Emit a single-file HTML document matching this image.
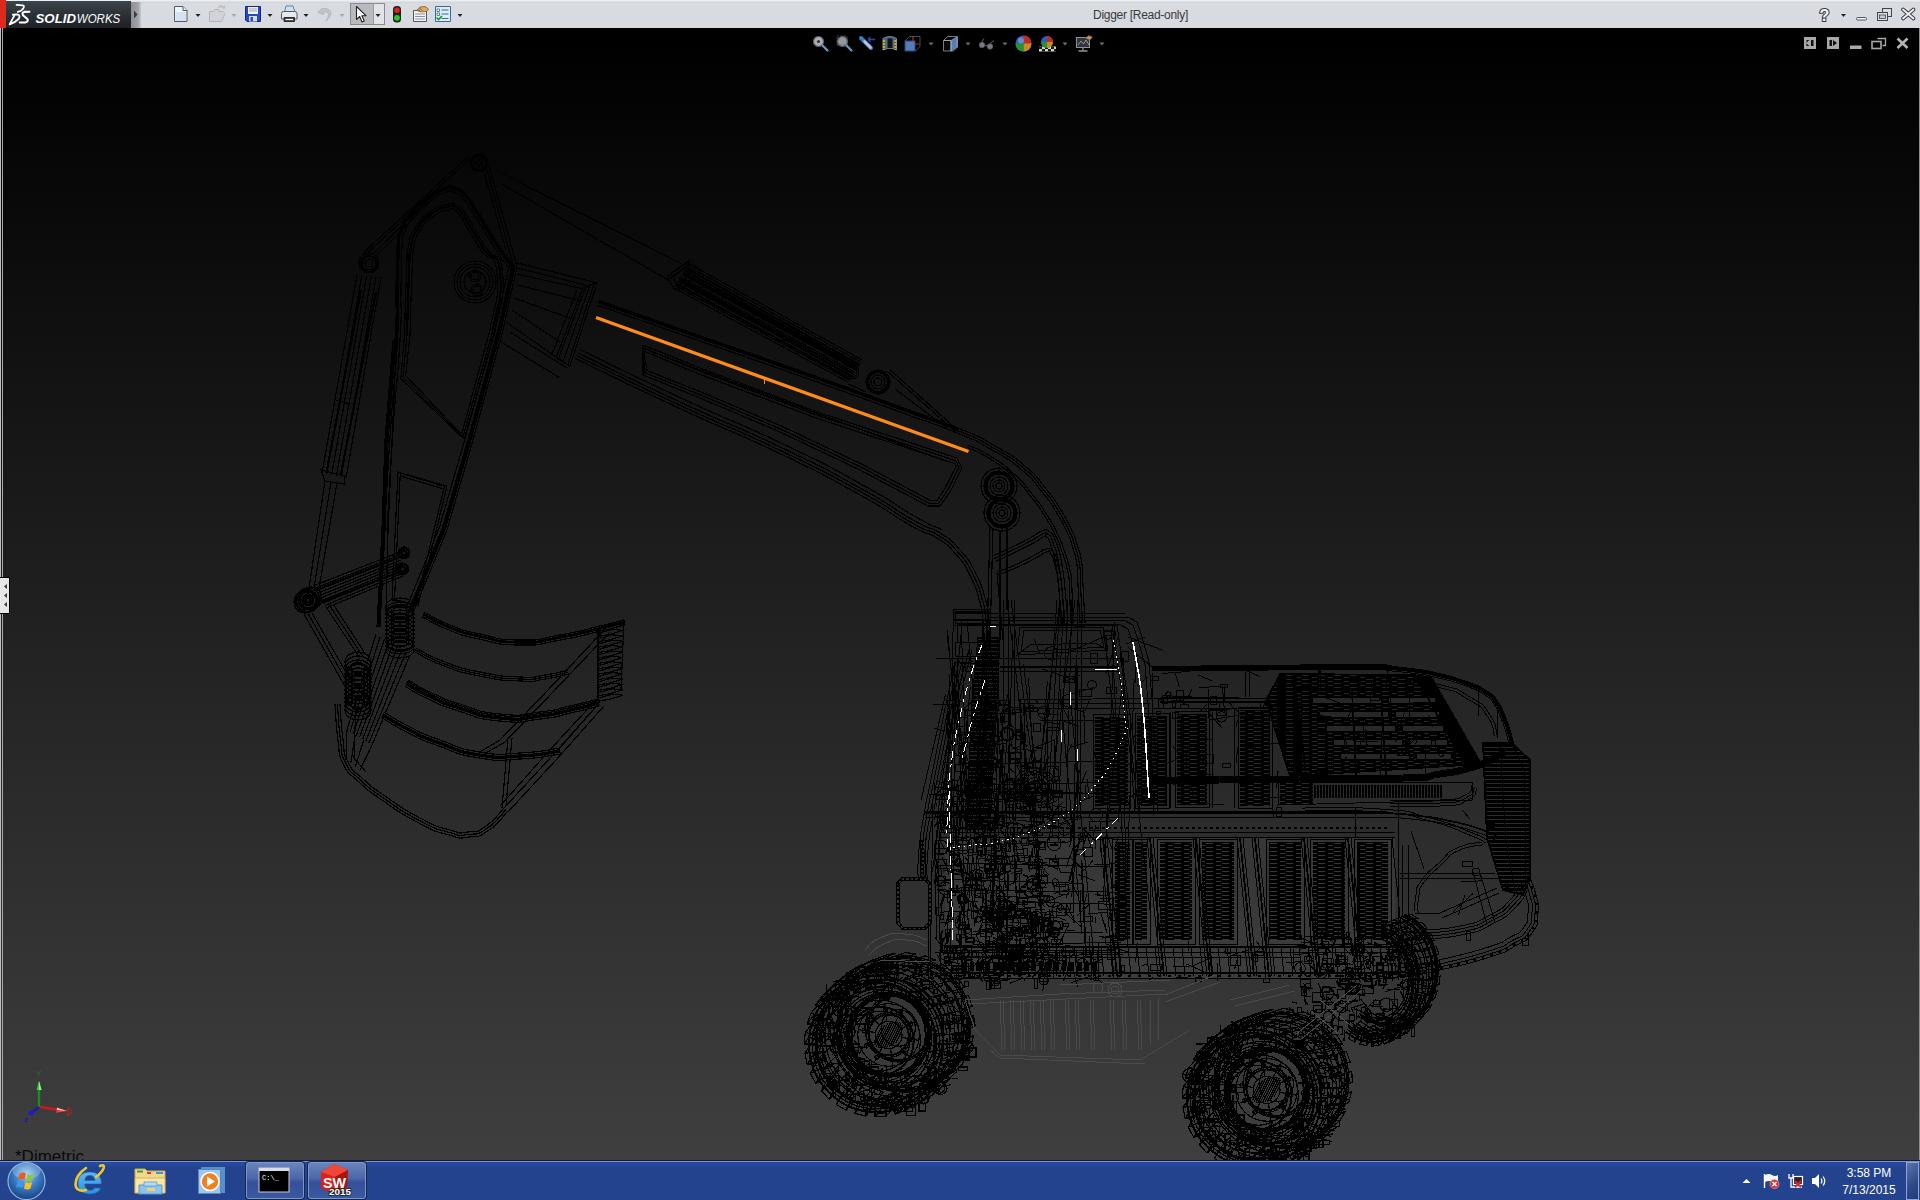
<!DOCTYPE html>
<html lang="en">
<head>
<meta charset="utf-8">
<title>Digger [Read-only] - SOLIDWORKS</title>
<style>
html,body{margin:0;padding:0;width:1920px;height:1200px;overflow:hidden;background:#000;font-family:"Liberation Sans",sans-serif;}
#app{position:absolute;left:0;top:0;width:1920px;height:1200px;overflow:hidden;}
#titlebar{position:absolute;left:0;top:0;width:1920px;height:28px;background:linear-gradient(#eaedf2 0,#eaedf2 1px,#dfe2e7 1px,#dfe2e7 2px,#d3d6db 2px,#d3d6db 3px,#d8dbe0 3px,#d8dbe0 16px,#d6dae4 18px,#d6dae4 21px,#d9dade 23px,#d9dade 26px,#dadadc 26px,#dadadc 28px);}
#redstrip{position:absolute;left:0;top:0;width:6px;height:28px;background:#dc2a1c;}
#logo{position:absolute;left:6px;top:1px;width:125px;height:27px;background:linear-gradient(#3b454b,#2b3137 50%,#1e2126);}
#logoarrow{position:absolute;left:131px;top:2px;width:10px;height:26px;background:linear-gradient(90deg,#8f9096,#a2a3a8 70%,#c8c9ce);}
#title{position:absolute;left:1093px;top:8px;font-size:12px;color:#3a3a3a;white-space:nowrap;letter-spacing:-0.28px;}
#viewport{position:absolute;left:0;top:28px;width:1920px;height:1132px;background:linear-gradient(#000 0,#000 1%,#3f3f3f 100%);}
#lb0{position:absolute;left:0;top:28px;width:1px;height:1132px;background:#bdbdbd;}
#lb1{position:absolute;left:2px;top:28px;width:1px;height:1132px;background:#a8a8a8;}
#rb{position:absolute;left:1919px;top:28px;width:1px;height:1132px;background:#8c8c94;}
#handle{position:absolute;left:0;top:577px;width:10px;height:37px;background:#e6e6e8;border-right:1px solid #000;border-top:1px solid #000;border-bottom:1px solid #000;box-sizing:border-box;}
#taskbar{position:absolute;left:0;top:1160px;width:1920px;height:40px;background:linear-gradient(#0e1c40 0,#0e1c40 1px,#7d95c4 1px,#7d95c4 2px,#25499b 2px,#25499b 5px,#23438f 7px,#23438f 100%);}
.tbtn{position:absolute;top:1162px;height:37px;border:1px solid #7f95c6;border-radius:3px;box-sizing:border-box;background:linear-gradient(#6a84bd,#4a66a6 45%,#34509a 55%,#3a58a0);box-shadow:0 0 0 1px #142652;}
#clock{position:absolute;left:1829px;top:1165px;width:80px;color:#fff;font-size:12px;line-height:17px;text-align:center;white-space:nowrap;}
#dimetric{position:absolute;left:15px;top:1147px;font-size:17px;letter-spacing:0;color:#0a0a0a;white-space:nowrap;}
#showdesk{position:absolute;left:1906px;top:1162px;width:13px;height:38px;box-sizing:border-box;border:1px solid #8ea4d4;background:linear-gradient(135deg,#5c74a8,#2f4a86 60%,#22397a);}
svg{position:absolute;left:0;top:0;overflow:visible;}
</style>
</head>
<body>
<div id="app">
<div id="viewport"></div>
<svg width="1920" height="1200" viewBox="0 0 1920 1200" shape-rendering="crispEdges">
<path d="M470 163a9 9 0 1 0 18 0a9 9 0 1 0 -18 0M472.5 163a6.5 6.5 0 1 0 13 0a6.5 6.5 0 1 0 -13 0M475 163a4 4 0 1 0 8 0a4 4 0 1 0 -8 0M477 163a2 2 0 1 0 4 0a2 2 0 1 0 -4 0M359 263a10 10 0 1 0 20 0a10 10 0 1 0 -20 0M362 263a7 7 0 1 0 14 0a7 7 0 1 0 -14 0M365 263a4 4 0 1 0 8 0a4 4 0 1 0 -8 0M454 282a21 21 0 1 0 42 0a21 21 0 1 0 -42 0M457 282a18 18 0 1 0 36 0a18 18 0 1 0 -36 0M460 282a15 15 0 1 0 30 0a15 15 0 1 0 -30 0M464 282a11 11 0 1 0 22 0a11 11 0 1 0 -22 0M469 276a6 6 0 1 0 12 0a6 6 0 1 0 -12 0M471 276a4 4 0 1 0 8 0a4 4 0 1 0 -8 0M471 290a6 6 0 1 0 12 0a6 6 0 1 0 -12 0M473 290a4 4 0 1 0 8 0a4 4 0 1 0 -8 0M362 254L470 155M364 256L472 157M375 257L442 190M373 254L440 188M488 162L517 267M486 166L514 268M484 172L506 250M382 530C384 496.7 383.7 493.3 388 430C392.3 366.7 392.3 386.7 395 340C397.7 293.3 395.3 321 396 290C396.7 259 395.7 267 397 247C398.3 227 395.7 241.3 400 230C404.3 218.7 402.3 223 410 213C417.7 203 412 208.3 423 200C434 191.7 431.7 192 443 188C454.3 184 449 185.7 457 188C465 190.3 460.3 187.7 467 195C473.7 202.3 466 192.7 477 210C488 227.3 487.3 228 500 247C512.7 266 510 260.3 515 267M384.5 530.1C386.5 496.8 386.2 493.5 390.5 430.2C394.8 366.8 394.8 386.8 397.5 340.1C400.2 293.4 397.8 321 398.5 290.1C399.2 259.1 398.2 266.9 399.5 247.2C400.8 227.4 398.2 241.8 402.3 230.9C406.5 220 404.6 224.2 412 214.5C419.4 204.9 413.9 210 424.5 202C435.1 193.9 433.2 194.2 443.8 190.4C454.4 186.5 449.2 188.3 456.3 190.4C463.4 192.5 459 189.7 465.2 196.7C471.3 203.7 464 194.1 474.9 211.3C485.8 228.6 485.2 229.3 497.9 248.4C510.6 267.4 508 261.8 513 268.5M387 530.3C389 497 388.7 493.7 393 430.3C397.3 367 397.3 387 400 340.3C402.7 293.5 400.3 321.1 401 290.1C401.7 259.1 400.8 266.8 402 247.3C403.2 227.9 400.7 242.2 404.7 231.8C408.7 221.4 406.9 225.3 414 216C421.1 206.8 415.8 211.8 426 204C436.3 196.2 434.8 196.4 444.7 192.7C454.5 189 449.4 190.9 455.6 192.8C461.8 194.7 457.6 191.7 463.3 198.4C469 205 461.9 195.5 472.8 212.7C483.6 229.8 483.1 230.7 495.8 249.8C508.6 268.9 505.9 263.3 511 270M517 267L503 330L473 440L447 530L413 613M515 266.6L501.1 329.5L471.1 439.5L445.1 529.3L411.1 612.2M512.1 265.9L498.2 328.8L468.2 438.7L442.3 528.4L408.4 611.1M509.2 265.3L495.2 328L465.3 437.8L439.4 527.4L405.6 610M393 340L385 440L382 530L377 627M396 340.2L388 440.2L385 530.1L380 627.2M397 330L388 530L386 612M407 335C407.7 314.3 407.7 302.3 409 273C410.3 243.7 408.3 261.3 411 247C413.7 232.7 410.7 240.7 417 230C423.3 219.3 420 222.7 430 215C440 207.3 438 209.3 447 207C456 204.7 451 204.3 457 208C463 211.7 456.3 204.7 465 218C473.7 231.3 471.3 229.7 483 248C494.7 266.3 496.7 245.7 500 273C503.3 300.3 495.3 311 493 330M493 330L463 437L403 377L407 335M410 335.2C410.7 314.5 410.7 302.3 412 273.1C413.3 243.9 411.4 261.4 413.9 247.5C416.5 233.7 413.6 241.6 419.6 231.5C425.5 221.5 422.4 224.6 431.8 217.4C441.2 210.2 439.9 212.2 447.8 209.9C455.6 207.6 450.5 207.3 455.4 210.6C460.3 213.8 454.1 206.6 462.5 219.6C470.8 232.7 469 231.7 480.5 249.6C492 267.5 493.8 246.8 497 273.4C500.2 299.9 492.4 310.7 490.1 329.3M490.1 329.3L461.6 434.3L405.6 375.6L410 335.2M404.5 334.9C405.2 314.2 405.2 302.3 406.5 272.9C407.8 243.4 405.8 261.3 408.5 246.5C411.3 231.8 408.2 239.9 414.9 228.7C421.5 217.5 418 221.1 428.5 213C439 205 436.4 207 446.4 204.6C456.3 202.2 451.4 201.8 458.3 205.9C465.2 209.9 458.2 203 467.1 216.6C476 230.2 473.3 228 485.1 246.7C496.9 265.3 499 244.7 502.5 272.7C505.9 300.7 497.8 311.3 495.4 330.6M495.4 330.6L464.2 439.2L400.8 378.2L404.5 334.9M398 472L447 486L418 606L392 600zM400.3 473.1L444.5 486.4L415.7 604.9L394.5 599.6zM400 476L444 489M357 275L322 473M361.8 275.4L326.8 474M366.6 275.8L331.6 475M371.4 276.2L336.4 476M376.2 276.6L341.2 477M381 277L346 478M321 470L345 476L344 484L325 481zM336 400L350 404M325 481L309 588M337 483L319 588M331 482L314 588M296 600a12 12 0 1 0 24 0a12 12 0 1 0 -24 0M298 600a10 10 0 1 0 20 0a10 10 0 1 0 -20 0M300 600a8 8 0 1 0 16 0a8 8 0 1 0 -16 0M302 600a6 6 0 1 0 12 0a6 6 0 1 0 -12 0M304 600a4 4 0 1 0 8 0a4 4 0 1 0 -8 0M300 598a11 11 0 1 0 22 0a11 11 0 1 0 -22 0M294 602a11 11 0 1 0 22 0a11 11 0 1 0 -22 0M313 586L400 552M314.4 588.4L400.3 554.7M315.9 590.9L400.7 557.3M317.3 593.3L401 560M318.8 595.8L401.3 562.7M320.2 598.2L401.7 565.3M321.7 600.7L402 568M323.1 603.1L402.3 570.7M324.6 605.6L402.7 573.3M326 608L403 576M398 553a6 6 0 1 0 12 0a6 6 0 1 0 -12 0M399.5 553a4.5 4.5 0 1 0 9 0a4.5 4.5 0 1 0 -9 0M401 553a3 3 0 1 0 6 0a3 3 0 1 0 -6 0M396.5 569a6 6 0 1 0 12 0a6 6 0 1 0 -12 0M398 569a4.5 4.5 0 1 0 9 0a4.5 4.5 0 1 0 -9 0M399.5 569a3 3 0 1 0 6 0a3 3 0 1 0 -6 0M304 614L346 688M308 613.5L348.5 684.5M312 613L351 681M326 607L360 658M329.5 605.5L363 656.5M333 604L366 655M386 606a14 8 0 1 0 28 0a14 8 0 1 0 -28 0M386 610a14 8 0 1 0 28 0a14 8 0 1 0 -28 0M386 614a14 8 0 1 0 28 0a14 8 0 1 0 -28 0M386 618a14 8 0 1 0 28 0a14 8 0 1 0 -28 0M386 622a14 8 0 1 0 28 0a14 8 0 1 0 -28 0M386 626a14 8 0 1 0 28 0a14 8 0 1 0 -28 0M386 630a14 8 0 1 0 28 0a14 8 0 1 0 -28 0M386 634a14 8 0 1 0 28 0a14 8 0 1 0 -28 0M386 638a14 8 0 1 0 28 0a14 8 0 1 0 -28 0M386 642a14 8 0 1 0 28 0a14 8 0 1 0 -28 0M386 646a14 8 0 1 0 28 0a14 8 0 1 0 -28 0M386 650a14 8 0 1 0 28 0a14 8 0 1 0 -28 0M391 612a9 5 0 1 0 18 0a9 5 0 1 0 -18 0M391 618a9 5 0 1 0 18 0a9 5 0 1 0 -18 0M391 624a9 5 0 1 0 18 0a9 5 0 1 0 -18 0M391 630a9 5 0 1 0 18 0a9 5 0 1 0 -18 0M391 636a9 5 0 1 0 18 0a9 5 0 1 0 -18 0M391 642a9 5 0 1 0 18 0a9 5 0 1 0 -18 0M345 662a13 10 0 1 0 26 0a13 10 0 1 0 -26 0M345 666a13 10 0 1 0 26 0a13 10 0 1 0 -26 0M345 670a13 10 0 1 0 26 0a13 10 0 1 0 -26 0M345 674a13 10 0 1 0 26 0a13 10 0 1 0 -26 0M345 678a13 10 0 1 0 26 0a13 10 0 1 0 -26 0M345 682a13 10 0 1 0 26 0a13 10 0 1 0 -26 0M345 686a13 10 0 1 0 26 0a13 10 0 1 0 -26 0M345 690a13 10 0 1 0 26 0a13 10 0 1 0 -26 0M345 694a13 10 0 1 0 26 0a13 10 0 1 0 -26 0M345 698a13 10 0 1 0 26 0a13 10 0 1 0 -26 0M345 702a13 10 0 1 0 26 0a13 10 0 1 0 -26 0M345 706a13 10 0 1 0 26 0a13 10 0 1 0 -26 0M345 710a13 10 0 1 0 26 0a13 10 0 1 0 -26 0M351 668a7 6 0 1 0 14 0a7 6 0 1 0 -14 0M351 674a7 6 0 1 0 14 0a7 6 0 1 0 -14 0M351 680a7 6 0 1 0 14 0a7 6 0 1 0 -14 0M351 686a7 6 0 1 0 14 0a7 6 0 1 0 -14 0M351 692a7 6 0 1 0 14 0a7 6 0 1 0 -14 0M351 698a7 6 0 1 0 14 0a7 6 0 1 0 -14 0M351 704a7 6 0 1 0 14 0a7 6 0 1 0 -14 0M376 634L347 730M380.2 636.6L350.1 731.9M384.5 639.2L353.2 733.8M388.8 641.9L356.4 735.6M393 644.5L359.5 737.5M397.2 647.1L362.6 739.4M401.5 649.8L365.8 741.2M405.8 652.4L368.9 743.1M410 655L372 745M347 730L346 760M355.3 735L350.7 763.3M363.7 740L355.3 766.7M372 745L360 770M424 612C432.7 616.3 431.3 617.7 450 625C468.7 632.3 456.7 629 480 634C503.3 639 493.3 639.7 520 640C546.7 640.3 533.3 639.7 560 635C586.7 630.3 578.7 631 600 626C621.3 621 616 622 624 620M423.3 613.3C432 617.7 430.7 619 449.5 626.4C468.2 633.8 456.2 630.4 479.7 635.5C503.2 640.5 493.1 641.2 520 641.5C546.8 641.8 533.5 641.2 560.3 636.5C587 631.8 579 632.5 600.3 627.5C621.7 622.5 616.4 623.5 624.4 621.5M422.7 614.7C431.4 619.1 430 620.4 448.9 627.8C467.8 635.2 455.7 631.9 479.4 636.9C503.1 642 492.9 642.7 520 643C547 643.3 533.6 642.6 560.5 638C587.4 633.3 579.3 633.9 600.7 628.9C622.1 623.9 616.7 624.9 624.7 622.9M421.8 616.5C430.6 620.9 429.1 622.2 448.2 629.7C467.2 637.1 455 633.8 479 638.9C502.9 644 492.6 644.7 519.9 645C547.2 645.3 533.8 644.6 560.9 639.9C587.9 635.2 579.7 635.9 601.1 630.9C622.6 625.8 617.2 626.9 625.2 624.9M416 648C425.7 652.7 423.7 654 445 662C466.3 670 455 667 480 672C505 677 498.3 676 520 677C541.7 678 529 677.3 545 675C561 672.7 560.3 671.7 568 670M415.1 649.8C424.9 654.5 422.8 655.8 444.3 663.9C465.8 671.9 454.4 668.9 479.6 674C504.8 679 498 678 519.9 679C541.8 680 529.1 679.3 545.3 677C561.5 674.6 560.7 673.6 568.4 672M414.3 651.6C424 656.3 421.9 657.6 443.6 665.7C465.2 673.9 453.8 670.8 479.2 675.9C504.6 681 497.7 680 519.8 681C541.9 682 529.2 681.3 545.6 679C561.9 676.6 561.1 675.6 568.8 673.9M408 680C416 684.3 414.7 685 432 693C449.3 701 437.3 697 460 704C482.7 711 473.3 711.3 500 714C526.7 716.7 516.7 714.7 540 712C563.3 709.3 550.7 710.3 570 706C589.3 701.7 588.7 701.3 598 699M407.3 681.3C415.3 685.7 413.9 686.3 431.4 694.4C448.8 702.4 436.7 698.4 459.6 705.4C482.4 712.5 473 712.8 499.9 715.5C526.7 718.2 516.7 716.2 540.2 713.5C563.7 710.8 550.9 711.8 570.3 707.5C589.7 703.1 589 702.8 598.4 700.5M406.6 682.6C414.6 687 413.2 687.6 430.7 695.7C448.3 703.8 436.1 699.8 459.1 706.9C482.1 714 472.6 714.3 499.7 717C526.8 719.7 516.7 717.7 540.3 715C564 712.3 551.2 713.3 570.7 708.9C590.1 704.6 589.4 704.2 598.7 701.9M405.6 684.4C413.7 688.8 412.3 689.4 429.9 697.5C447.5 705.7 435.3 701.6 458.5 708.8C481.7 715.9 472.2 716.2 499.5 719C526.9 721.7 516.7 719.7 540.6 717C564.4 714.3 551.5 715.3 571.1 710.9C590.6 706.5 589.8 706.2 599.2 703.9M404.7 686.2C412.8 690.6 411.3 691.2 429.1 699.4C446.8 707.5 434.5 703.5 457.9 710.7C481.3 717.9 471.7 718.2 499.3 721C526.9 723.7 516.7 721.7 540.8 719C564.9 716.2 551.9 717.2 571.5 712.8C591.2 708.4 590.3 708.1 599.7 705.8M384 712C392.7 717 391.3 717.7 410 727C428.7 736.3 416.7 731.7 440 740C463.3 748.3 453.3 747.7 480 752C506.7 756.3 493.3 754.3 520 753C546.7 751.7 546.7 749.7 560 748M383 713.7C391.7 718.8 390.3 719.4 409.1 728.8C427.9 738.2 415.8 733.5 439.3 741.9C462.9 750.3 452.8 749.6 479.7 754C506.6 758.3 493.2 756.3 520.1 755C547 753.7 546.9 751.7 560.2 750M382 715.5C390.7 720.5 389.3 721.1 408.2 730.6C427.1 740 414.9 735.3 438.7 743.8C462.4 752.2 452.2 751.5 479.4 755.9C506.5 760.4 493.2 758.3 520.2 757C547.2 755.7 547.1 753.6 560.5 752M381 717.2C389.8 722.3 388.3 722.9 407.3 732.4C426.3 741.9 414.1 737.1 438 745.7C461.9 754.2 451.6 753.5 479 757.9C506.5 762.4 493.1 760.3 520.3 759C547.5 757.7 547.3 755.6 560.7 754M624 620L621 690M598 628L598 700M598 628L612 624L623 625L610 629L598 631M598 633.4L612 629.4L623 630.4L610 634.4L598 636.4M598 638.8L612 634.8L623 635.8L610 639.8L598 641.8M598 644.2L612 640.2L623 641.2L610 645.2L598 647.2M598 649.6L612 645.6L623 646.6L610 650.6L598 652.6M598 655L612 651L623 652L610 656L598 658M598 660.4L612 656.4L623 657.4L610 661.4L598 663.4M598 665.8L612 661.8L623 662.8L610 666.8L598 668.8M598 671.2L612 667.2L623 668.2L610 672.2L598 674.2M598 676.6L612 672.6L623 673.6L610 677.6L598 679.6M598 682L612 678L623 679L610 683L598 685M598 687.4L612 683.4L623 684.4L610 688.4L598 690.4M598 692.8L612 688.8L623 689.8L610 693.8L598 695.8M598 698.2L612 694.2L623 695.2L610 699.2L598 701.2M606 628L548 690L500 740L480 752M610 632L553 692L505 742L484 754M600 702L552 756L504 808M604 706L556 760L508 812M596 700L548 752L500 806M340 704C341 716 340.3 720.7 343 740C345.7 759.3 341.7 749.3 348 762C354.3 774.7 349.7 766.7 362 778C374.3 789.3 365.7 782.7 385 796C404.3 809.3 398.3 806.7 420 818C441.7 829.3 434 825.3 450 830C466 834.7 456 833.3 468 832C480 830.7 474 834 486 826C498 818 498 814 504 808M337.5 704.2C338.5 716.3 337.8 720.7 340.5 740.3C343.3 760 339.2 750 345.8 763.1C352.4 776.3 347.7 768.2 360.3 779.8C372.9 791.5 364.1 784.6 383.6 798.1C403.1 811.5 396.9 808.8 418.8 820.2C440.7 831.7 432.8 827.6 449.3 832.4C465.8 837.2 455.6 835.9 468.3 834.5C481 833 474.9 836.3 487.4 828.1C499.9 819.8 499.6 815.9 505.8 809.8M335 704.4C336 716.5 335.2 720.7 338 740.7C340.9 760.6 336.7 750.6 343.5 764.2C350.4 777.9 345.7 769.7 358.6 781.7C371.5 793.6 362.5 786.5 382.2 800.1C401.8 813.7 395.5 810.9 417.7 822.4C439.8 834 431.6 830 448.6 834.8C465.6 839.6 455.2 838.5 468.6 837C481.9 835.4 475.8 838.6 488.8 830.2C501.8 821.7 501.3 817.7 507.5 811.5M356 700L354 758L366 772M508 738L502 808M512 738L506 806M560 748L600 702M517 263L597 283M517 268L590 286M517 274L584 289M517 285L582 301M583 287L597 283L570 366L556 358zM585.2 288.2L594.5 282.6L567.8 364.8L558.5 358.4zM590 285L563 362M577 290L552 354M510 332L567 368M506 322L556 357M512 310L560 342M514 298L575 320M498 340L560 378M597 305C631.3 317 625.7 315 700 341C774.3 367 753.3 359.3 820 383C886.7 406.7 854.3 395.3 900 412C945.7 428.7 926.3 420.3 957 433C987.7 445.7 970.3 437.7 992 450C1013.7 462.3 1005.3 456 1022 470C1038.7 484 1031 478.7 1042 492C1053 505.3 1047 497.3 1055 510C1063 522.7 1060.3 518.3 1066 530C1071.7 541.7 1068.3 533.3 1072 545C1075.7 556.7 1075 551.7 1077 565C1079 578.3 1077 565.7 1078 585C1079 604.3 1079.3 610.3 1080 623M597.8 302.6C632.2 314.6 626.5 312.6 700.8 338.6C775.2 364.6 754.2 357 820.8 380.6C887.5 404.3 855.2 393 900.9 409.7C946.6 426.3 927.2 418 958 430.7C988.7 443.4 971.4 435.4 993.2 447.8C1015.1 460.3 1006.7 453.9 1023.6 468.1C1040.5 482.3 1032.8 476.9 1043.9 490.4C1055.1 503.9 1049 495.8 1057.1 508.7C1065.2 521.5 1062.5 517 1068.2 528.9C1074 540.8 1070.6 532.3 1074.4 544.3C1078.1 556.2 1077.4 551.1 1079.5 564.6C1081.5 578.2 1079.5 565.5 1080.5 584.9C1081.5 604.3 1081.8 610.2 1082.5 622.9M598.6 300.3C633 312.3 627.3 310.3 701.7 336.3C776 362.3 755 354.6 821.7 378.3C888.4 402 856 390.6 901.7 407.3C947.5 424 928 415.6 958.9 428.4C989.8 441.2 972.4 433.1 994.5 445.7C1016.6 458.3 1008.1 451.8 1025.2 466.2C1042.3 480.6 1034.5 475.1 1045.9 488.8C1057.2 502.5 1051 494.3 1059.2 507.3C1067.4 520.3 1064.7 515.8 1070.5 527.8C1076.3 539.9 1073 531.4 1076.8 543.5C1080.6 555.6 1079.9 550.5 1081.9 564.3C1084 578 1082 565.2 1083 584.7C1084 604.2 1084.3 610.1 1085 622.7M968 445C975.3 448.7 975 446.7 990 456C1005 465.3 999 460.3 1013 473C1027 485.7 1020.7 480 1032 494C1043.3 508 1038.3 501.3 1047 515C1055.7 528.7 1052.3 523.3 1058 535C1063.7 546.7 1060 538.3 1064 550C1068 561.7 1067.3 556.7 1070 570C1072.7 583.3 1071 572.3 1072 590C1073 607.7 1072.7 612 1073 623M966.9 447.2C974.1 450.9 973.9 448.9 988.7 458.1C1003.5 467.3 997.5 462.4 1011.3 474.9C1025.1 487.3 1018.9 481.7 1030.1 495.6C1041.2 509.4 1036.3 502.8 1044.9 516.3C1053.5 529.8 1050.2 524.6 1055.8 536.1C1061.3 547.6 1057.7 539.3 1061.6 550.8C1065.6 562.3 1064.9 557.4 1067.5 570.5C1070.2 583.6 1068.5 572.6 1069.5 590.1C1070.5 607.7 1070.2 612.1 1070.5 623.1M578 353C612 369.3 612.7 370.7 680 402C747.3 433.3 720 418.3 780 447C840 475.7 815.7 463.7 860 488C904.3 512.3 886.3 505 913 520C939.7 535 924.3 523 940 533C955.7 543 948.3 537 960 550C971.7 563 966.7 556 975 572C983.3 588 980.3 582 985 598C989.7 614 987.3 606 989 620C990.7 634 989.7 633.3 990 640M576.7 355.7C610.7 372 611.4 373.4 678.7 404.7C746.1 436.1 718.8 421.1 778.7 449.7C838.6 478.3 814.3 466.3 858.6 490.6C902.8 514.9 884.9 507.6 911.5 522.6C938.1 537.6 923 525.7 938.4 535.5C953.8 545.3 946.4 539.4 957.8 552C969.1 564.6 964.2 557.8 972.3 573.4C980.5 589 977.6 583.2 982.1 598.8C986.7 614.5 984.4 606.6 986 620.4C987.6 634.1 986.7 633.6 987 640.1M575.4 358.4C609.4 374.8 610.1 376.1 677.5 407.4C744.8 438.8 717.5 423.8 777.4 452.4C837.3 481 812.9 469 857.1 493.3C901.3 517.5 883.5 510.3 910.1 525.2C936.6 540.2 921.6 528.5 936.8 538.1C951.9 547.7 944.6 541.8 955.5 554C966.5 566.2 961.8 559.5 969.7 574.8C977.6 590 974.8 584.4 979.2 599.7C983.7 615 981.5 607.2 983 620.7C984.6 634.2 983.7 633.8 984 640.3M579.7 349.4C613.7 365.7 614.4 367 681.7 398.4C749 429.7 721.6 414.7 781.7 443.4C841.8 472.1 817.5 460.1 861.9 484.5C906.3 508.9 888.4 501.5 915 516.5C941.6 531.5 932.8 525.1 941.7 529.4M643 345L700 368L820 413L957 458L962 468L950 492L940 506L928 506L860 470L780 432L700 398L643 375L643 345M643.4 348L698.9 370.8L819 415.8L955.9 460.8L959.1 467.4L947.4 490.5L938.4 503.5L929.2 503.3L861.3 467.3L781.2 429.3L701.2 395.2L645 372.8L643.4 348M643.7 351L697.8 373.6L818 418.7L954.8 463.6L956.1 466.8L944.8 489L936.8 500.9L930.5 500.5L862.7 464.6L782.5 426.5L702.3 392.5L647.1 370.6L643.7 351M652 352L948 462M688 263L862 360M686.7 265.3L860.7 362M685.5 267.5L859.5 364M684.2 269.8L858.2 366M682.9 272.1L856.9 368M681.6 274.4L855.6 370M680.4 276.6L854.4 372M679.1 278.9L853.1 374M677.8 281.2L851.8 376M676.5 283.5L850.5 378M675.3 285.7L849.3 380M674 288L848 382M667 277L688 262L696 268L675 290zM671 273L690 260L700 270L680 292zM495 170L682 264M500 183L670 281M866 382a12 12 0 1 0 24 0a12 12 0 1 0 -24 0M868.5 382a9.5 9.5 0 1 0 19 0a9.5 9.5 0 1 0 -19 0M871 382a7 7 0 1 0 14 0a7 7 0 1 0 -14 0M874 382a4 4 0 1 0 8 0a4 4 0 1 0 -8 0M845 372a7 7 0 1 0 14 0a7 7 0 1 0 -14 0M847 372a5 5 0 1 0 10 0a5 5 0 1 0 -10 0M887 371L957 433M889 369L960 432M895 389L947 428M848 384L866 392M981 486a18 18 0 1 0 36 0a18 18 0 1 0 -36 0M984 486a15 15 0 1 0 30 0a15 15 0 1 0 -30 0M987 486a12 12 0 1 0 24 0a12 12 0 1 0 -24 0M990 486a9 9 0 1 0 18 0a9 9 0 1 0 -18 0M993 486a6 6 0 1 0 12 0a6 6 0 1 0 -12 0M996 486a3 3 0 1 0 6 0a3 3 0 1 0 -6 0M984 513a18 18 0 1 0 36 0a18 18 0 1 0 -36 0M987 513a15 15 0 1 0 30 0a15 15 0 1 0 -30 0M990 513a12 12 0 1 0 24 0a12 12 0 1 0 -24 0M993 513a9 9 0 1 0 18 0a9 9 0 1 0 -18 0M996 513a6 6 0 1 0 12 0a6 6 0 1 0 -12 0M999 513a3 3 0 1 0 6 0a3 3 0 1 0 -6 0M990 527L987 640M993 528L990 640M1007 527L1007 610M997 573L1003 640M1000 530L1000 640M993 556C998.7 553.3 997.7 554 1010 548C1022.3 542 1019.3 543.7 1030 538C1040.7 532.3 1035.3 533 1042 531C1048.7 529 1045.3 528.3 1050 532C1054.7 535.7 1052 531 1056 542C1060 553 1058.7 545.7 1062 565C1065.3 584.3 1064 580 1066 600C1068 620 1067.3 616.7 1068 625M994.3 558.7C1000 556 998.9 556.7 1011.3 550.7C1023.7 544.7 1020.9 546.3 1031.4 540.6C1041.9 535 1037.3 536 1042.9 533.9C1048.4 531.8 1044.7 531.3 1048.1 534.4C1051.6 537.4 1049.5 532.6 1053.2 543C1056.8 553.4 1055.8 546.4 1059 565.5C1062.3 584.6 1061 580.4 1063 600.3C1065 620.2 1064.3 616.9 1065 625.2M995.6 561.4C1001.2 558.8 1000.2 559.4 1012.6 553.4C1025 547.4 1022.4 548.8 1032.8 543.3C1043.2 537.7 1039.2 538.9 1043.7 536.7C1048.2 534.6 1044.1 534.3 1046.3 536.7C1048.5 539.2 1047.1 534.3 1050.4 544.1C1053.6 553.8 1052.9 547.2 1056.1 566C1059.3 584.9 1058.1 580.8 1060 600.6C1062 620.4 1061.4 617.2 1062 625.5M997 572C1003 569.7 1002.3 570.7 1015 565C1027.7 559.3 1024.7 560.3 1035 555C1045.3 549.7 1040 550 1046 549C1052 548 1049 546.7 1053 552C1057 557.3 1055 552.3 1058 565C1061 577.7 1060 570 1062 590C1064 610 1063.3 613.3 1064 625M998.1 574.8C1004.1 572.4 1003.5 573.4 1016.2 567.7C1029 562 1026.3 562.9 1036.4 557.7C1046.5 552.4 1041.8 553.2 1046.5 552C1051.2 550.7 1047.7 549.2 1050.6 553.8C1053.5 558.4 1052.3 553.5 1055.1 565.7C1057.9 577.9 1057 570.5 1059 590.3C1061 610.1 1060.3 613.5 1061 625.2" fill="none" stroke="#000" stroke-width="1.2"/>
<path d="M471.5 163a7.5 7.5 0 1 0 15 0a7.5 7.5 0 1 0 -15 0M361 264a8 8 0 1 0 16 0a8 8 0 1 0 -16 0M396.2 340C396.5 323.4 396.5 321 397.2 290C397.9 259 396.9 266.9 398.2 247.1C399.5 227.2 396.9 241.5 401.1 230.4C405.4 219.3 403.4 223.6 411 213.7C418.5 203.9 412.9 209.2 423.7 201C434.5 192.8 432.4 193.1 443.4 189.1C454.4 185.2 449.1 186.9 456.7 189.2C464.2 191.4 459.7 188.6 466.1 195.8C472.6 203 465 193.4 476 210.6C486.9 227.9 486.3 228.6 499 247.7C511.7 266.7 509 261 514 267.7M513.6 266.2L499.6 329.1L469.6 439.1L443.7 528.9L409.8 611.7M394.5 340.1L386.5 440.1L383.5 530.1L378.5 627.1M407 335C407.7 314.3 407.7 302.3 409 273C410.3 243.7 408.3 261.3 411 247C413.7 232.7 410.7 240.7 417 230C423.3 219.3 420 222.7 430 215C440 207.3 438 209.3 447 207C456 204.7 451 204.3 457 208C463 211.7 456.3 204.7 465 218C473.7 231.3 471.3 229.7 483 248C494.7 266.3 496.7 245.7 500 273C503.3 300.3 495.3 311 493 330M361 290L327 470M376 292L341 474M299 600a9 9 0 1 0 18 0a9 9 0 1 0 -18 0M302.5 600a5.5 5.5 0 1 0 11 0a5.5 5.5 0 1 0 -11 0M296 601a11 11 0 1 0 22 0a11 11 0 1 0 -22 0M305.5 600a2.5 2.5 0 1 0 5 0a2.5 2.5 0 1 0 -5 0M316 590L400 557M322 602L402 571M399 553a5 5 0 1 0 10 0a5 5 0 1 0 -10 0M401.5 553a2.5 2.5 0 1 0 5 0a2.5 2.5 0 1 0 -5 0M401 552a4 4 0 1 0 8 0a4 4 0 1 0 -8 0M397.5 569a5 5 0 1 0 10 0a5 5 0 1 0 -10 0M400 569a2.5 2.5 0 1 0 5 0a2.5 2.5 0 1 0 -5 0M399.5 568a4 4 0 1 0 8 0a4 4 0 1 0 -8 0M387 612a13 7 0 1 0 26 0a13 7 0 1 0 -26 0M387 644a13 7 0 1 0 26 0a13 7 0 1 0 -26 0M347 672a11 8 0 1 0 22 0a11 8 0 1 0 -22 0M347 700a11 8 0 1 0 22 0a11 8 0 1 0 -22 0M423.1 613.8C431.8 618.1 430.4 619.5 449.3 626.9C468.1 634.3 456 630.9 479.6 636C503.1 641 493.1 641.7 520 642C546.9 642.3 533.5 641.7 560.3 637C587.2 632.3 579.1 633 600.5 627.9C621.8 622.9 616.5 623.9 624.5 621.9M406.3 683.1C414.4 687.4 413 688.1 430.5 696.2C448.1 704.3 435.9 700.2 459 707.3C482 714.4 472.5 714.8 499.7 717.5C526.8 720.2 516.7 718.2 540.4 715.5C564.1 712.8 551.3 713.8 570.8 709.4C590.2 705.1 589.5 704.7 598.8 702.4M382.5 714.6C391.2 719.6 389.8 720.3 408.7 729.7C427.5 739.1 415.4 734.4 439 742.8C462.6 751.3 452.5 750.6 479.5 755C506.6 759.4 493.2 757.3 520.1 756C547.1 754.7 547 752.6 560.4 751M598.2 301.7C632.5 313.7 626.8 311.7 701.2 337.7C775.5 363.7 754.5 356 821.2 379.7C887.9 403.4 855.5 392 901.2 408.7C946.9 425.4 939.2 422.7 958.2 429.7M686 268L860 365M683 273.3L857 369.7M680 278.7L854 374.3M677 284L851 379M684 270L858 368M679 280L853 377M670 279L690 264M867.5 382a10.5 10.5 0 1 0 21 0a10.5 10.5 0 1 0 -21 0M985.5 486a13.5 13.5 0 1 0 27 0a13.5 13.5 0 1 0 -27 0M988.5 513a13.5 13.5 0 1 0 27 0a13.5 13.5 0 1 0 -27 0" fill="none" stroke="#000" stroke-width="2.2"/>
<path d="M596 317.500L968.500 451.500" stroke="#ff8c1a" stroke-width="3.400" shape-rendering="auto" fill="none"/>
<path d="M764.500 379v5" stroke="#ff8c1a" stroke-width="1" fill="none"/>
<defs>
<pattern id="hh" width="16" height="4" patternUnits="userSpaceOnUse"><path d="M0 0h16v1h-16zM5 1h11v1h-11zM0 2h16v1h-16zM0 3h6v1h-6zM13 3h3v1h-3z" fill="#000"/></pattern>
<pattern id="hh2" width="8" height="4" patternUnits="userSpaceOnUse"><rect width="8" height="3" fill="#000"/></pattern>
<pattern id="hv" width="3" height="8" patternUnits="userSpaceOnUse"><rect width="2" height="8" fill="#000"/></pattern>
<pattern id="xh" width="7" height="4" patternUnits="userSpaceOnUse"><rect width="7" height="4" fill="#000"/><rect x="1" y="1" width="2" height="1" fill="#2b2b2b"/><rect x="4" y="3" width="2" height="1" fill="#2b2b2b"/></pattern>
<pattern id="xh2" width="4" height="4" patternUnits="userSpaceOnUse"><rect width="4" height="4" fill="#000"/><rect x="1" y="1" width="1" height="1" fill="#2d2d2d"/><rect x="3" y="3" width="1" height="1" fill="#2d2d2d"/></pattern>
</defs>
<path d="M945 838H1395V978H945z" fill="#fff" opacity=".045"/>
<path d="M978 637L1000 637L997 700L990 830L966 830L972 700z" fill="url(#hh2)" stroke="none"/>
<path d="M1152 668.5L1392 667M1152 781C1174.7 780.7 1170.7 780.7 1220 780C1269.3 779.3 1239 779.7 1300 779C1361 778.3 1356.3 779.7 1403 778C1449.7 776.3 1417.7 777.3 1440 774C1462.3 770.7 1453.3 772.7 1470 768C1486.7 763.3 1478.3 765.3 1490 760C1501.7 754.7 1500 754.7 1505 752" fill="none" stroke="#000" stroke-width="5"/>
<path d="M1095 717L1128 717L1128 806L1095 806z" fill="url(#hh)" stroke="none"/>
<path d="M1137 716L1167 716L1167 806L1137 806z" fill="url(#hh)" stroke="none"/>
<path d="M1177 714L1207 714L1207 805L1177 805z" fill="url(#hh)" stroke="none"/>
<path d="M1240 710L1270 710L1270 806L1240 806z" fill="url(#hh)" stroke="none"/>
<path d="M1280 674L1415 675L1465 765L1290 776L1266 701z" fill="url(#hh)" stroke="none"/>
<path d="M1415 675L1431 676L1481 763L1465 765z" fill="#000"/>
<path d="M1266 701L1280 674L1296 690L1306 776L1290 776z" fill="url(#hh2)" stroke="none"/>
<rect x="1312" y="697" width="70" height="7" rx="3.500" fill="#272727" stroke="#000" stroke-width="1.500"/>
<rect x="1388" y="697" width="48" height="7" rx="3.500" fill="#272727" stroke="#000" stroke-width="1.500"/>
<rect x="1319" y="711" width="70" height="7" rx="3.500" fill="#272727" stroke="#000" stroke-width="1.500"/>
<rect x="1395" y="711" width="45" height="7" rx="3.500" fill="#272727" stroke="#000" stroke-width="1.500"/>
<rect x="1326" y="725" width="70" height="7" rx="3.500" fill="#272727" stroke="#000" stroke-width="1.500"/>
<rect x="1402" y="725" width="42" height="7" rx="3.500" fill="#272727" stroke="#000" stroke-width="1.500"/>
<rect x="1333" y="739" width="70" height="7" rx="3.500" fill="#272727" stroke="#000" stroke-width="1.500"/>
<rect x="1409" y="739" width="39" height="7" rx="3.500" fill="#272727" stroke="#000" stroke-width="1.500"/>
<rect x="1340" y="753" width="70" height="7" rx="3.500" fill="#272727" stroke="#000" stroke-width="1.500"/>
<rect x="1416" y="753" width="36" height="7" rx="3.500" fill="#272727" stroke="#000" stroke-width="1.500"/>
<path d="M1313 785L1442 785L1442 798L1313 798z" fill="url(#hv)" stroke="none"/>
<path d="M1280 783L1313 783L1313 805L1280 805z" fill="url(#hh)" stroke="none"/>
<path d="M1483 743L1512 743L1530 760L1530 878L1523 895L1503 890L1487 838z" fill="url(#hh2)" stroke="none"/>
<path d="M940 828H1390" stroke="#000" stroke-width="2" stroke-dasharray="2.500 3.500" fill="none"/>
<path d="M1115 842L1130 842L1130 940L1115 940z" fill="url(#hh)" stroke="none"/>
<path d="M1135 842L1147 842L1147 940L1135 940z" fill="url(#hh)" stroke="none"/>
<path d="M1160 842L1192 842L1192 940L1160 940z" fill="url(#hh)" stroke="none"/>
<path d="M1202 842L1234 842L1234 940L1202 940z" fill="url(#hh)" stroke="none"/>
<path d="M1269 842L1301 842L1301 940L1269 940z" fill="url(#hh)" stroke="none"/>
<path d="M1313 842L1345 842L1345 940L1313 940z" fill="url(#hh)" stroke="none"/>
<path d="M1357 842L1388 842L1388 940L1357 940z" fill="url(#hh)" stroke="none"/>
<path d="M948 976H1395" stroke="#000" stroke-width="2.500" stroke-dasharray="3 7" fill="none"/>
<path d="M962 966H1100" stroke="#000" stroke-width="9" stroke-dasharray="5 3 4 2 6 3" fill="none"/>
<path d="M1528.6 878.5C1530.6 884.1 1531.9 883.9 1534.5 895.3C1537.2 906.8 1537.8 900.6 1536.5 912.8C1535.3 925.1 1538.2 921.5 1530.8 932.1C1523.4 942.8 1528 936.9 1514.3 944.7C1500.5 952.5 1514.4 947.6 1489.5 955.6C1464.7 963.5 1469.6 961.6 1439.7 968.5C1409.7 975.5 1413 973.9 1399.7 976.5" stroke="#000" stroke-width="2.500" stroke-dasharray="2.500 6" fill="none"/>
<path d="M897.5 883.9L902.8 878.5L925.2 878.5L929.5 883.9L929.5 923.1L924.2 928.5L902.7 928.5L897.5 922.1z" stroke="#000" stroke-width="2.500" stroke-dasharray="2 2.500" fill="none"/>
<path d="M922 840V878" stroke="#000" stroke-width="3" stroke-dasharray="2 2" fill="none"/>
<path d="M953 609L990 609L990 625L953 625zM955 611L988 611L988 623L955 623zM955 642L985 642L985 656L955 656zM957 625L957 642M983 625L983 642M987 617L1060 617L1128 617L1137 622L1142 637L1149 662L1152 700L1156 760L1158 812M983 620L1056 620L1124 620L1133 625L1138 640L1145 665L1148 703L1152 763L1154 815M978 624L1051 624L1119 624L1128 629L1133 644L1140 669M990 613L1125 613M1020 627L1103 627L1108 650L1017 655zM1024 630L1100 630L1104 647L1021 652zM1017 655L1030 645L1095 643L1108 650M1000 671L1118 671M960 663L1000 663M1020 700L1240 697M1020 708L1150 708M1020 704L1150 703M1020 700L1020 800M1024 704L1024 800M1040 720L1095 720M962 662C959 674.7 958 677.3 953 700C948 722.7 951 710 947 730C943 750 944.7 741.7 941 760C937.3 778.3 939.7 766.7 936 785C932.3 803.3 933.7 793.3 930 815C926.3 836.7 927 828.3 925 850C923 871.7 924.3 870 924 880M959.1 661.3C956.1 674 955.1 676.7 950.1 699.4C945.1 722.1 948.1 709.4 944.1 729.4C940.1 749.4 941.7 741.1 938.1 759.4C934.4 777.7 936.7 766 933.1 784.4C929.4 802.8 930.7 792.7 927 814.5C923.4 836.3 924 827.9 922 849.7C920 871.5 921.3 869.8 921 879.9M956.2 660.6C953.2 673.3 952.2 676 947.1 698.7C942.1 721.4 945.1 708.8 941.1 728.8C937.1 748.9 938.8 740.5 935.1 758.8C931.4 777.2 933.8 765.4 930.1 783.8C926.4 802.2 927.8 792.1 924.1 814C920.4 835.9 921.1 827.5 919 849.4C917 871.4 918.3 869.7 918 879.8M964.9 662.7C961.9 675.3 960.9 678 955.9 700.6C950.9 723.3 953.9 710.6 949.9 730.6C945.9 750.6 947.6 742.3 943.9 760.6C940.3 778.9 942.6 767.3 938.9 785.6C935.3 803.9 936.6 793.9 933 815.5C929.3 837.1 930 828.7 928 850.3C926 871.8 927.3 870.2 927 880.1M972 650C968.7 663.3 968.7 660 962 690C955.3 720 958 706.7 952 740C946 773.3 948 760 944 790C940 820 942 803.3 940 830C938 856.7 938 833.3 938 870C938 906.7 939.3 916.7 940 940M969.1 649.3C965.8 662.6 965.8 659.3 959.1 689.3C952.4 719.4 955.1 706.1 949 739.5C943 772.9 945 759.5 941 789.6C937 819.7 939 803 937 829.8C935 856.6 935 833.2 935 870C935 906.8 936.3 916.7 937 940.1M978 637L972 700L966 830M1000 637L997 700L990 830M989 637L984 720L978 830M1000 600L996 820M1004 600L1002 820M1008 600L1010 820M1014 600L1016 820M1060 600L1047 820M1064 600L1052 820M1068 600L1058 820M1072 600L1066 820M1078 600L1074 820M1082 600L1080 820M1057 600L1040 820M1007 600L1030 790M1011 600L1036 790M1060 600L1036 800M1075 600L1050 800M990 640L1004 800M1047 700L1047 800M1077 667L1077 812M1012.9 635.4L1002.5 928.1M954.8 662.4L953.4 890M957.4 657.6L965.2 933.2M947.4 629.7L974.8 926.4M988.1 630.5L1008.3 837.9M952.4 660.4L969.1 816.9M961.3 632L936.2 880.8M982.2 621.5L994.5 931.1M1028.5 678.2L1042.9 933M953.1 621.7L950.7 920.7M990.7 652.8L967.1 919.8M991.9 694.6L969.2 790.2M1016.7 678.8L1045.1 950.3M990.1 655.1L973.3 912.9M1010.3 695.5L1003.4 786.3M987.1 645.4L959.5 958.1M955 691.9L984.2 903.9M949.8 673.8L948 797.1M970.3 686.7L945.9 944.7M1023.5 663.9L1038.6 791.2M985.9 679.3L1001.6 784.8M945.7 693.6L921 800.4M978.2 690.1L976.7 804.4M967.2 622.3L983.5 809.6M947.1 634.8L974.6 870.3M977.2 675.5L1006.1 888.2M986.6 686.3L972.7 798.6M997.9 638.5L985.6 861.7M961.1 621L966.6 783.4M957 689.7L932.4 871.9M1111.4 629.1L1128.2 951.2M1076.1 656.5L1073.7 905.1M1122.2 685.4L1103.8 857.1M1060.1 689.1L1082 934.4M1068.8 680.9L1093.6 954.6M1120.6 655.6L1150.6 914.9M1123.7 657.9L1125.2 852.1M1134.2 678.5L1126.9 881.1M1114.8 621.7L1103.4 901.5M1047.4 681.4L1039 788.8M973.3 931.5L1102.9 932.9M936.4 658.2L1123.7 658.9M988.5 844.6L1065.2 841.9M938.9 950.1L1097 951M940.6 945.6L1121.3 942.3M975.3 785.2L1140.4 781.6M944.7 879.5L1082.6 883.4M940 912.2L1030.6 908.4M937.5 889.9L1132 892.3M995.9 901.6L1112.3 904.2M978.4 813.7L1039.1 814.1M960.2 956.9L1122.9 954.3M970.2 794.1L1130 792.7M947.3 790L1105.1 793.5M977.9 763.7L1102.4 761.3M948.8 862.8L1109.8 866.8M1117 625L1128 700L1136 760L1140 812M1112 625L1123 700L1131 760L1135 812M1103 627L1112 700L1118 760L1120 812M1013 787a22 18.7 0 1 0 44 0a22 18.7 0 1 0 -44 0M1016 787a19 16.1 0 1 0 38 0a19 16.1 0 1 0 -38 0M1020 787a15 12.8 0 1 0 30 0a15 12.8 0 1 0 -30 0M1024 787a11 9.3 0 1 0 22 0a11 9.3 0 1 0 -22 0M1028 787a7 6 0 1 0 14 0a7 6 0 1 0 -14 0M1000 790a12 12 0 1 0 24 0a12 12 0 1 0 -24 0M1004 790a8 8 0 1 0 16 0a8 8 0 1 0 -16 0M1041 775a9 9 0 1 0 18 0a9 9 0 1 0 -18 0M1387 666C1396.3 667 1398.3 666.7 1415 669C1431.7 671.3 1420.3 669 1437 673C1453.7 677 1448.3 675 1465 681C1481.7 687 1476 684 1487 691C1498 698 1492 693.7 1498 702C1504 710.3 1501 706.7 1505 716C1509 725.3 1507 720.3 1510 730C1513 739.7 1512.7 740 1514 745M1386.8 667.5C1396.2 668.5 1398.2 668.2 1414.8 670.5C1431.4 672.8 1420.1 670.5 1436.6 674.5C1453.2 678.4 1448 676.5 1464.5 682.4C1481 688.3 1475.4 685.4 1486.2 692.3C1497 699.1 1491 694.8 1496.8 702.9C1502.6 711 1499.7 707.4 1503.6 716.6C1507.5 725.8 1505.6 720.8 1508.6 730.4C1511.5 740 1511.2 740.4 1512.6 745.4M1386.7 669C1396 670 1398 669.7 1414.6 672C1431.1 674.3 1419.8 672 1436.3 675.9C1452.8 679.9 1447.6 678 1464 683.8C1480.3 689.7 1474.9 686.9 1485.4 693.5C1495.9 700.2 1489.9 695.9 1495.6 703.8C1501.2 711.6 1498.4 708.1 1502.2 717.2C1506.1 726.2 1504.2 721.4 1507.1 730.9C1510.1 740.4 1509.8 740.8 1511.1 745.8M1386.5 670.5C1395.8 671.5 1397.9 671.2 1414.4 673.5C1430.9 675.8 1419.6 673.4 1435.9 677.4C1452.3 681.3 1447.3 679.4 1463.5 685.2C1479.7 691 1474.3 688.3 1484.6 694.8C1494.9 701.3 1488.9 697 1494.3 704.6C1499.8 712.3 1497.1 708.9 1500.9 717.8C1504.6 726.7 1502.8 721.9 1505.7 731.3C1508.6 740.8 1508.3 741.2 1509.7 746.2M1152 673L1152 700M1245 672L1245 697M1249 672L1249 697M1387 676C1403.7 678.7 1409.3 677 1437 684C1464.7 691 1452.3 686.7 1470 697C1487.7 707.3 1481 702.3 1490 715C1499 727.7 1494.7 728.3 1497 735M1386.5 679C1403.1 681.6 1408.9 680 1436.3 686.9C1463.6 693.8 1451.4 689.6 1468.5 699.6C1485.6 709.5 1479 704.6 1487.6 716.7C1496.1 728.9 1492 729.6 1494.2 736M1478 690L1478 716M1497 706L1497 738M1152 698L1275 698M1152 708L1270 708M1093 714L1130 714L1130 808L1093 808zM1135 713L1169 713L1169 808L1135 808zM1175 711L1209 711L1209 807L1175 807zM1238 707L1272 707L1272 808L1238 808zM1170 712L1170 808M1212 712L1212 808M1234 708L1234 808M1178 776L1240 776M1210 720L1240 715M1431 676L1481 763M1152 784C1174.7 783.7 1170.7 783.7 1220 783C1269.4 782.3 1239 782.7 1300 782C1361.1 781.3 1356.3 782.7 1403.1 781C1449.9 779.3 1417.9 780.3 1440.4 777C1463 773.6 1453.9 775.6 1470.8 770.9C1487.7 766.1 1479.4 768.1 1491.2 762.7C1503.1 757.3 1501.4 757.3 1506.4 754.6M1152 778C1174.6 777.7 1170.6 777.7 1220 777C1269.3 776.3 1239 776.7 1300 776C1360.9 775.3 1356.4 776.7 1402.9 775C1449.4 773.3 1417.5 774.3 1439.6 771C1461.7 767.7 1452.8 769.7 1469.2 765.1C1485.6 760.5 1477.3 762.5 1488.8 757.3C1500.2 752 1498.6 752 1503.6 749.4M1278 782L1472 782L1472 800L1278 805zM1512 743L1524 770L1526 880M1500 743L1506 840L1515 892M925 817L1387 818M1386.6 817C1397.6 818 1398.7 817.3 1419.5 820C1440.3 822.6 1429.4 820.6 1449.2 824.9C1468.9 829.2 1462.3 827.2 1478.7 832.8C1495.1 838.4 1491.8 838.7 1498.4 841.6M940 837L1395 837M940 832L1395 832M1112 839L1133 839L1133 944L1112 944zM1132 839L1150 839L1150 944L1132 944zM1157 839L1195 839L1195 944L1157 944zM1199 839L1237 839L1237 944L1199 944zM1266 839L1304 839L1304 944L1266 944zM1310 839L1348 839L1348 944L1310 944zM1354 839L1391 839L1391 944L1354 944zM1100 838L1114 976M1107 838L1121 976M1147 838L1161 976M1153 838L1167 976M1193 838L1207 976M1199 838L1213 976M1237 838L1251 976M1243 838L1257 976M1252 838L1266 976M1258 838L1272 976M1301 838L1315 976M1307 838L1321 976M1345 838L1359 976M1351 838L1365 976M1392 838L1406 976M1065 946L1068 976M1074 946L1077 976M1083 946L1086 976M1092 946L1095 976M1101 946L1104 976M1110 946L1113 976M1119 946L1122 976M1128 946L1131 976M1137 946L1140 976M1146 946L1149 976M1155 946L1158 976M1164 946L1167 976M1173 946L1176 976M1182 946L1185 976M1191 946L1194 976M1200 946L1203 976M1209 946L1212 976M1218 946L1221 976M1227 946L1230 976M1236 946L1239 976M1245 946L1248 976M1254 946L1257 976M1263 946L1266 976M1272 946L1275 976M1281 946L1284 976M1290 946L1293 976M1299 946L1302 976M1308 946L1311 976M1317 946L1320 976M1326 946L1329 976M1335 946L1338 976M1344 946L1347 976M1353 946L1356 976M1362 946L1365 976M1371 946L1374 976M1380 946L1383 976M1389 946L1392 976M1398 946L1401 976M950 950L952 976M957 950L959 976M964 950L966 976M971 950L973 976M978 950L980 976M985 950L987 976M992 950L994 976M999 950L1001 976M1006 950L1008 976M1013 950L1015 976M1020 950L1022 976M1027 950L1029 976M1034 950L1036 976M1041 950L1043 976M1048 950L1050 976M1055 950L1057 976M1062 950L1064 976M1069 950L1071 976M1076 950L1078 976M1083 950L1085 976M1090 950L1092 976M1097 950L1099 976M945 952L1400 952M945 957L1300 957M945 978L1395 978M1530 878C1532 883.7 1533.3 883.3 1536 895C1538.7 906.7 1539.3 900.3 1538 913C1536.7 925.7 1539.7 922 1532 933C1524.3 944 1529 938 1515 946C1501 954 1515 949 1490 957C1465 965 1470 963 1440 970C1410 977 1413.3 975.3 1400 978M1527.2 879C1529.1 884.6 1530.5 884.4 1533.1 895.7C1535.7 906.9 1536.2 900.8 1535 912.7C1533.8 924.6 1536.7 921 1529.5 931.3C1522.4 941.5 1527 935.8 1513.5 943.4C1500 951 1513.8 946.2 1489.1 954.1C1464.4 962 1469.2 960.1 1439.3 967.1C1409.4 974.1 1412.7 972.4 1399.4 975.1M1524.3 880C1526.3 885.4 1527.6 885.5 1530.2 896.3C1532.7 907.1 1533.1 901.3 1532 912.4C1531 923.4 1533.7 920.1 1527.1 929.6C1520.4 939 1525 933.6 1512 940.8C1499.1 948 1512.6 943.5 1488.2 951.3C1463.7 959.1 1468.4 957.2 1438.6 964.2C1408.9 971.1 1412.1 969.5 1398.8 972.1M1520.6 881.3C1522.5 886.6 1523.8 887 1526.3 897.2C1528.7 907.4 1528.9 901.9 1528.1 912C1527.2 922 1529.8 918.8 1523.8 927.3C1517.8 935.7 1522.3 930.6 1510 937.3C1497.8 944 1511.1 939.8 1487 947.5C1462.8 955.1 1467.4 953.4 1437.7 960.3C1408.1 967.2 1411.3 965.5 1398 968.2M1415 913C1415.3 907 1413.7 906 1416 895C1418.3 884 1414 891 1422 880C1430 869 1428.3 872.7 1440 862C1451.7 851.3 1443 854.7 1457 848C1471 841.3 1473.7 844 1482 842M1418 913.2C1418.3 907.3 1416.8 906.1 1418.9 895.6C1421.1 885.2 1416.7 892.2 1424.4 881.8C1432.1 871.3 1430.7 874.6 1442 864.2C1453.3 853.9 1444.7 857.1 1458.3 850.7C1471.8 844.3 1474.6 846.8 1482.7 844.9M1440 913L1497 888M1442 918L1499 893M1415 913L1440 913M1420 930C1433.3 928.7 1436.7 931 1460 926C1483.3 921 1473.3 923.7 1490 915C1506.7 906.3 1500 910 1510 900C1520 890 1516.7 890 1520 885M1420.3 933C1433.7 931.6 1436.9 934 1460.6 928.9C1484.3 923.8 1474.2 926.6 1491.4 917.7C1508.5 908.7 1501.8 912.5 1512.1 902.1C1522.5 891.8 1519 891.8 1522.5 886.7M1420.6 936C1434.2 934.6 1437.2 937.1 1461.3 931.9C1485.3 926.7 1475.1 929.5 1492.8 920.3C1510.4 911.1 1503.5 914.9 1514.2 904.2C1525 893.6 1521.4 893.6 1525 888.3M1420.9 939C1434.6 937.6 1437.5 940.1 1461.9 934.8C1486.3 929.5 1476 932.5 1494.2 923C1512.3 913.5 1505.3 917.4 1516.4 906.4C1527.5 895.4 1523.8 895.4 1527.5 890M1400 878L1500 878M1400 873L1495 873M1408 845L1408 915M1402 845L1402 915M1473 872L1487 925M1479 870L1495 922M1472 872a4 4 0 1 0 8 0a4 4 0 1 0 -8 0M1355 808L1355 838M1398 800L1398 980M1300 808C1326.7 808.3 1336.7 805.7 1380 809C1423.3 812.3 1400 810.3 1430 818C1460 825.7 1451 824.7 1470 832C1489 839.3 1481.3 837.3 1487 840M1300 811C1326.6 811.3 1336.7 808.7 1379.8 812C1422.9 815.3 1399.5 813.3 1429.3 820.9C1459 828.5 1450.1 827.5 1468.9 834.8C1487.7 842.1 1480.1 840.1 1485.7 842.7M1390 800C1406.7 800 1415 801.7 1440 800C1465 798.3 1454.3 800 1465 795C1475.7 790 1469.7 788.3 1472 785M1390 803C1406.7 803 1414.8 804.8 1440.2 803C1465.6 801.2 1454.9 803.1 1466.3 797.7C1477.7 792.3 1471.7 790.4 1474.5 786.7M1390 806C1406.8 806 1414.6 807.8 1440.4 806C1466.2 804.1 1455.4 806.3 1467.5 800.4C1479.7 794.6 1473.8 792.4 1476.9 788.4M899 884L903 880L925 880L928 884L928 923L924 927L903 927L899 922zM896 883.7L902.5 877L925.5 877L931 883.8L931 923.3L924.5 930L902.4 929.9L896 922.3zM920 838L920 878M925 838L925 878M928 927L928 980M933 800L930 980M940 940L940 982" fill="none" stroke="#000" stroke-width="1"/>
<path d="M953 613L990 613M953 620L990 620M957 625L1117 625M1000 667L1118 667M984 640L976 830M996 833.7L992.2 918.8M978.7 800.1L985.5 855.1M1003.2 745.1L995 832.1M1074.7 805.4L1073.4 866.5M985.9 888.5L985.4 976.2M991.9 734.6L980.1 795.3M1012.9 804.3L1015.7 892.6M1081.5 860.4L1086 956.7M1031.3 794.5L1041.2 897.1M1007.9 873.5L1006.2 966.1M953.6 818.9L964.4 889.6M1080.6 836.1L1069.1 881.5M999.6 894.3L1003.4 976.1M1079 770L1070.5 841.2M1160 702L1265 702M1178 780L1240 780M1280 674L1415 675L1465 765L1290 776L1266 701zM1296 690L1306 776M1296 690L1420 690M1380 676L1386 776M1352 690L1356 776M1483 743L1512 743L1530 760L1530 878L1523 895L1503 890L1487 838zM1387 813C1398 814 1399 813.3 1420 816C1441 818.7 1430 816.7 1450 821C1470 825.3 1463.3 823.3 1480 829C1496.7 834.7 1493.3 835 1500 838M1103 838L1117 976M1150 838L1164 976M1196 838L1210 976M1240 838L1254 976M1255 838L1269 976M1304 838L1318 976M1348 838L1362 976M945 947L1400 947M945 973L1400 973" fill="none" stroke="#000" stroke-width="1.8"/>
<path d="M1152 667.5L1300 666L1387 665M1152 670L1387 668M1386.8 668C1396.1 669 1398.1 668.7 1414.7 671C1431.3 673.3 1420 671 1436.5 674.9C1453.1 678.9 1447.9 677 1464.3 682.9C1480.8 688.8 1475.2 685.9 1485.9 692.7C1496.6 699.4 1490.6 695.1 1496.4 703.2C1502.1 711.2 1499.3 707.6 1503.2 716.8C1507.1 725.9 1505.1 721 1508.1 730.6C1511.1 740.2 1510.7 740.5 1512.1 745.5M1152 781C1174.7 780.7 1170.7 780.7 1220 780C1269.3 779.3 1239 779.7 1300 779C1361 778.3 1356.3 779.7 1403 778C1449.7 776.3 1417.7 777.3 1440 774C1462.3 770.7 1453.3 772.7 1470 768C1486.7 763.3 1478.3 765.3 1490 760C1501.7 754.7 1500 754.7 1505 752M925 813L1240 812L1387 813" fill="none" stroke="#000" stroke-width="3"/>
<path d="M965.8 882.7L964.6 897.1M1015 960.2L1008.8 967M994.7 949L999.1 949L999.1 958.4L994.7 958.4zM984.5 783.1L994.5 783.1L994.5 791.8L984.5 791.8zM961 891.2L977.4 909.1M1036.7 869.8L1041.7 869.8L1041.7 879.6L1036.7 879.6zM990.2 895.4L990.6 917.7M1003.6 852.9L1002 871.8M1039.1 980.2a4.7 4.7 0 1 0 9.4 0a4.7 4.7 0 1 0 -9.4 0M1010.8 790.3L1004.5 811.7M972.5 790.1L969.9 795.5M987.1 810.5L995.6 810.5L995.6 818.8L987.1 818.8zM971.4 893.1L994.6 903.8M1053.9 843.2L1069.7 841.9M1058.2 836.4L1058.5 841.4M966.5 965.7L983.2 981.6M1032.7 917.2L1057.4 917.9M986.2 925.5a3.5 3.5 0 1 0 7 0a3.5 3.5 0 1 0 -7 0M975.7 933.6L980.4 944.9M951.9 898.5L952 917.4M1024.8 929.1L1031.1 929.1L1031.1 936.5L1024.8 936.5zM967.5 901.6L978.4 901.3M1002.3 833.6L1019 847.8M1021.8 806.5L1026.5 806.5L1026.5 812.6L1021.8 812.6zM1023.7 800.6L1033.9 800.6L1033.9 810.3L1023.7 810.3zM945.2 929.9L949.2 929.9L949.2 936.6L945.2 936.6zM957.2 938.3L961.3 947.6M1016.7 936.2L1016.4 949.5M1045.1 867.6L1040.8 880.1M1040.8 811.6L1063.1 811.5M1009.2 888.9L990.4 896.9M1019.3 873.1L1019.1 896.6M1041.5 976L1046.5 976.3M1021.6 965.1L1024.6 968.2M956.8 840.6L968 840.6L968 844.4L956.8 844.4zM940.9 972.8L960.9 979.9M949.4 888.7L970.7 887.3M1029.1 946.4L1045.6 946.3M1028.8 823.9L1033.3 836.4M1033.6 780.4L1041 780.4L1041 783.6L1033.6 783.6zM1029.2 880.1L1021.8 888.1M1016.5 885.6L1017.8 911.3M951.2 780.7L957.6 780.7L957.6 787.9L951.2 787.9zM1027.6 856.6L1041.1 857M998 922L1003 922L1003 926.9L998 926.9zM1009.7 930.6L1010.1 953.9M981.8 951.8L983.3 970.9M1019.3 947.9L1036.5 955.4M1006.6 800.8L1013.1 800.8L1013.1 807.5L1006.6 807.5zM1005 911.7L1008.4 914.6M946.9 950.5a3.5 3.5 0 1 0 7 0a3.5 3.5 0 1 0 -7 0M946.3 981.2L956 981.2L956 990.8L946.3 990.8zM941.6 842.9L943.9 848.1M1023.1 869.9L1011 873.6M985.4 850.8L996.7 850.8L996.7 859.7L985.4 859.7zM1055.1 854.9L1060.6 872.9M989 910.4L1003.9 909.3M1020.7 972a3 3 0 1 0 6 0a3 3 0 1 0 -6 0M1010 835.7L1008.8 851.5M1017.2 952.8a3.1 3.1 0 1 0 6.2 0a3.1 3.1 0 1 0 -6.2 0M937.9 876.9L945.3 876.9L945.3 885.9L937.9 885.9zM994.9 918.6L981.4 923.2M1041.5 890.8L1037.2 894.3M1034.5 958.1L1043.9 958.1L1043.9 965.9L1034.5 965.9zM1056.8 952.5L1065.4 952.5L1065.4 960.2L1056.8 960.2zM934.2 968.2L945.1 969M1027.6 797.4L1034.7 797.4L1034.7 805.5L1027.6 805.5zM977.8 785.9L986 785.9L986 795.6L977.8 795.6zM981.8 889.7L987.5 890.2M989.6 874.2L991.7 898.9M1033.4 923.6L1032.8 942.3M1038.8 801.6L1046.2 801.6L1046.2 807.1L1038.8 807.1zM1023.5 908.4L1028.9 925.8M955.1 851.9L952.9 857.9M1054.9 902.7L1049 917.8M993.1 843.1L1001.1 843.1L1001.1 850.1L993.1 850.1zM984.8 800.2L992.3 800.2L992.3 804.9L984.8 804.9zM1033.3 844.6L1032 858.4M935.3 881.2L952.3 880M1002.6 964.1L1010.7 963.5M1037.3 941.2L1021.5 948.4M1030.5 890a5.9 5.9 0 1 0 11.8 0a5.9 5.9 0 1 0 -11.8 0M934.9 937.4L942.8 947M1004.1 906L1013.9 910M999.5 900.5L993.5 902.5M966.1 811.1L963.3 818.9M934.4 881.1a5.3 5.3 0 1 0 10.6 0a5.3 5.3 0 1 0 -10.6 0M951.8 874.3L956.9 874.4M960.9 795.7a3.7 3.7 0 1 0 7.4 0a3.7 3.7 0 1 0 -7.4 0M1023.1 796.3L1035 796.3L1035 806.2L1023.1 806.2zM960.9 782.5L961.2 803.1M939.1 787.9L958.6 789.3M995.1 793.7L1002.2 793.7L1002.2 801.6L995.1 801.6zM984.6 871.7L996.7 872.3M998.4 900.5a3.8 3.8 0 1 0 7.7 0a3.8 3.8 0 1 0 -7.7 0M1039.8 888.1L1047.5 887.6M956.4 785.6L966.9 785.6L966.9 791.4L956.4 791.4zM981.2 783.9L969.6 789.4M938.4 975L944.4 975L944.4 978.8L938.4 978.8zM1062.7 895.2L1039.1 905M1038.5 970.6L1031.9 977.9M1014.9 849.6L1023.5 849.6L1023.5 853.4L1014.9 853.4zM1019 783.2L1024 784.5M1054.3 815.2L1044.4 825.8M1016.6 851.2L1020.6 863.2M953 861.6L963.8 865.3M1058.9 813.6L1046.9 817M975.7 812.3L985.6 822M970.8 942.5L986.8 949.2M973.9 879.1L994.4 877.7M947.9 915.3L945.5 924.2M1004.7 957.6L1028.4 957.3M966.7 855.4L988 854.1M978 842.9L981.4 842.9L981.4 847L978 847zM1016.9 898.3L1027.5 898.3L1027.5 904.9L1016.9 904.9zM999.1 963.3L1003.7 963.3L1003.7 966.8L999.1 966.8zM1036.7 802.5L1042.9 803M959.1 794.6L975.7 809.4M1024.5 930.6L1008.5 937M949.1 948.7L952.2 948.7L952.2 953.8L949.1 953.8zM1016.6 846.2L1016.6 851.8M1028.4 865.4L1038.9 865.4L1038.9 868.9L1028.4 868.9zM964.8 864.9L965.2 872.5M1038.8 952.8L1015.6 960.6M986.3 964.4L990 978.6M986.7 981.5L990.5 981.5L990.5 989.5L986.7 989.5zM972.4 884.9L979.8 884.9L979.8 888.2L972.4 888.2zM993.9 812.9L995 826.6M998.6 815.1L984.1 828M1060 950.3L1058.8 963.7M990.9 981.7a4.3 4.3 0 1 0 8.6 0a4.3 4.3 0 1 0 -8.6 0M1048.3 930.8L1047 955.3M936.8 907.1L941.6 907.1L941.6 915.5L936.8 915.5zM994.1 977.8L997.3 977.8L997.3 983.8L994.1 983.8zM972.6 790.4a5.4 5.4 0 1 0 10.7 0a5.4 5.4 0 1 0 -10.7 0M997.7 919.3L999 932.7M1019.4 961.1L1022.1 967.5M1035.3 882.8L1038.4 882.8L1038.4 890.3L1035.3 890.3zM1056.2 955.8L1041.6 970.3M1059.1 884.1L1068.3 884.1L1068.3 894L1059.1 894zM1001.1 862.4a3.4 3.4 0 1 0 6.8 0a3.4 3.4 0 1 0 -6.8 0M995.8 896.6L1008.8 896.6M1038 963.1L1042.2 973.2M954.5 803.9L945 806.7M954.2 778.7L935 794.9M947.4 965.6L972.1 966.4M935.8 822.8L946.7 823.8M970.6 794.7L971 818.5M1066.1 925.5L1046.9 932.4M1002.5 944L1027.8 946.4M989.8 978.8L994.9 978.8L994.9 988.5L989.8 988.5zM946.2 962.6L960.5 963.2M936.1 859.1L946.5 859.1L946.5 868.3L936.1 868.3zM931.1 971.1L951.3 977.1M958.1 785.3L964.3 785.3L964.3 794.7L958.1 794.7zM944.8 818.8L951 818.8L951 828.4L944.8 828.4zM996.5 912L996.7 932.2M1037.8 863.8L1049.1 874.9M1003.2 943L1002.6 953.5M1029.9 840.7L1038.4 840.7L1038.4 844.1L1029.9 844.1zM1008 805.5L1018.1 826.3M1056.3 916.6L1065.6 920.4M1007 840.6L1010.6 851.1M982.9 833.8L982 854.7M976.1 919.5a2.6 2.6 0 1 0 5.2 0a2.6 2.6 0 1 0 -5.2 0M998.8 923.2L998.4 932.6M969 794.6L968.8 817.9M999.3 863.2L1004.9 875.1M1013 832.6L1012.1 845M978.5 822.2L984.7 824.5M976.9 893.5L992 892.9M982.3 911.6L988.7 911.6L988.7 919L982.3 919zM952.7 796.5L962.3 796.5L962.3 801.7L952.7 801.7zM1003 850.2L979.9 856.8M1016.9 804.4a4.8 4.8 0 1 0 9.5 0a4.8 4.8 0 1 0 -9.5 0M939.1 815.2L960.7 814.9M1001.5 974.5L993 983.7M991.5 902.1L988.4 911.9M1019.4 957.4L1040 957.2M943.4 781.9L952.3 781.9L952.3 789.4L943.4 789.4zM1047 825.7L1055.7 825.7L1055.7 828.8L1047 828.8zM1052.7 882L1054.9 889.6M1030.2 956.8L1049.1 974.1M1001.8 812.4L1002.4 829.3M982 872.7L980.6 896.6M1017.3 820.6L1040.1 821.7M997.7 952.5L1008.9 952.5L1008.9 958.2L997.7 958.2zM957.2 817.8L966.6 817.5M1021.5 927.3L1026.7 927.3L1026.7 932.1L1021.5 932.1zM1023.2 848.7L1027.7 848.7L1027.7 855.1L1023.2 855.1zM961.6 939.8L961.5 947.7M982.9 884.1L987.2 893.9M938.5 888.3a6.5 6.5 0 1 0 13 0a6.5 6.5 0 1 0 -13 0M1016.9 822.3L1027.3 827.4M996.4 816.1L1002.2 816.1L1002.2 821.5L996.4 821.5zM957.6 829.4L949.6 851M998.4 894.8L996.7 900.6M1008.5 833.9L1001.9 848.4M1041.8 924.5L1040.6 937.7M1032.1 860.7L1032 870.1M1002.7 858L1010.2 857.7M1001 884.4L992.4 894.2M951.4 788.5L945.8 793.7M938.6 890.5L961.6 892.5M982.4 793.3a3.1 3.1 0 1 0 6.1 0a3.1 3.1 0 1 0 -6.1 0M949 855L957.1 855L957.1 861.6L949 861.6zM961 815L959.7 835.1M940.5 922.5L954.5 921.7M969.1 934.7L983.9 933.3M957.5 956.7L946.3 966.8M989.1 937.5L989.5 947.5M951.6 783.2L957.5 789.5M999.1 972.5L1007.1 972.5L1007.1 980.8L999.1 980.8zM1052 820.9L1058.8 820.9L1058.8 826L1052 826zM949.8 848L953.5 848L953.5 855.8L949.8 855.8zM949.6 915.2L944.6 926.8M1061.2 903.5L1070.4 903.5L1070.4 909.4L1061.2 909.4zM935.9 848L946.1 848L946.1 853.7L935.9 853.7zM1040.7 861.7L1033.9 878.1M965 781.2L970.9 781.2L970.9 788.2L965 788.2zM1003.7 894.2L1004.8 907.1M953.4 868.7L973.3 874.8M1010.7 925.3L1027.5 931.8M945.8 868.1L969.3 874.5M1014.2 868.6L1021.9 868.6L1021.9 873.7L1014.2 873.7zM944.3 793.8L947.5 793.8L947.5 801.1L944.3 801.1zM944.3 881L940.5 884.3M968.9 875.5a4.8 4.8 0 1 0 9.6 0a4.8 4.8 0 1 0 -9.6 0M986.5 911.2L996.2 911.2L996.2 918L986.5 918zM1026.4 882.7a6.3 6.3 0 1 0 12.5 0a6.3 6.3 0 1 0 -12.5 0M1000.3 868L999.4 892.4M1021.1 889.2L1029.4 897.3M972.2 877.2a3.8 3.8 0 1 0 7.6 0a3.8 3.8 0 1 0 -7.6 0M1014.6 927.3L1020.6 933.2M939.7 822.6L945.2 834.2M969.2 909.9L981.9 914.4M997.3 856.5L1019.3 855.9M1049.8 859.1L1058.3 859.1L1058.3 866.6L1049.8 866.6zM1023 796.6L1031.8 805.3M990 820.4L993.2 820.4L993.2 827.4L990 827.4zM1018.3 974.1L1025.3 974.8M1044.4 793.5L1054 815.8M941.8 866L960.9 864.6M998.2 906.5L1009.8 906.5L1009.8 911.7L998.2 911.7zM983.7 972.9L984.2 981.4M1042.9 944.3L1044.2 968M973.5 823.6L982.3 823.6L982.3 832.3L973.5 832.3zM962.5 809.4a3 3 0 1 0 6 0a3 3 0 1 0 -6 0M954.7 975.6L961.5 975.6L961.5 979L954.7 979zM1050.4 825.9L1049.4 841.4M949.1 851.5L972.8 849.6M974.8 902.8L982.8 921.6M948 815a2.6 2.6 0 1 0 5.1 0a2.6 2.6 0 1 0 -5.1 0M975.2 889.7L982.2 889.7L982.2 897.7L975.2 897.7zM1057.9 814.3L1065.6 813.7M989.1 855.3L1002.7 859.2M1015.7 925.3L1031.3 930.3M936.3 795L947.1 795L947.1 799.2L936.3 799.2zM1036 832.6L1042 832.6L1042 835.7L1036 835.7zM1002.3 979.6L1022.8 977.9M1038 932.8L1021 948.6M945.2 960L949 960L949 965.3L945.2 965.3zM1041.4 784.1L1031.7 795.9M955.4 922.4a6.8 6.8 0 1 0 13.5 0a6.8 6.8 0 1 0 -13.5 0M1046.1 917.9L1042.3 925.8M955.9 946.5L946.7 955.6M1013.7 964.7L1018.2 964.7L1018.2 974L1013.7 974zM986.9 858.7a3.7 3.7 0 1 0 7.4 0a3.7 3.7 0 1 0 -7.4 0M1029.3 802.5L1031.5 826.8M1010.5 861.7L1016.6 861.7L1016.6 868.9L1010.5 868.9zM984.2 964L978.4 978.6M960 957.1L973.9 962.2M958.5 929.1L960.2 948.2M1034.4 859.9L1042.5 859.9L1042.5 867L1034.4 867zM935.2 811.3L934.9 820.5M950.1 854.3L957 854.3L957 860.7L950.1 860.7zM940.9 935.6L940.4 943.5M1006.7 842.8L1010 842.8L1010 851.9L1006.7 851.9zM944.4 946L955.1 946L955.1 953.1L944.4 953.1zM966 921.6L964.5 925.5M1019.4 840L1023 848.8M1029.6 897.1L1048.3 896.9M984.2 860.5L1003.5 862.3M1058.8 831.8L1058.9 836M1024.7 862.5L1048 862M1022.2 950.7L1033.4 950.7L1033.4 956.1L1022.2 956.1zM987.7 778.2L987.2 790.1M1030.1 944.6L1036.3 944.6L1036.3 952.8L1030.1 952.8zM965.6 803.5L966.6 820M1055.3 952.1L1059.1 965.3M1031.5 851.5L1029.3 872.1M961.9 902.6L960.5 921.1M1041.5 830.5L1029.8 834.3M985.3 909.9a5 5 0 1 0 10 0a5 5 0 1 0 -10 0M1036.8 915.9L1035.8 937.9M958.9 925.5a3.2 3.2 0 1 0 6.5 0a3.2 3.2 0 1 0 -6.5 0M1057.1 800.4L1042 807.3M1007.4 896L1029.5 898.1M1047.5 843a6.7 6.7 0 1 0 13.3 0a6.7 6.7 0 1 0 -13.3 0M1037.2 875.5L1047.9 875.5L1047.9 883.9L1037.2 883.9zM1030.7 788.6L1032.4 805M937.1 865L948 865.3M980.1 961.2L989.3 961.2L989.3 967.3L980.1 967.3zM1019.4 832.9L1036.3 834.2M1027.6 935.3L1035 958.2M941.2 795.2L951.4 795.2L951.4 799.6L941.2 799.6zM956.5 934.7L960.4 934.7L960.4 940L956.5 940zM983.5 962.1L993 962.1L993 969.8L983.5 969.8zM1036.8 817.5L1048.5 816.5M998.1 803.7L998.9 818.3M1020.7 947.5L1020.1 969.6M946.3 808.3L941.2 821.2M956.9 801.3L973.1 802.4M1020.2 888.6L1026.9 896.6M993.5 821.3L1004.1 834.2M1045.1 824.7L1051.6 826.7M1043.2 937.3L1052.8 945.3M1004.1 955.1L1015.8 955.1L1015.8 959.7L1004.1 959.7zM1032.8 945.2a6.2 6.2 0 1 0 12.3 0a6.2 6.2 0 1 0 -12.3 0M948.1 956.4L949.6 960.6M934.4 816.8L944.5 815.8M1057.8 907.5a2.8 2.8 0 1 0 5.6 0a2.8 2.8 0 1 0 -5.6 0M998.7 821.2a5.7 5.7 0 1 0 11.5 0a5.7 5.7 0 1 0 -11.5 0M978.8 858.5L987.5 858.9M1045.2 858.3L1069.9 858.9M1030 907.9L1031.2 927.8M1056.2 908.1L1065.5 908.1L1065.5 915.5L1056.2 915.5zM1047.2 780.5L1061.2 780.5M995.3 940.1L980 945.9M1001.8 928.6L1003.7 950.6M971.7 797.9L978.4 804.9M947.3 826.7L951.3 826.7L951.3 832.3L947.3 832.3zM996.8 912L999.1 935.2M1021.2 838.9L1028.5 838.9L1028.5 845.6L1021.2 845.6zM1012.8 855.8L1024.4 855.8L1024.4 861.7L1012.8 861.7zM948.3 815.9L956.5 815.9L956.5 825.3L948.3 825.3zM1045.4 965.5a5.2 5.2 0 1 0 10.4 0a5.2 5.2 0 1 0 -10.4 0M1018.8 897.1L1016.1 900.1M1025.8 961.6L1031.7 961.6L1031.7 967.9L1025.8 967.9zM992.3 856.4L999.2 864.5M1044 803L1054 812.1M939.4 955a4.2 4.2 0 1 0 8.5 0a4.2 4.2 0 1 0 -8.5 0M997.8 863.7L1012.3 863.2M965.1 802.7L966.8 827.6M1005.8 961.6L1010.8 961.6L1010.8 970.7L1005.8 970.7zM951.6 892L955.2 892L955.2 895.8L951.6 895.8zM944.3 956.3L948.8 956.3L948.8 963.7L944.3 963.7zM1040.6 895.6L1049.3 895.6L1049.3 900.9L1040.6 900.9zM1052.9 827.8L1063 827.8L1063 837.3L1052.9 837.3zM940.9 866.4L941.2 877.1M991 981.6L1000.2 981.6L1000.2 988.7L991 988.7zM996.7 884.8L995.9 904M1028.5 876.2L1047.4 876.2M947.4 847.2a6.5 6.5 0 1 0 13 0a6.5 6.5 0 1 0 -13 0M952.3 869.1L963.2 870.2M1015.7 882.1L1005.5 886.3M941.8 856.6L948.7 871.6M1038.9 884.1a3.4 3.4 0 1 0 6.9 0a3.4 3.4 0 1 0 -6.9 0M1029.7 796.2L1043 795.1M1050.3 925.9a5.1 5.1 0 1 0 10.2 0a5.1 5.1 0 1 0 -10.2 0M1022.8 780.4L1025.1 802.6M970.9 972.2L974.6 972.2L974.6 976.1L970.9 976.1zM957.3 954.2L967.4 962.4M997.5 875.5a3.7 3.7 0 1 0 7.5 0a3.7 3.7 0 1 0 -7.5 0M970.2 826.3L953.8 831.1M1009.7 908.5L1024.6 909.3M954 848.3L958.5 848.1M990.8 855.7L1002.4 855.7L1002.4 859.4L990.8 859.4zM991.5 839.4L998.3 839.4L998.3 848.7L991.5 848.7zM1047.2 911.1L1061.6 912.3M936.7 780.8L949.3 785.4M1037.7 854.5L1042.2 865.8M1009.9 949L1020.3 949L1020.3 954.4L1009.9 954.4zM955 835.6L963.9 839.4M1021.4 781.3L1027.4 781.5M964.4 978.4L983.7 976.9M946.6 948.2L951.7 965.5M1010.7 905.1L1000.4 928M1050 909.2L1049.8 921M1033.3 914.9L1052.3 922.5M985.3 828.8L976.8 847.1M988.3 949L973.3 966.8M988.9 923.6L992.9 934.8M980.6 931L991.3 931L991.3 936.6L980.6 936.6zM1004.3 898.1L1000.3 899.3M1042.5 816.2L1045.9 826.4M982.7 895.7L982.9 907.6M1017.3 876.2L1014.9 884M1052.4 805.8L1062.2 806.7M961.9 934.2L983.6 943.8M976 874.5a7 7 0 1 0 14 0a7 7 0 1 0 -14 0M1039.9 957.1L1019.1 964.9M1010.4 922.4L1030 923.7M1047.9 866.6L1054.5 866.8M1015.1 844.1L1014.5 860.4M1017.1 955.5L1033.3 955.4M1001.1 869.4L1005.2 869.7M974.8 904.4L979.6 909.5M1008.9 948.7L1015.9 951.1M1003.7 847.8L1010.6 862.7M961.2 928.7L971.1 928.7L971.1 937.8L961.2 937.8zM1027 882.6L1036.2 882.6L1036.2 889.5L1027 889.5zM995.8 859.8L999.3 868.4M1043.2 949.3L1062.4 965.3M961.4 822.6L958.8 825.6M1027.4 788.7L1033.8 788.5M994.1 828.3L994 840M995.1 871.7L986 895.2M965.4 930.5a2.4 2.4 0 1 0 4.7 0a2.4 2.4 0 1 0 -4.7 0M993 962.7L1015.4 960.9M967.7 896.6L967.6 902.7M1047.1 874.2L1025.9 880.6M971.6 947.1L983.1 947.1L983.1 952.6L971.6 952.6zM1011.3 863L1017.7 877.2M1050.7 955.7L1052.1 968.6M1037.3 898.5L1044.8 906.8M1040.1 943.3L1049.3 943.3L1049.3 950.6L1040.1 950.6zM934.1 847.4a6.7 6.7 0 1 0 13.3 0a6.7 6.7 0 1 0 -13.3 0M971.9 875.2a5.8 5.8 0 1 0 11.6 0a5.8 5.8 0 1 0 -11.6 0M1042 788L1050.7 788L1050.7 791.7L1042 791.7zM990 778.6L978 792.1M1014.9 949.5a4.6 4.6 0 1 0 9.2 0a4.6 4.6 0 1 0 -9.2 0M1022.2 978.5L1010.2 983.1M947.3 892.9L951.1 892.9L951.1 902.3L947.3 902.3zM1062.5 802.4L1052.2 813.9M972.2 876.9L966.2 898M1040.7 784.3L1048.3 784.3L1048.3 790.6L1040.7 790.6zM964.2 868.5L956.1 875.2M997.5 886.7L1001.3 886.7L1001.3 890.2L997.5 890.2zM1056.9 882.1L1065.5 882.1L1065.5 886.4L1056.9 886.4zM1042.8 814.1L1049.1 814.1L1049.1 817.5L1042.8 817.5zM937.6 954.8L942.8 967.7M1035 841.3L1044 841.3L1044 847.1L1035 847.1zM1032.8 796.6a5.1 5.1 0 1 0 10.2 0a5.1 5.1 0 1 0 -10.2 0M947.3 868.7L948.8 874.8M946.1 815L933.9 826.7M1029.3 909.7L1028.6 929.4M1028.7 814.4L1036.6 816.7M982.7 922.3L995.8 927.1M1045.1 966.7L1042.8 991M957.5 898.2a3.2 3.2 0 1 0 6.3 0a3.2 3.2 0 1 0 -6.3 0M964.7 835.1L978.7 841.3M1039.2 861.5L1057.8 869.1M991.3 817.1L980.1 820.7M946 936.2L941 940.4M1030 798L1038.5 819.1M1015.4 840L1017.2 844.1M942.7 944.9L939.2 955.8M1052.4 882.2a2.9 2.9 0 1 0 5.7 0a2.9 2.9 0 1 0 -5.7 0M1000.6 918L996.1 929.2M990.5 911L996.9 911L996.9 919L990.5 919zM1026.8 840L1033.9 842.9M1028.5 922.2L1040.2 922.2L1040.2 932L1028.5 932zM959.1 839.1L967.2 838.8M970.6 903.3L971.3 910.9M1042.3 922.4L1044.1 926.8M1038.6 899.2L1041.9 899.2L1041.9 905.1L1038.6 905.1zM1045.4 895.3L1040.1 907M950 804.5L956.5 804.5L956.5 812.5L950 812.5zM969.7 809.3L965.1 811M972 880.6L983.5 880.6L983.5 885.1L972 885.1zM934.5 965.6L956.1 971.1M971.9 911.8L977.1 911.8L977.1 918.3L971.9 918.3zM945.1 937.2L940 947.8M1000.2 928.7L986.8 932.6M964.7 981.6L968.3 981.6L968.3 986.9L964.7 986.9zM947.9 804.1L946.9 816.4M961.7 888.4L959.8 908.2M948.8 913.5L953.9 913.5L953.9 919.6L948.8 919.6zM1032 888.1L1042.2 888.1L1042.2 896L1032 896zM979.2 916.8L985.7 917M997.8 937.6L1006.9 937.6L1006.9 945.3L997.8 945.3zM1038.1 912.9L1032 926M959.3 818.3L958.3 844M1013.7 930.6L1006 952.6M1035.4 860.9L1045.9 871.8M1056 940L1058 962.8M995.4 807.1L979.2 820.6M988.6 852.1L992.8 855.5M1021.3 857.1L1028.8 857.2M950.4 928L950 950.8M1021 957.8L1032.3 957.8L1032.3 962.6L1021 962.6zM961.3 802.7L968.3 827.4M1038.1 970.7L1047.8 970.7L1047.8 978.7L1038.1 978.7zM963.7 975.3L941 983.8M1016.4 803.6L1020.5 803.6L1020.5 808.1L1016.4 808.1zM947.4 957.8L953 959.8M928.7 794.7L951.8 794.3M1045.3 931.5L1053.7 931.5L1053.7 936.9L1045.3 936.9zM1002.6 846.3L1005.7 846.3L1005.7 852.3L1002.6 852.3zM987 798.9L996 806.6M1042.6 954.9L1052.6 954.9L1052.6 959.9L1042.6 959.9zM1034 913.5L1034.1 919.4M991.6 794.3L992.2 803.9M1022.3 863.3L1036.3 862.7M1015.9 886.7L1016.7 902.7M995.9 850.6L1006.1 850.3M957.9 969.7L959.6 986.7M940.2 914.5L943.6 914.5L943.6 919.4L940.2 919.4zM1029.4 974.1L1023.9 980.6M994.7 810L994.7 825.2M942.9 870L964.7 875.8M1046.4 949.5L1032.6 965.7M1006.9 854.4L1005.3 871.5M1010.9 827L1017.1 827L1017.1 834L1010.9 834zM1039 841.2L1045.2 841.2L1045.2 849.7L1039 849.7zM1024 901.2L1035.1 901.2L1035.1 907.8L1024 907.8zM1030.5 827.1L1026 844.7M1017.1 779.6L1011 792.5M985.2 868.3L993 868.3L993 873.7L985.2 873.7zM941.5 934.1L943.2 954.9M1025.3 965.2a4.6 4.6 0 1 0 9.3 0a4.6 4.6 0 1 0 -9.3 0M958.3 853.5L978.3 852.4M1034.7 813L1043.4 813.1M955.8 827.9L967.1 827.9L967.1 832.9L955.8 832.9zM943.1 894.2L949.3 894.2L949.3 897.6L943.1 897.6zM933.8 780.9L936.3 806.1M946.6 979.3L961.5 979M1005.8 798.7L1015.3 798.7L1015.3 804L1005.8 804zM1060.2 904.8L1052.2 908M965.1 710.3L973 710.3L973 715.3L965.1 715.3zM1029.2 705.9L1033.1 705.9L1033.1 710.4L1029.2 710.4zM1018.7 782.9a5.1 5.1 0 1 0 10.3 0a5.1 5.1 0 1 0 -10.3 0M1006.3 775.2L1008.1 795.7M997.7 707.2L978.3 728.4M1015.3 783.2L1034.9 784.9M1012.4 746.3L1021.7 755.3M956.3 726.7L973.3 725.2M989.1 764.8L995.8 764.8L995.8 769.2L989.1 769.2zM998.6 717.6L998.9 737.7M955.6 732.1L968.2 732.6M1015 712.4L1021.6 712.1M952 796.4L957.6 796.4L957.6 806.2L952 806.2zM1009.7 737.3L1012.1 744.8M1020.6 714.7L1021.4 743.7M933.2 704.8L958.4 704.1M993.6 743.9L997.1 743.9L997.1 748.1L993.6 748.1zM1000.4 715a2.2 2.2 0 1 0 4.4 0a2.2 2.2 0 1 0 -4.4 0M1016 729.3L1022.9 729.3L1022.9 735.7L1016 735.7zM969 732.6L958.2 756.1M947.8 713.2L947.6 737.7M967.4 717.6L967 747.4M1021.6 765.4L1026.5 765.4L1026.5 774.5L1021.6 774.5zM1021.1 783.8L1021.8 801.1M965.2 742a6.6 6.6 0 1 0 13.2 0a6.6 6.6 0 1 0 -13.2 0M1026.3 707.4L1037.4 707.4L1037.4 711.3L1026.3 711.3zM1016.1 765.8L1038.5 767.6M982.9 738.4L987.4 742.4M933.9 787.9L958.3 787.4M963.2 695.1L964.6 715.6M989.1 777.1L996.5 779.7M954.7 751.4L954.5 760.7M1010.2 752.3L1021.9 752.3L1021.9 758.5L1010.2 758.5zM955.9 791.8L969 803.5M951 704.4L955.2 718.5M980.4 771.1L986.1 771.1L986.1 780L980.4 780zM976 780L985.9 779.7M972.9 772.1L972.6 799.8M933.5 727.9L957.5 734.5M985 746.6L994.5 757.6M1032.3 749.2L1025.3 776.1M1017.2 765.8L1027.4 790.6M987 744.7L1007.3 743.7M973.9 743.3L985 743.3L985 748.9L973.9 748.9zM992.9 731.3L995 738.8M1021.9 733L1025 733L1025 742.6L1021.9 742.6zM1005.5 780.8L1025.5 779.4M985 794.4L1002.5 793.2M968.2 765.2L959.6 792.1M1002.7 786.8L989.1 792.6M996.6 747.9L984.7 758M1010.3 724L1018.7 732.7M984 756.1L991.6 756.1L991.6 762.3L984 762.3zM1027 763.1L1032.4 763.1L1032.4 767.6L1027 767.6zM1017.2 789.3a6.7 6.7 0 1 0 13.5 0a6.7 6.7 0 1 0 -13.5 0M963.1 768.3L954.7 789.8M946.6 724.5L952 724.5L952 733.7L946.6 733.7zM1004.2 750.1L995.2 771.9M1026 787.8L1036.9 787.8L1036.9 791.9L1026 791.9zM980 721.5L990.9 721.5L990.9 726.3L980 726.3zM972.7 763L983.9 773.4M947.4 787.7L951.4 787.7L951.4 794.9L947.4 794.9zM946.3 723.1L956.7 723.1L956.7 733.1L946.3 733.1zM1017.3 787.3L992.8 796.9M993 703.7L996.8 717.7M1009.4 741.3a6.3 6.3 0 1 0 12.6 0a6.3 6.3 0 1 0 -12.6 0M1006.4 725.9L996.1 735.6M1009.4 788.9L1032.2 789.7M989.8 798.7L997.5 798.7L997.5 807.5L989.8 807.5zM1008.6 691.9L1002.3 715.9M1004.2 711.7L1009.7 711.7L1009.7 721.4L1004.2 721.4zM1016 797.4L1025.4 797.3M1021.5 764.3L1019.9 785.4M954.2 749.4a5.5 5.5 0 1 0 10.9 0a5.5 5.5 0 1 0 -10.9 0M1008 766.7L1016.1 774.2M982.6 789.3L981.7 805M1016.6 732.1L1023.2 732.1L1023.2 739.4L1016.6 739.4zM1001.3 760.3L1003.6 768M959.1 709.2L967.9 709.2L967.9 717.6L959.1 717.6zM999.9 700.8L1010.5 700.8L1010.5 704.6L999.9 704.6zM1026 725.1L1029.1 734.2M1012.8 795.8L989.7 802.9M999.9 719.9L1005.1 732.7M991 736.8L1002.1 736M1019.7 768.2L1032 768.6M1002.5 741.7L1001.5 757.1M978.4 722.7L995.9 742.1M947.9 707.9L948.5 722.6M1016.5 759.9L1033.2 775.6M961.2 734.8L971.6 734.8L971.6 742.9L961.2 742.9zM1012.2 748.5L1037.3 750.9M956.4 792.7L961.5 806.3M961.9 701.3L951.3 704.6M981.1 705.5L1010.5 705.4M959.2 758.5L961.6 764.5M977.5 723.1L983.1 723.1L983.1 729.2L977.5 729.2zM957.6 762.8L985.8 764.1M1000.7 750.2L1001.4 764.3M991.2 736.6L999.9 736.6L999.9 741L991.2 741zM954.9 755L962.1 755.2M1009.1 707.4L1029.5 708.7M972.2 701.6L962.5 709.9M1003.2 752.4L1016.1 753.5M945.2 752.9L952 752.9L952 762.3L945.2 762.3zM969.5 779.2L968.7 790M1009 798.7L1037.9 801M979.4 702.4L999.9 710.6M992.6 752.9L984.2 756.9M1015.8 796.5a4.9 4.9 0 1 0 9.9 0a4.9 4.9 0 1 0 -9.9 0M955 764.1L960.5 764.1L960.5 771.6L955 771.6zM1010.8 759.3L1019.4 759.3L1019.4 763.5L1010.8 763.5zM976.6 762.7L995.4 767.5M962.9 744.9L971.5 772.5M974.5 717.3L972 743.5M984 761.7a6.3 6.3 0 1 0 12.6 0a6.3 6.3 0 1 0 -12.6 0M1012.5 728.7L1013.1 737M947.8 700.6L959.1 700.6L959.1 706.2L947.8 706.2zM997.4 738.6a2.4 2.4 0 1 0 4.9 0a2.4 2.4 0 1 0 -4.9 0M1012.2 709.6L1021.4 709.6L1021.4 712.9L1012.2 712.9zM963.9 737.4L970.2 737.4L970.2 745.7L963.9 745.7zM1045.3 722.4L1060.5 723.7M1047 727.7L1059 727.7L1059 730.8L1047 730.8zM1092.6 796.4L1081.3 801M1059.2 699.9L1070.8 724.1M1043 772.6L1046.8 772.6L1046.8 776.6L1043 776.6zM1083.7 707.3L1084.4 728.2M1036.2 789L1045.7 788.6M1054.4 766.3L1058.1 766.3L1058.1 776L1054.4 776zM1054.2 739.7L1054 766.8M1037.7 713.4L1060.9 714.4M1086.4 771.2L1075.9 796.6M1060.1 704.2L1085.1 712.8M1055.4 739.7L1033.6 747.8M1028.5 766.9a6.5 6.5 0 1 0 13 0a6.5 6.5 0 1 0 -13 0M1045.2 787.6L1053.9 797.4M1034.3 750.1L1035.3 760.4M1033.9 723.7L1040.3 723.7L1040.3 731.8L1033.9 731.8zM1088.5 741.8L1070.2 747.6M1087.3 779.3L1089.2 799.4M1071.7 744.1L1064.9 758.5M1090.3 697.5L1085.1 710.9M1085 784.5L1085.6 796.7M1037.8 712.3a6 6 0 1 0 12 0a6 6 0 1 0 -12 0M1063.7 721.1L1079.3 726.7M1084.2 714.9L1084.2 743.4M1093.7 687.7L1063 695.8M965.5 666.9L972.7 666.9L972.7 671.6L965.5 671.6zM1063.3 676.7L1074.1 676.7L1074.1 682.4L1063.3 682.4zM1104.8 631.5L1115.6 631.5L1115.6 635.9L1104.8 635.9zM981.6 714.3L1020.3 712.6M1106.6 635.6L1071 651.2M954.8 662.8L973.4 661.9M1079.7 675.3L1063.1 682M1044.6 653.4a6.7 6.7 0 1 0 13.4 0a6.7 6.7 0 1 0 -13.4 0M1127.5 646.7L1153.2 667.7M1056 625.2L1083.9 626.4M989.2 640.1L976 654.2M1103.2 634.7a4.2 4.2 0 1 0 8.3 0a4.2 4.2 0 1 0 -8.3 0M1128.5 637L1163.3 650.6M1135.9 665.2L1135.3 683M1079.1 689.9L1091 689.9L1091 696.6L1079.1 696.6zM1034.1 638.9L1040.1 653.8M990.6 701.6L984.7 724.6M984.8 690.8L991.7 690.8L991.7 694.9L984.8 694.9zM1120.5 651.5L1128.2 651.5L1128.2 661.3L1120.5 661.3zM1090.9 653.6L1097.3 653.6L1097.3 663.5L1090.9 663.5zM1147.6 676.9L1137.1 685.9M1042.1 669.1L1073.6 679.5M1087.5 684.8a4.4 4.4 0 1 0 8.9 0a4.4 4.4 0 1 0 -8.9 0M1106.3 687.2L1116.9 687.2L1116.9 693.5L1106.3 693.5zM1106.9 637.3L1107.1 671.4M1117.5 638.3L1105.6 674.4M1144.4 637.1L1126 644M1107.6 949.7L1115.9 949.7L1115.9 959.5L1107.6 959.5zM1093.6 864.8L1114.6 863.8M1087 893.7L1082.7 909.4M1100.4 912.3L1107.1 933.1M1065.6 946L1074.3 946L1074.3 951.1L1065.6 951.1zM1117.9 898.5L1116.3 921.7M1107 833.9L1112.9 851.9M1118.2 808L1118.9 821.6M1068.4 891.6L1065.9 898.5M1084.4 837L1073.1 849.7M1112.7 896.1L1112.4 901.4M1108.9 915.4a5.4 5.4 0 1 0 10.8 0a5.4 5.4 0 1 0 -10.8 0M1087.4 835.3L1091.2 847.7M1071.2 965.6L1078.2 987.3M1104.6 943.5L1115.1 947.1M1118.6 835.6L1114.3 849.7M1070.3 813.7L1077.9 813.7L1077.9 819L1070.3 819zM1087.4 973.1L1094.6 980.6M1082.5 827.9L1095 840.4M1078 837.7a4 4 0 1 0 8 0a4 4 0 1 0 -8 0M1089.4 936.1L1089.2 953.6M1066.9 904.9L1075 922.5M1114.2 955.1a2.1 2.1 0 1 0 4.1 0a2.1 2.1 0 1 0 -4.1 0M1108.4 946L1114.6 946L1114.6 950L1108.4 950zM1088.4 914L1106.7 912.2M1071.2 888.9L1054.2 893.5M1061.4 951.6a6.2 6.2 0 1 0 12.4 0a6.2 6.2 0 1 0 -12.4 0M1095.4 894.7L1103.1 895.2M1118.2 881.2L1110.8 888.7M1063.8 946L1074.5 946L1074.5 951L1063.8 951zM1117.6 879.9L1118.3 886.6M1098.3 901L1109.9 901L1109.9 909.2L1098.3 909.2zM1102.7 843.3L1107.5 847.8M1066.8 903L1073 903L1073 912.9L1066.8 912.9zM1067.1 930.6L1075.1 930.2M1083.3 847.9L1092.5 847.9L1092.5 856.2L1083.3 856.2zM1119.6 905.4L1125.5 905.4L1125.5 911L1119.6 911zM1077.9 874.4L1095 880.8M1098.7 946.9L1107.9 946.9L1107.9 950.8L1098.7 950.8zM1067.2 809.6L1061.7 814.5M1061.3 872.9L1070.7 872.1M1105.5 923.6L1106.1 930.2M1065.9 959.2L1061.2 964.7M1066 960.3L1060 972.4M1075.3 849.4L1083.7 849.4L1083.7 854.2L1075.3 854.2zM1113 935.1L1101.8 938.2M1095 916L1095.2 923.4M1061.7 966.6L1065.9 966.6L1065.9 969.7L1061.7 969.7zM1061.4 810.4a2.7 2.7 0 1 0 5.3 0a2.7 2.7 0 1 0 -5.3 0M1087.8 832.9L1082.5 848.9M1097.6 891.7L1107.4 891.7L1107.4 895.4L1097.6 895.4zM1066.9 828.4L1074.3 828.4M1081.1 953.4L1095.7 959.6M1064.1 911.9L1081.8 927.2M1111.1 862.1L1111.5 872.8M1100.3 841.4L1101.2 854.5M1073.8 915.4L1074 922.9M1100 898.3L1120.5 898.4M1092.4 975.4L1071.3 982.7M1099.5 822.1L1116.2 820.5M1110.3 946.9L1128.4 951.9M1067 972.3L1063.4 980.9M1118.1 944.8L1118.7 953.5M1111.6 935.6L1123.3 935.6L1123.3 940L1111.6 940zM1080.3 834.6a2 2 0 1 0 4 0a2 2 0 1 0 -4 0M1107.3 815.1a5.6 5.6 0 1 0 11.2 0a5.6 5.6 0 1 0 -11.2 0M1083 916.1L1092.8 916.1L1092.8 921.6L1083 921.6zM1105.7 936.5L1117.6 936.5L1117.6 942.1L1105.7 942.1zM1113.6 970.2L1117.7 970.2L1117.7 978.2L1113.6 978.2zM1102.6 978.2L1112.7 978.1M1080.6 890.3L1080.9 914.9M1068.1 926L1057.4 948M1109 904.7L1113.9 904.7L1113.9 909.8L1109 909.8zM1080.6 815.2L1057.8 824.6M1091.2 840.1L1113.7 838.2M1072.9 835.1L1069.3 847.2M1078.5 921.2L1084.6 921.8M1072.6 872.4L1071.9 896.9M1098.7 943.4L1098.6 961.2M1099.3 936.5L1115.1 938.1M1073.4 847.2L1066.1 867.2M1063.4 923L1068.8 923L1068.8 926.1L1063.4 926.1zM1069.1 856L1082.8 869.2M1058.8 829.5a5.8 5.8 0 1 0 11.7 0a5.8 5.8 0 1 0 -11.7 0M1111.6 940.1L1119 943.4M1098.5 956.9L1102.5 956.9L1102.5 962.6L1098.5 962.6zM1089.3 821.9L1100 821.9L1100 830.4L1089.3 830.4zM1103.4 958.9L1088 964.6M1113.1 887.2L1122.6 887.2M1089.9 903.6L1077 916.1M1096.1 836.2L1095.4 849.3M1096 824.8L1093.2 835.8M1094.3 975.4L1103.1 983.8M1077 963.8a5.3 5.3 0 1 0 10.6 0a5.3 5.3 0 1 0 -10.6 0M1071.1 880.8L1077.8 895.9M1093.2 860.4L1083 871M1060.4 814.5L1072.6 827.5M1118.6 897.6L1126.4 897.6L1126.4 903.4L1118.6 903.4zM1089.4 815.1a6.6 6.6 0 1 0 13.2 0a6.6 6.6 0 1 0 -13.2 0M1091.8 952.4L1090.9 965.1M1319.7 771.3L1330 771.3L1330 777.8L1319.7 777.8zM1350.1 679L1360.6 679L1360.6 682.6L1350.1 682.6zM1321 669.3L1320.9 686.7M1403.3 741.2L1410.8 742M1345.8 737.4L1346.2 745.4M1370.4 696.6L1379.8 696.6L1379.8 700.6L1370.4 700.6zM1428.8 715L1432.3 727.4M1420.5 682.9L1407 688.4M1365.9 728.5L1367.2 747.1M1283.9 761.4L1301.1 769.4M1318.1 666.3L1318.8 692.3M1310.7 715.2L1322.4 715.2L1322.4 719.4L1310.7 719.4zM1296.7 751.4L1304.1 758.3M1320.6 716.6L1330 716.6L1330 719.8L1320.6 719.8zM1384 747.7L1408.1 755.7M1291 677.7L1296.7 677.7L1296.7 683L1291 683zM1344.1 739.9L1355.7 739.9L1355.7 748.3L1344.1 748.3zM1311.1 772L1321.4 772L1321.4 780.5L1311.1 780.5zM1350.9 685.2L1342.5 688.3M1416.1 737.9L1397.8 755.8M1277.2 681.8L1300.6 679.9M1387.7 668.9L1386.4 687.6M1407.1 735.4a3.9 3.9 0 1 0 7.8 0a3.9 3.9 0 1 0 -7.8 0M1371.3 681.5L1370.6 709.3M1307.9 701.5L1330.4 709.2M1410 693.3L1409.3 722.2M1331.7 752.2L1331.8 767.3M1353.4 703.4L1345.6 724.6M1401.2 725.5L1395.4 742.3M1413.3 702.6L1440.1 702.6M1417.2 731.6L1415.9 744.1M1391.8 687.8L1389.4 712.6M1321.9 751.5L1325.5 761.5M1286.1 686.7L1310.9 687.5M1438.6 753.8a2.5 2.5 0 1 0 5 0a2.5 2.5 0 1 0 -5 0M1360.8 738.2L1360.1 746.3M1431.4 740.6L1435.6 740.6L1435.6 749.3L1431.4 749.3zM1319.7 667.8L1321.1 691.6M1291.6 765.1L1302.6 765.1L1302.6 769.2L1291.6 769.2zM1407.4 682.4L1417.1 682.4L1417.1 686.2L1407.4 686.2zM1293.5 729L1284.3 733.1M1322.5 696.7L1340.9 703.3M1299.7 705.3L1306.7 711.4M1404.5 713L1398.7 727.8M1381.8 750L1380.6 779.5M1338.2 757.8L1350.1 761.3M1425.8 744.4L1425.8 773.7M1318.1 728.1L1324.6 728.1L1324.6 731.4L1318.1 731.4zM1344.9 766.2L1345.1 772.9M1411.8 719.7L1437.9 721.2M1381.6 759.4L1380.9 766.3M1346.1 757.1L1339.2 782.4M1363.9 724.9L1363 741.2M1397.3 748.7L1408.9 748.7L1408.9 755.3L1397.3 755.3zM1353.9 723.6L1375.4 722.7M1413 749.4a4 4 0 1 0 8 0a4 4 0 1 0 -8 0M1356.2 741L1377.9 741M1381.7 737.9L1380.7 759.9M1199.1 687.7L1221.3 686.2M1210.3 696.2L1216.7 696.2L1216.7 704.1L1210.3 704.1zM1208.8 701L1219.6 701L1219.6 710.9L1208.8 710.9zM1158.2 699.5L1163.3 699.5L1163.3 708.1L1158.2 708.1zM1265.6 702.9L1275 702.9L1275 705.9L1265.6 705.9zM1207.3 703.4L1199.6 712.3M1250.7 711.3L1270.5 709.8M1162.4 673.4L1190.4 671.3M1224.4 685.7L1224.6 701.3M1162.1 695.2L1167.6 695.2L1167.6 703L1162.1 703zM1260.8 701.8L1270.1 701.8L1270.1 711.5L1260.8 711.5zM1167.7 695.8L1193.9 697.1M1222.4 686L1224.6 713M1175.1 672.7L1179.5 687.2M1150.1 676.5L1158.7 676.5L1158.7 680.2L1150.1 680.2zM1243.7 669.4L1260.1 676.6M1179.4 698.5L1185.1 704.5M1216.3 710.2L1226.9 710.2L1226.9 715L1216.3 715zM1156.6 711L1160.9 711L1160.9 714.4L1156.6 714.4zM1208.9 688.9L1208.2 718.1M1165.7 694.5a2.6 2.6 0 1 0 5.2 0a2.6 2.6 0 1 0 -5.2 0M1197.6 674.7L1211.6 680.7M1172 700.6L1175.4 700.6L1175.4 707.3L1172 707.3zM1160.1 698.1L1185 696.3M1176.4 690.9L1183.7 690.9L1183.7 700.6L1176.4 700.6zM1209.6 709.5L1229.6 709.8M1191.7 689.6L1188.5 696.5M1220.5 684L1227.9 684L1227.9 687.4L1220.5 687.4zM1268.3 694.1L1262.8 708.1M1180 704.9L1188.6 704.9L1188.6 708.5L1180 708.5zM1194.8 746.3L1202.3 761.7M1142.7 791.4L1154.3 791.4L1154.3 801.4L1142.7 801.4zM1095.5 788.8L1101.4 803.8M1140 724.5L1139.7 733.7M1276.7 807L1281.4 807L1281.4 816.4L1276.7 816.4zM1191.5 778.1L1192.3 797.2M1096.9 767.7L1107.8 770.8M1094.1 751.7L1099.9 769.6M1118.9 762.8L1118 772.4M1237.7 747.1L1236.1 763.4M1133.1 738.9a3.5 3.5 0 1 0 7 0a3.5 3.5 0 1 0 -7 0M1206.7 803.9L1224.2 804.9M1172.6 712.5L1178 712.5L1178 718.3L1172.6 718.3zM1124.4 798.2L1115.7 806.2M1261.3 758.3L1264.7 767.7M1251.8 721.9L1269.5 728.7M1112.7 745.1L1130.3 765.4M1093.9 747L1110.8 745.6M1172.8 746.4L1191.5 767.5M1146.7 781.5L1131.7 797M1116.9 730.4L1121.5 740.1M1184.8 772.6L1213.8 774.5M1239.3 783.7L1267.1 781.1M1272.2 799.5L1273.5 816.9M1165.5 779L1166.8 799.2M1278.1 770.5L1276.7 787.6M1222.1 763.2L1230.5 763.2L1230.5 767L1222.1 767zM1229.4 703L1248 722.5M1205.4 709.2L1222.5 728.5M1158.6 747.2L1158.3 760M1186 751.1L1186.4 772.4M1145.5 798L1139.8 803.6M1144.9 781.3L1174.6 784.2M1096.7 795a5.7 5.7 0 1 0 11.4 0a5.7 5.7 0 1 0 -11.4 0M1199.3 740L1212.6 739.3M1245.3 717.2L1253.4 717.2L1253.4 723.3L1245.3 723.3zM1268.2 797.4L1282.3 797.1M1124 803.4a2.2 2.2 0 1 0 4.5 0a2.2 2.2 0 1 0 -4.5 0M1216.3 716.9a5.2 5.2 0 1 0 10.4 0a5.2 5.2 0 1 0 -10.4 0M1237.2 720.2L1236.5 726.9M1187.1 746.2L1198.4 746.2L1198.4 752.4L1187.1 752.4zM1183.4 753L1175.5 759.5M1246.2 745.6L1255 745.6L1255 748.9L1246.2 748.9zM1253.6 760L1253.2 789.4M1153.5 748.7L1163.4 749M1132.4 768.8L1144 768.8L1144 772.1L1132.4 772.1zM1203.6 754L1213.9 754L1213.9 763.8L1203.6 763.8zM1255.3 745.1L1282.3 743.2M1173.8 760.8L1166.1 763.8M1123.6 718.8L1101.4 726.1M1150.8 964.6L1161.1 964.6L1161.1 970.9L1150.8 970.9zM1226.2 949.5L1222.5 953.5M1255.9 940.9L1265.1 952.1M1014.4 944.9L1018.9 946.1M1217.7 963.5L1217.9 981M1238.2 955.5L1234.5 969.5M1195.8 977.6L1201.4 977.6L1201.4 981.1L1195.8 981.1zM1293.4 949.4L1293.9 968.7M935.4 952.4L955.1 952.3M979 964.5L977.4 969.6M1383.7 971.5L1390.8 971.5L1390.8 977.9L1383.7 977.9zM1255.3 951.6L1264.1 951.6L1264.1 955.4L1255.3 955.4zM1137.2 942.7L1135.7 962.2M1390.2 945.9L1407.9 945.5M990.6 977.5L990.7 981.7M1322.8 958.5L1331.2 958.5L1331.2 964.1L1322.8 964.1zM1153.5 976.5L1148.9 980.6M1230.4 955.9L1240.1 955.9L1240.1 965.5L1230.4 965.5zM1034.4 978.3L1037.8 978.3L1037.8 988L1034.4 988zM1053.3 960.4L1053.6 978.9M1175.8 978L1187.5 977.1M1225.2 947.6L1230.6 947.6L1230.6 953.7L1225.2 953.7zM972.5 951.2L976.8 951.2L976.8 957.3L972.5 957.3zM1095.6 970.7L1098.8 970.7L1098.8 980L1095.6 980zM1263.9 978.7L1269.7 978.7L1269.7 982.7L1263.9 982.7zM978.4 951.7L977.5 970M1264.9 965.3L1265.4 980.2M1334.8 959.1L1347.9 960.1M1119 965.4L1124.3 965.4L1124.3 971.3L1119 971.3zM1100.4 975.9L1090 979.5M983.1 971.3L994.7 971.3L994.7 975L983.1 975zM1294.5 968.1a5.4 5.4 0 1 0 10.8 0a5.4 5.4 0 1 0 -10.8 0M1037.4 945.4L1037 956.5M1094 959.9L1093.5 976.7M1036.1 952.5L1043.6 952.5L1043.6 961.4L1036.1 961.4zM1331.4 967L1331 972.8M1360 974.1a6.2 6.2 0 1 0 12.4 0a6.2 6.2 0 1 0 -12.4 0M1387.6 960.5L1396 961.1M1253.6 954.8L1257.8 954.8L1257.8 961L1253.6 961zM956.7 965.7L955.8 982.4M989.6 945.7L1005.3 952M1261.6 946.3L1251.3 957.7M1188.1 941.5L1188.6 951M1173.5 966.7L1190.1 966.3M984.7 977.6L995.7 977.6L995.7 980.7L984.7 980.7zM1186.5 964L1204 971.7M1249.4 949.9L1233.3 954.4M995 945.9L1007.4 961.1M1304.8 956.2L1311.8 956.2L1311.8 963.1L1304.8 963.1zM1285.6 962.6L1303.5 961.5M961 963.7L968.6 963.7L968.6 971.7L961 971.7zM1332.6 963.9L1321.8 974.4M1148.1 963.5L1141.8 965.7M1360.6 945.7L1355 962.3M1039.7 974.8L1047.6 974.8L1047.6 981.3L1039.7 981.3zM1215.2 946L1225.6 946M1209.7 958.3L1192.5 966M1364 973L1370.9 973L1370.9 981.7L1364 981.7zM1354.8 961.7L1360.1 961.7L1360.1 969.6L1354.8 969.6zM1385.9 946.2a3.8 3.8 0 1 0 7.6 0a3.8 3.8 0 1 0 -7.6 0M1464.9 895.6L1458.5 914.8M1472.7 893.7L1452.7 912.2M1486 823.2L1494.2 823.2L1494.2 827.6L1486 827.6zM1466.8 931.1L1470.3 931.1L1470.3 940.5L1466.8 940.5zM1462.5 810.1L1469.9 819M1411.1 831.5L1424 868.5M1461.5 881.4L1482.9 880.9M1462 861.5L1472.1 861.5L1472.1 866.4L1462 866.4zM1522.3 938.6L1528.6 938.6L1528.6 945.2L1522.3 945.2zM1505.3 880L1508.5 880L1508.5 887.7L1505.3 887.7zM1334.4 963.6L1327.8 978.7M1381.1 979.5L1378.8 984.8M1320.5 943.3L1330.8 952.1M1411.5 979.5L1426.8 980.7M1395.4 974.5L1403 974.9M1356.8 968.8L1360.1 981.8M1377.1 961.7L1376.1 976.9M1387.8 962L1378 964.5M1360.5 947.6L1368.1 947.6M1366.8 953.7L1378.5 953.8M1399.9 972.7L1412.9 971.5M1341.3 973.4L1352.2 972.8M1361 942.3L1345.9 948.1M1396.4 942.2L1408.1 942.2L1408.1 949.4L1396.4 949.4zM1386.7 942.7L1395 942.7L1395 949.7L1386.7 949.7zM1321.9 941.6L1328.7 941.6L1328.7 948.7L1321.9 948.7zM1401.8 967.4L1391.9 976M1312.3 946L1318 951.3M1306.5 958.2a2.8 2.8 0 1 0 5.6 0a2.8 2.8 0 1 0 -5.6 0M1369.5 959.4L1364.9 964.5M1341.3 972.7L1348.9 973M1399 938.7L1404.8 952.3M1351.3 968.4L1361.2 968.4L1361.2 975.6L1351.3 975.6zM1300.4 967.5L1300.6 985.4M1305 961.9L1309.7 961.5M1318.8 948.5L1325 948.5L1325 954.6L1318.8 954.6zM1401.1 989.5L1409.2 989.3M1298.2 936.8L1313.6 943.2M1404.9 970.9L1414.1 970.9M1396.2 942.8L1406.3 942.8L1406.3 951.2L1396.2 951.2zM1323.4 953.6L1327.6 953.6L1327.6 960.3L1323.4 960.3zM1393.6 962a3.9 3.9 0 1 0 7.7 0a3.9 3.9 0 1 0 -7.7 0M1404.8 940.6L1418.8 939.4M1413.3 972.7L1426.6 984.3M1380 985.4L1388.2 984.8M1356.5 946.1L1361.9 946.1L1361.9 951.4L1356.5 951.4zM1412.3 935.9L1412.6 953.8M1364.3 939.6L1351.8 951.7M1391.1 964.5L1392.8 981.1M1355.9 937.4L1364.2 937.6M1352.4 961.7L1366.8 960.9M1346.3 987.6a5.1 5.1 0 1 0 10.2 0a5.1 5.1 0 1 0 -10.2 0M1375.6 971L1380.5 976.8M1367.3 942.6L1378.6 946.7M1405.9 962.9L1411.8 975.4M1406.7 974.5L1412.7 974.3M1342.6 931.3L1342 944.7M1333.4 936.9L1328.4 939.1M1308.9 973.7L1325.1 974.6M1396.9 957.6L1398.6 962.3M1357.6 940.7L1369 953M1348.2 932L1341.9 937.3M1298.9 968.7L1307.4 976.9M1300.7 942.9L1318.5 943M1360.4 954.9L1367 956.9M1304.8 936.2L1316.5 937.3M1337.6 989.5L1345.7 989.5L1345.7 998.7L1337.6 998.7zM1384 970.2L1374.2 974.8M1307.7 950.9L1319 950.9M1314.9 972.4a6 6 0 1 0 12.1 0a6 6 0 1 0 -12.1 0M1385.8 955.1L1394.7 955.1L1394.7 959.2L1385.8 959.2zM1402.3 979L1403.6 996.9M1309.1 953.3L1314.9 965.9M1350.4 972.6L1359.8 972.6L1359.8 979L1350.4 979zM1383.6 976.2L1386.6 976.2L1386.6 982.8L1383.6 982.8zM1325.7 936.2L1332.8 941.9M1392.5 935.1L1386.7 937.7M1303.2 983.4L1310.4 991.5M1394.9 963.6L1401.3 970.8M1404.6 954L1414.2 954.1M1375.3 959.4L1367.3 967.6M1386.7 974.6L1398.5 974.6L1398.5 977.9L1386.7 977.9zM1332.2 947.1L1333.3 963.8M1373.9 956.4L1380.5 956.4L1380.5 965L1373.9 965zM1388.2 963.8L1395.9 963.8L1395.9 971.6L1388.2 971.6zM1347.2 985L1358.9 985L1358.9 992.1L1347.2 992.1zM1351.8 985.4L1355.7 986.9M1363.2 938.6L1354.2 942.7M1398.5 957.9a6 6 0 1 0 12 0a6 6 0 1 0 -12 0M1363.1 938.9L1371.2 938.9L1371.2 944L1363.1 944zM1384.3 985.9L1382.6 989.5M1305.7 976.7L1310.6 977M1321.5 963.8L1333.5 963.8L1333.5 969.9L1321.5 969.9zM1396.5 949.7L1400.8 949.7L1400.8 954.4L1396.5 954.4zM1369.4 975.3L1356.2 979.2M1347.3 978.7a4.3 4.3 0 1 0 8.5 0a4.3 4.3 0 1 0 -8.5 0M1395.1 931.4L1385.3 941.4M1326.8 927.5L1317.7 935M1409.4 972.3L1415.3 972.3L1415.3 982.2L1409.4 982.2zM1294 954.6L1310.3 953.4M1305.9 983.2L1311.1 983.7M1400.2 986.8L1384.8 992.2M1391.5 955.2L1380.1 960.7M1410.2 928.8L1420.9 940.7M1368.4 987.3L1374.5 986.8M1335.1 959.8L1339.8 959.8L1339.8 966.8L1335.1 966.8zM1346.1 932.8L1349.5 932.8L1349.5 939.5L1346.1 939.5zM1358.5 942.3L1355.1 954.4M1301.3 986.8L1306.9 986.8L1306.9 995.3L1301.3 995.3zM1396.9 930.1L1401.3 930.1L1401.3 938.3L1396.9 938.3zM1392.1 963.3L1392.7 977.4M1299.2 949.2L1306.3 948.5M1405.3 979.1L1409.1 980.6M1322.9 986.8L1329.6 986.8L1329.6 992.6L1322.9 992.6zM1397.4 943.9L1398.3 953.8M1403.4 933.9L1404 940.8M1321.4 931.9L1319.1 939M1338.8 929.5L1337.8 940M1345.1 949.3L1350.5 954.7M1337.4 960.6L1352.6 964.9M1401.1 962.3L1398.1 971.7M1386 953.5L1393 952.9M1411.3 978.8L1421.9 978.8L1421.9 984.5L1411.3 984.5zM1353.2 961.2a5.5 5.5 0 1 0 11 0a5.5 5.5 0 1 0 -11 0M1300.9 979.5L1310 979.5L1310 987.6L1300.9 987.6zM1395.7 977.1L1412.7 975.4M1416.7 967.3L1415.4 983.3M1354.2 937.5L1360.5 943.8M1294.8 944.8L1309.9 946.3M1300.9 933L1301.3 939.8" fill="none" stroke="#000" stroke-width="1"/>
<path d="M960.8 911.7L957.1 923.5M994.6 968.2L1000.9 968.2L1000.9 975.3L994.6 975.3zM948.4 931.5L947.5 942.1M1050 932.6a4.5 4.5 0 1 0 9 0a4.5 4.5 0 1 0 -9 0M953.3 966.1L963.6 966.1L963.6 969.3L953.3 969.3zM958.5 924.8L969.3 924.8L969.3 929.4L958.5 929.4zM1032 823.3L1027.5 833.8M1026.5 810.1L1021.3 815.2M956.7 885.1L956.9 893.1M1052 861.4L1056.8 861.7M1053 790.5L1061.5 790.5L1061.5 797.4L1053 797.4zM1005.5 823.3L1017.7 823.6M1027.5 960.1L1027.8 963.8M1030.4 855.1L1028.3 863.6M963.1 959.3L972.5 960.2M996.7 856.6L996.2 862.3M990.5 865.4L995.8 865.4L995.8 870.4L990.5 870.4zM988.2 821.6L992.6 821.6L992.6 829.7L988.2 829.7zM945.7 815.8L950.6 815.8L950.6 824.7L945.7 824.7zM1030.3 949.1L1032.6 957.1M994.8 815.7L1004 815.7L1004 825.4L994.8 825.4zM944.7 893.4L940.7 906.3M1018.6 929.1L1021.8 929.1L1021.8 935.2L1018.6 935.2zM957.1 947.4L955.2 953.5M984.6 952L986.6 956.6M1017.4 891.7L1025.9 891.8M945.2 960.6L947.8 963.2M960.6 916.8L959.7 926.4M971.2 818.1L965.1 819.7M1001.3 965.4L1005 965.4M977.4 881.2L977.1 890M947.2 937.5L947.4 944M946.4 803.9L958.3 804.2M999.5 961.5L996.6 968.9M984.8 864.3L990.3 864.3L990.3 871.4L984.8 871.4zM986.5 869L997.8 869L997.8 876.6L986.5 876.6zM944.6 815.6L944 828.4M1014 925.9L1010.2 934.8M973.5 875.5L966.8 882.6M1048.2 973.2L1053.4 972.8M1019.2 807.1L1025.5 806.5M1023 875.3L1027.8 875.8M1017.1 856L1018.9 861.6M977 837L986.2 837L986.2 845L977 845zM955.2 862.6a2.9 2.9 0 1 0 5.7 0a2.9 2.9 0 1 0 -5.7 0M984.5 837.7L984 843.1M1012.4 951.4L1020.9 951.4L1020.9 959.3L1012.4 959.3zM967.6 791.4L974 791.4L974 794.4L967.6 794.4zM959.1 895.6L965.7 895.6L965.7 902.5L959.1 902.5zM965.9 938.4L974.1 938.4L974.1 942L965.9 942zM1044 926.4L1043 929.9M1009.7 904.8L1014.1 904.8L1014.1 909.8L1009.7 909.8zM1013.6 791.7L1024.1 791.7L1024.1 797.2L1013.6 797.2zM978.7 815.1L982.3 824.9M958.2 805.5L958.2 813M1021 887.1L1026.4 886.9M1024.6 899.9L1022.8 904.5M1001.7 815.7L991.9 824.3M962.8 927.8L967.2 940M986.4 963.8L983.4 964.7M1008.9 900.6L1012.2 904.1M997.4 953.1a4.2 4.2 0 1 0 8.5 0a4.2 4.2 0 1 0 -8.5 0M1023.4 966.9L1033 966.4M1016.6 948.8L1017.9 951.8M1006.7 794.9L1014.5 794.9L1014.5 800.5L1006.7 800.5zM1050.2 845L1057.8 844.6M1029.4 926.6L1027.9 931.4M965.6 878.3L976 878.3L976 885.4L965.6 885.4zM1032.3 926.3L1035.6 926.3L1035.6 934.7L1032.3 934.7zM1041.5 842.8L1037.8 846.9M1033.4 879.3L1039.4 879.3L1039.4 884.8L1033.4 884.8zM1010.7 871L998.7 874.8M983.1 836.3L993.7 836.3L993.7 845.6L983.1 845.6zM950.4 841.5L947.4 852.4M952.7 901.6L951.2 906.7M1024.8 824.3L1019.2 836.3M940.6 940.6L941.5 951.2M954.2 952.9L963.5 952.9L963.5 959.3L954.2 959.3zM998.4 887.9L1005.2 895.2M981.9 924.6L977.8 934.7M993.1 827.4L987.9 838.6M1043.7 926.2L1043.8 931M977.6 850.7L980.7 850.7L980.7 854.9L977.6 854.9zM955.5 891.9L959.7 891.9M1029 826.9L1026 828.2M965 890.4L965.5 899.7M993.1 912.9L1006.6 912.6M1015.7 950.9L1022.3 956.3M1023.7 897.7L1033.7 896.8M969.6 874.9L969.5 879.7M1016.4 911.4L1024.6 911.4L1024.6 917.8L1016.4 917.8zM1034.4 815.5L1043.3 815.5L1043.3 821.6L1034.4 821.6zM965.2 857.7L968.1 860.7M961.4 953.4a3.7 3.7 0 1 0 7.3 0a3.7 3.7 0 1 0 -7.3 0M961.5 959L965.9 959L965.9 968.7L961.5 968.7zM942.7 930.5L940.3 935.7M1043 823.1L1031.5 827.1M996.6 845.7L993.8 855.8M1013.8 968.4a3.9 3.9 0 1 0 7.8 0a3.9 3.9 0 1 0 -7.8 0M1048.7 818L1055.9 823.9M964.4 972.1L969.3 972.1L969.3 977.8L964.4 977.8zM964.2 904L959.5 916.8M989.5 912.8L998.9 912.8L998.9 921.1L989.5 921.1zM959.1 810.5L966.7 810.5L966.7 815.6L959.1 815.6zM986.8 916.7L995.8 926.7M967 791a5.1 5.1 0 1 0 10.3 0a5.1 5.1 0 1 0 -10.3 0M975.7 916.5L976.2 923.2M980.5 906.9L986.6 906.9L986.6 911.1L980.5 911.1zM974.4 829.4a5.4 5.4 0 1 0 10.8 0a5.4 5.4 0 1 0 -10.8 0M966.7 811.3L966.6 816.1M1042.9 713.9L1050.8 714.1M1025.5 787.9a5 5 0 1 0 10 0a5 5 0 1 0 -10 0M1043.7 767.2L1046.1 769.8M1019.1 729L1019.4 733.2M1028.3 795.3L1031.1 801.3M983.4 739.3a5.5 5.5 0 1 0 10.9 0a5.5 5.5 0 1 0 -10.9 0M1001 734.2a6.4 6.4 0 1 0 12.8 0a6.4 6.4 0 1 0 -12.8 0M1001.2 792.6L1008.3 792.3M992 757.6L1002.6 761.5M1009.7 706.2L1004.4 711.9M1043.2 794.8L1046.2 795.7M987.1 700.8L991.9 705.3M983.8 702.1L994.9 705.3M1024.1 704L1024.3 716.2M1004.1 784.7a5.4 5.4 0 1 0 10.8 0a5.4 5.4 0 1 0 -10.8 0M1035.9 747.5L1042.8 747.7M1032.3 761.3L1040.7 760.4M1000.5 717.1L1004.2 717.1L1004.2 721.5L1000.5 721.5zM1025.9 799.3L1031.4 799.3L1031.4 803L1025.9 803zM1009.7 714.3L1010.8 727.2M987.4 721.4L989.7 726.1M1006.4 774L1001 776.1M984.3 789.9L982.6 794.6M997.2 703L1000.6 703M971.3 777L983.2 776.3M1022 742.1L1027.2 746.5M1034.9 699.4L1037.8 702.4M1048.5 756.3L1044.6 768M983.3 728L995 727.6M1008.9 712.5L1016.1 714.6M1399.6 983L1405.4 982.4M1345.8 970.2L1345.8 975.2M1314 943.3L1311 944.4M1353.4 970.5L1352.9 978.8M1372.2 978.3L1372 989.1M1336.6 980.6L1339.7 987.2M1370.5 955.2L1367.7 965M1377.3 963.4L1382.8 963.4L1382.8 970.4L1377.3 970.4zM1392.4 951L1391.7 958.8M1350.5 950.2L1360.5 949.4M1392.9 950.7L1399.3 950.7L1399.3 956.9L1392.9 956.9zM1309.4 965.1L1317.4 971.6M1401.4 976.2L1413.3 976.3M1339.9 983.8a4.7 4.7 0 1 0 9.5 0a4.7 4.7 0 1 0 -9.5 0M1385.4 958.7L1385.6 962.6M1326.8 961.1L1327.1 967.9M1350.8 951.3L1358.1 959.6M1352.8 967.5L1349.7 974.8M1339.9 978.7L1348.6 978.7L1348.6 984L1339.9 984zM1365.6 973.1L1366.2 982.1M1374.3 942.9L1383.5 947.3M1335.1 955.1L1339.3 955.3M1325.5 970.5L1335.2 970.8M1350.8 948.7L1353.2 956.2M1360.8 953.5L1364.4 953.3M1344 940.8a3.7 3.7 0 1 0 7.5 0a3.7 3.7 0 1 0 -7.5 0M1340.1 981.5L1340.3 984.9M1376.8 969.4L1376.8 978.6M1397.3 984.5L1401.3 984.5M1323.1 964.2L1321 966.8M1320.6 972.7L1321.7 975.9M1337.6 956.3L1345.1 956.3L1345.1 963.6L1337.6 963.6zM1346.1 984.4L1357.9 984.4L1357.9 993.8L1346.1 993.8zM1321.8 940.9a6.5 6.5 0 1 0 13 0a6.5 6.5 0 1 0 -13 0M1335.3 975.5L1343.7 976.1M1340.2 946.2L1345.1 945.9M1409.2 968.7L1409.2 979.5M1350.8 967.7L1341.6 970.9M1376.8 979.9L1375.1 986.1M1391.3 940.1L1394.9 943.5" fill="none" stroke="#000" stroke-width="2"/>
<path d="M1133 642C1134.3 649.7 1134.7 651.3 1137 665C1139.3 678.7 1138 668 1140 683C1142 698 1141.3 693.3 1143 710C1144.7 726.7 1143.7 714.7 1145 733C1146.3 751.3 1145.7 743.3 1147 765C1148.3 786.7 1148.3 787 1149 798" fill="none" stroke="#fff" stroke-width="1.6"/>
<path d="M1095 669L1117 669M990 626L996 626M1070 692L1070 705M1061 730L1061 742M1077.5 749L1077.5 761" fill="none" stroke="#fff" stroke-width="1"/>
<path d="M951 872L953 940" fill="none" stroke="#fff" stroke-width="1" stroke-dasharray="16 3 8 2"/>
<path d="M982 645C978 656 977.3 654 970 678C962.7 702 966 690.3 960 717C954 743.7 956 730.3 952 758C948 785.7 949.7 769.3 948 800C946.3 830.7 947.3 833.3 947 850M985 680C981 692.3 979 697 973 717C967 737 970.7 726.3 967 740C963.3 753.7 963.7 752 962 758M949 790L951 870M1118 818L1080 855" fill="none" stroke="#fff" stroke-width="1" stroke-dasharray="9 4 3 6"/>
<path d="M953 847.5C960.3 846.7 960.3 846.8 975 845C989.7 843.2 978.7 846.3 997 842C1015.3 837.7 1009 840 1030 832C1051 824 1043.3 828 1060 818C1076.7 808 1067.7 813.7 1080 802C1092.3 790.3 1087 795.3 1097 783C1107 770.7 1099.7 783.7 1110 765C1120.3 746.3 1122 739.7 1128 727M1113 640C1114.7 648.3 1115 648.3 1118 665C1121 681.7 1119.3 668.3 1122 690C1124.7 711.7 1124.7 716.7 1126 730" fill="none" stroke="#fff" stroke-width="1" stroke-dasharray="1.500 4"/>
<path d="M1383.9 928C1386 928.9 1386.1 928.5 1390.2 930.7C1394.3 933 1392.4 931.7 1396.1 934.6C1399.9 937.6 1398.2 936 1401.6 939.6C1405 943.2 1403.4 941.3 1406.4 945.4C1409.3 949.6 1408 947.4 1410.4 952.1C1412.9 956.8 1411.8 954.4 1413.7 959.5C1415.6 964.6 1414.8 962 1416.1 967.4C1417.3 972.7 1416.9 970 1417.5 975.6C1418.2 981.1 1418 978.4 1418 984C1418 989.6 1418.2 986.9 1417.5 992.4C1416.9 998 1417.3 995.3 1416.1 1000.6C1414.8 1006 1415.6 1003.4 1413.7 1008.5C1411.8 1013.6 1412.9 1011.2 1410.4 1015.9C1408 1020.6 1409.3 1018.4 1406.4 1022.6C1403.4 1026.7 1405 1024.8 1401.6 1028.4C1398.2 1032 1399.9 1030.4 1396.1 1033.4C1392.4 1036.3 1394.3 1035 1390.2 1037.3C1386.1 1039.5 1388.2 1038.6 1383.9 1040C1379.6 1041.5 1381.8 1041 1377.3 1041.6C1372.9 1042.3 1375.1 1042.1 1370.7 1042C1366.2 1041.8 1368.4 1042.1 1364 1041.1C1359.6 1040.1 1361.7 1040.8 1357.5 1039.1C1353.3 1037.3 1355.3 1038.3 1351.4 1035.8C1347.4 1033.3 1347.5 1033 1345.6 1031.5M1383.3 930.8C1385.3 931.7 1385.4 931.3 1389.3 933.4C1393.2 935.5 1391.3 934.3 1394.9 937.1C1398.5 939.9 1396.9 938.4 1400.1 941.8C1403.3 945.2 1401.8 943.4 1404.6 947.4C1407.5 951.3 1406.2 949.3 1408.5 953.7C1410.8 958.2 1409.8 955.9 1411.6 960.7C1413.4 965.5 1412.7 963.1 1413.9 968.2C1415.1 973.3 1414.6 970.7 1415.2 976C1415.9 981.3 1415.7 978.7 1415.7 984C1415.7 989.3 1415.9 986.7 1415.2 992C1414.6 997.3 1415.1 994.7 1413.9 999.8C1412.7 1004.9 1413.4 1002.5 1411.6 1007.3C1409.8 1012.1 1410.8 1009.8 1408.5 1014.3C1406.2 1018.7 1407.5 1016.7 1404.6 1020.6C1401.8 1024.6 1403.3 1022.8 1400.1 1026.2C1396.9 1029.6 1398.5 1028.1 1394.9 1030.9C1391.3 1033.7 1393.2 1032.5 1389.3 1034.6C1385.4 1036.7 1387.4 1035.8 1383.3 1037.2C1379.2 1038.6 1381.3 1038.1 1377.1 1038.7C1372.9 1039.3 1374.9 1039.2 1370.7 1039.1C1366.5 1038.9 1368.6 1039.2 1364.4 1038.3C1360.3 1037.3 1362.3 1038 1358.3 1036.3C1354.2 1034.6 1356.2 1035.6 1352.4 1033.2C1348.6 1030.8 1348.8 1030.5 1346.9 1029.1M1382.5 934.7C1384.3 935.5 1384.4 935.2 1388 937.1C1391.6 939.1 1389.9 938 1393.3 940.6C1396.6 943.1 1395 941.7 1398 944.9C1401 948.1 1399.6 946.4 1402.2 950.1C1404.8 953.8 1403.7 951.8 1405.8 956C1408 960.1 1407 958 1408.7 962.4C1410.3 966.9 1409.7 964.6 1410.8 969.4C1411.9 974.1 1411.5 971.7 1412.1 976.6C1412.6 981.5 1412.5 979.1 1412.5 984C1412.5 988.9 1412.6 986.5 1412.1 991.4C1411.5 996.3 1411.9 993.9 1410.8 998.6C1409.7 1003.4 1410.3 1001.1 1408.7 1005.6C1407 1010 1408 1007.9 1405.8 1012C1403.7 1016.2 1404.8 1014.2 1402.2 1017.9C1399.6 1021.6 1401 1019.9 1398 1023.1C1395 1026.3 1396.6 1024.9 1393.3 1027.4C1389.9 1030 1391.6 1028.9 1388 1030.9C1384.4 1032.8 1386.3 1032 1382.5 1033.3C1378.7 1034.6 1380.6 1034.1 1376.7 1034.7C1372.8 1035.3 1374.7 1035.2 1370.8 1035C1366.9 1034.9 1368.8 1035.1 1365 1034.3C1361.1 1033.4 1363 1034 1359.3 1032.4C1355.6 1030.9 1357.3 1031.8 1353.8 1029.6C1350.3 1027.4 1350.5 1027.1 1348.8 1025.8M1381.5 939.2C1383.2 939.9 1383.3 939.6 1386.6 941.4C1389.8 943.2 1388.3 942.2 1391.3 944.5C1394.3 946.9 1392.9 945.6 1395.7 948.5C1398.4 951.3 1397.1 949.8 1399.5 953.2C1401.9 956.5 1400.8 954.8 1402.7 958.5C1404.7 962.2 1403.8 960.3 1405.4 964.4C1406.9 968.5 1406.2 966.4 1407.3 970.7C1408.3 975 1407.9 972.8 1408.4 977.3C1408.9 981.7 1408.8 979.5 1408.8 984C1408.8 988.5 1408.9 986.3 1408.4 990.7C1407.9 995.2 1408.3 993 1407.3 997.3C1406.2 1001.6 1406.9 999.5 1405.4 1003.6C1403.8 1007.7 1404.7 1005.8 1402.7 1009.5C1400.8 1013.2 1401.9 1011.5 1399.5 1014.8C1397.1 1018.2 1398.4 1016.7 1395.7 1019.5C1392.9 1022.4 1394.3 1021.1 1391.3 1023.5C1388.3 1025.8 1389.8 1024.8 1386.6 1026.6C1383.3 1028.4 1385 1027.7 1381.5 1028.8C1378.1 1030 1379.8 1029.6 1376.3 1030.1C1372.7 1030.6 1374.5 1030.5 1370.9 1030.4C1367.4 1030.2 1369.1 1030.5 1365.6 1029.7C1362.1 1028.9 1363.8 1029.5 1360.4 1028C1357 1026.6 1358.7 1027.5 1355.5 1025.5C1352.3 1023.5 1352.4 1023.2 1350.9 1022M1403.9 914C1406 914.9 1406.1 914.5 1410.2 916.7C1414.3 919 1412.4 917.7 1416.1 920.6C1419.9 923.6 1418.2 922 1421.6 925.6C1425 929.2 1423.4 927.3 1426.4 931.4C1429.3 935.6 1428 933.4 1430.4 938.1C1432.9 942.8 1431.8 940.4 1433.7 945.5C1435.6 950.6 1434.8 948 1436.1 953.4C1437.3 958.7 1436.9 956 1437.5 961.6C1438.2 967.1 1438 964.4 1438 970C1438 975.6 1438.2 972.9 1437.5 978.4C1436.9 984 1437.3 981.3 1436.1 986.6C1434.8 992 1435.6 989.4 1433.7 994.5C1431.8 999.6 1432.9 997.2 1430.4 1001.9C1428 1006.6 1429.3 1004.4 1426.4 1008.6C1423.4 1012.7 1425 1010.8 1421.6 1014.4C1418.2 1018 1419.9 1016.4 1416.1 1019.4C1412.4 1022.3 1414.3 1021 1410.2 1023.3C1406.1 1025.5 1408.2 1024.6 1403.9 1026C1399.6 1027.5 1401.8 1027 1397.3 1027.6C1392.9 1028.3 1395.1 1028.1 1390.7 1028C1386.2 1027.8 1388.4 1028.1 1384 1027.1C1379.6 1026.1 1381.7 1026.8 1377.5 1025.1C1373.3 1023.3 1375.3 1024.3 1371.4 1021.8C1367.4 1019.3 1367.5 1019 1365.6 1017.5M1403.2 917.3C1405.2 918.2 1405.3 917.9 1409.1 919.9C1413 922 1411.1 920.8 1414.7 923.6C1418.3 926.4 1416.6 924.8 1419.8 928.2C1423 931.6 1421.5 929.8 1424.3 933.8C1427.1 937.7 1425.8 935.6 1428.1 940C1430.4 944.4 1429.4 942.2 1431.2 947C1433 951.7 1432.2 949.3 1433.4 954.4C1434.6 959.4 1434.2 956.9 1434.8 962.1C1435.4 967.3 1435.2 964.7 1435.2 970C1435.2 975.3 1435.4 972.7 1434.8 977.9C1434.2 983.1 1434.6 980.6 1433.4 985.6C1432.2 990.7 1433 988.3 1431.2 993C1429.4 997.8 1430.4 995.6 1428.1 1000C1425.8 1004.4 1427.1 1002.3 1424.3 1006.2C1421.5 1010.2 1423 1008.4 1419.8 1011.8C1416.6 1015.2 1418.3 1013.6 1414.7 1016.4C1411.1 1019.2 1413 1018 1409.1 1020.1C1405.3 1022.1 1407.2 1021.3 1403.2 1022.7C1399.2 1024 1401.2 1023.5 1397 1024.2C1392.9 1024.8 1394.9 1024.7 1390.7 1024.5C1386.6 1024.3 1388.6 1024.6 1384.5 1023.7C1380.4 1022.8 1382.4 1023.4 1378.4 1021.8C1374.4 1020.1 1376.3 1021.1 1372.6 1018.7C1368.9 1016.4 1369 1016 1367.2 1014.7M1402.2 921.8C1404 922.6 1404.2 922.3 1407.7 924.2C1411.2 926.1 1409.5 925 1412.8 927.5C1416 930.1 1414.5 928.7 1417.4 931.8C1420.4 934.9 1419 933.2 1421.6 936.8C1424.1 940.4 1423 938.6 1425.1 942.6C1427.2 946.6 1426.2 944.6 1427.9 948.9C1429.5 953.3 1428.8 951.1 1429.9 955.7C1431 960.3 1430.6 958 1431.1 962.8C1431.7 967.5 1431.6 965.2 1431.6 970C1431.6 974.8 1431.7 972.5 1431.1 977.2C1430.6 982 1431 979.7 1429.9 984.3C1428.8 988.9 1429.5 986.7 1427.9 991.1C1426.2 995.4 1427.2 993.4 1425.1 997.4C1423 1001.4 1424.1 999.6 1421.6 1003.2C1419 1006.8 1420.4 1005.1 1417.4 1008.2C1414.5 1011.3 1416 1009.9 1412.8 1012.5C1409.5 1015 1411.2 1013.9 1407.7 1015.8C1404.2 1017.7 1405.9 1016.9 1402.2 1018.2C1398.5 1019.4 1400.4 1019 1396.6 1019.5C1392.8 1020.1 1394.7 1020 1390.8 1019.9C1387 1019.7 1388.9 1020 1385.1 1019.1C1381.4 1018.3 1383.2 1018.9 1379.6 1017.3C1375.9 1015.8 1377.7 1016.7 1374.2 1014.6C1370.8 1012.4 1371 1012.1 1369.3 1010.9M1394.1 919.9C1396.3 920.8 1396.4 920.4 1400.6 922.7C1404.7 924.9 1402.8 923.6 1406.6 926.6C1410.5 929.6 1408.7 928 1412.2 931.7C1415.6 935.4 1414 933.4 1417.1 937.7C1420.1 941.9 1418.7 939.7 1421.2 944.5C1423.7 949.3 1422.6 946.8 1424.5 952C1426.4 957.2 1425.6 954.6 1426.9 960C1428.2 965.5 1427.8 962.8 1428.4 968.4C1429.1 974.1 1428.9 971.3 1428.9 977C1428.9 982.7 1429.1 979.9 1428.4 985.6C1427.8 991.2 1428.2 988.5 1426.9 994C1425.6 999.4 1426.4 996.8 1424.5 1002C1422.6 1007.2 1423.7 1004.7 1421.2 1009.5C1418.7 1014.3 1420.1 1012.1 1417.1 1016.3C1414 1020.6 1415.6 1018.6 1412.2 1022.3C1408.7 1026 1410.5 1024.4 1406.6 1027.4C1402.8 1030.4 1404.7 1029.1 1400.6 1031.3C1396.4 1033.6 1398.5 1032.7 1394.1 1034.1C1389.8 1035.6 1391.9 1035.1 1387.4 1035.8C1382.9 1036.4 1385.2 1036.3 1380.6 1036.1C1376.1 1036 1378.3 1036.3 1373.9 1035.3C1369.4 1034.3 1371.5 1035 1367.2 1033.2C1362.9 1031.4 1365 1032.4 1360.9 1029.9C1356.9 1027.3 1357 1026.9 1355.1 1025.5M1393.5 922.7C1395.6 923.6 1395.7 923.2 1399.7 925.3C1403.6 927.5 1401.8 926.3 1405.4 929.1C1409.1 932 1407.4 930.4 1410.7 933.9C1414 937.4 1412.5 935.5 1415.3 939.6C1418.2 943.7 1416.9 941.5 1419.3 946.1C1421.6 950.6 1420.6 948.3 1422.4 953.2C1424.3 958.2 1423.5 955.7 1424.7 960.9C1426 966.1 1425.5 963.5 1426.1 968.8C1426.8 974.2 1426.6 971.6 1426.6 977C1426.6 982.4 1426.8 979.8 1426.1 985.2C1425.5 990.5 1426 987.9 1424.7 993.1C1423.5 998.3 1424.3 995.8 1422.4 1000.8C1420.6 1005.7 1421.6 1003.4 1419.3 1007.9C1416.9 1012.5 1418.2 1010.3 1415.3 1014.4C1412.5 1018.5 1414 1016.6 1410.7 1020.1C1407.4 1023.6 1409.1 1022 1405.4 1024.9C1401.8 1027.7 1403.6 1026.5 1399.7 1028.7C1395.7 1030.8 1397.7 1029.9 1393.5 1031.3C1389.4 1032.7 1391.5 1032.2 1387.2 1032.9C1382.9 1033.5 1385 1033.4 1380.7 1033.2C1376.4 1033.1 1378.5 1033.3 1374.3 1032.4C1370 1031.5 1372.1 1032.1 1368 1030.4C1363.9 1028.7 1365.8 1029.7 1362 1027.3C1358.1 1024.8 1358.3 1024.5 1356.4 1023.1M1388.9 924.5C1391 925.4 1391.1 925 1395.2 927.2C1399.3 929.5 1397.4 928.2 1401.1 931.1C1404.9 934.1 1403.2 932.5 1406.6 936.1C1410 939.7 1408.4 937.8 1411.4 941.9C1414.3 946.1 1413 943.9 1415.4 948.6C1417.9 953.3 1416.8 950.9 1418.7 956C1420.6 961.1 1419.8 958.5 1421.1 963.9C1422.3 969.2 1421.9 966.5 1422.5 972.1C1423.2 977.6 1423 974.9 1423 980.5C1423 986.1 1423.2 983.4 1422.5 988.9C1421.9 994.5 1422.3 991.8 1421.1 997.1C1419.8 1002.5 1420.6 999.9 1418.7 1005C1416.8 1010.1 1417.9 1007.7 1415.4 1012.4C1413 1017.1 1414.3 1014.9 1411.4 1019.1C1408.4 1023.2 1410 1021.3 1406.6 1024.9C1403.2 1028.5 1404.9 1026.9 1401.1 1029.9C1397.4 1032.8 1399.3 1031.5 1395.2 1033.8C1391.1 1036 1393.2 1035.1 1388.9 1036.5C1384.6 1038 1386.8 1037.5 1382.3 1038.1C1377.9 1038.8 1380.1 1038.6 1375.7 1038.5C1371.2 1038.3 1373.4 1038.6 1369 1037.6C1364.6 1036.6 1366.7 1037.3 1362.5 1035.6C1358.3 1033.8 1360.3 1034.8 1356.4 1032.3C1352.4 1029.8 1352.5 1029.5 1350.6 1028M1398.9 917.5C1401 918.4 1401.1 918 1405.2 920.2C1409.3 922.5 1407.4 921.2 1411.1 924.1C1414.9 927.1 1413.2 925.5 1416.6 929.1C1420 932.7 1418.4 930.8 1421.4 934.9C1424.3 939.1 1423 936.9 1425.4 941.6C1427.9 946.3 1426.8 943.9 1428.7 949C1430.6 954.1 1429.8 951.5 1431.1 956.9C1432.3 962.2 1431.9 959.5 1432.5 965.1C1433.2 970.6 1433 967.9 1433 973.5C1433 979.1 1433.2 976.4 1432.5 981.9C1431.9 987.5 1432.3 984.8 1431.1 990.1C1429.8 995.5 1430.6 992.9 1428.7 998C1426.8 1003.1 1427.9 1000.7 1425.4 1005.4C1423 1010.1 1424.3 1007.9 1421.4 1012.1C1418.4 1016.2 1420 1014.3 1416.6 1017.9C1413.2 1021.5 1414.9 1019.9 1411.1 1022.9C1407.4 1025.8 1409.3 1024.5 1405.2 1026.8C1401.1 1029 1403.2 1028.1 1398.9 1029.5C1394.6 1031 1396.8 1030.5 1392.3 1031.1C1387.9 1031.8 1390.1 1031.6 1385.7 1031.5C1381.2 1031.3 1383.4 1031.6 1379 1030.6C1374.6 1029.6 1376.7 1030.3 1372.5 1028.6C1368.3 1026.8 1370.3 1027.8 1366.4 1025.3C1362.4 1022.8 1362.5 1022.5 1360.6 1021M1386.9 937.8C1388.5 938.5 1388.6 938.2 1391.7 939.9C1394.7 941.5 1393.3 940.6 1396.1 942.8C1398.9 945 1397.6 943.8 1400.2 946.5C1402.7 949.2 1401.6 947.7 1403.8 950.9C1406 954 1405 952.4 1406.8 955.9C1408.7 959.4 1407.9 957.6 1409.3 961.4C1410.7 965.2 1410.1 963.3 1411.1 967.3C1412 971.4 1411.7 969.3 1412.1 973.5C1412.6 977.7 1412.5 975.6 1412.5 979.8C1412.5 984 1412.6 981.9 1412.1 986.1C1411.7 990.3 1412 988.2 1411.1 992.3C1410.1 996.3 1410.7 994.4 1409.3 998.2C1407.9 1002 1408.7 1000.2 1406.8 1003.7C1405 1007.2 1406 1005.6 1403.8 1008.7C1401.6 1011.9 1402.7 1010.4 1400.2 1013.1C1397.6 1015.8 1398.9 1014.6 1396.1 1016.8C1393.3 1019 1394.7 1018.1 1391.7 1019.7C1388.6 1021.4 1390.1 1020.7 1386.9 1021.8C1383.7 1022.9 1385.3 1022.5 1382 1023C1378.7 1023.5 1380.3 1023.4 1377 1023.3C1373.7 1023.2 1375.3 1023.4 1372 1022.6C1368.7 1021.9 1370.3 1022.4 1367.1 1021.1C1364 1019.8 1365.5 1020.6 1362.5 1018.7C1359.5 1016.8 1359.6 1016.5 1358.2 1015.4M1386.3 940.6C1387.8 941.2 1387.9 941 1390.8 942.5C1393.6 944.1 1392.3 943.2 1394.9 945.2C1397.6 947.3 1396.3 946.2 1398.7 948.7C1401.1 951.2 1400 949.9 1402.1 952.8C1404.1 955.7 1403.2 954.2 1404.9 957.5C1406.6 960.8 1405.9 959.1 1407.2 962.6C1408.5 966.2 1408 964.4 1408.8 968.2C1409.7 971.9 1409.4 970 1409.9 973.9C1410.3 977.8 1410.2 975.9 1410.2 979.8C1410.2 983.7 1410.3 981.8 1409.9 985.7C1409.4 989.6 1409.7 987.7 1408.8 991.4C1408 995.2 1408.5 993.4 1407.2 997C1405.9 1000.5 1406.6 998.8 1404.9 1002.1C1403.2 1005.4 1404.1 1003.9 1402.1 1006.8C1400 1009.7 1401.1 1008.4 1398.7 1010.9C1396.3 1013.4 1397.6 1012.3 1394.9 1014.4C1392.3 1016.4 1393.6 1015.5 1390.8 1017.1C1387.9 1018.6 1389.3 1018 1386.3 1019C1383.3 1020 1384.8 1019.7 1381.7 1020.1C1378.6 1020.6 1380.2 1020.5 1377.1 1020.4C1374 1020.3 1375.5 1020.5 1372.4 1019.8C1369.3 1019.1 1370.8 1019.6 1367.9 1018.3C1364.9 1017.1 1366.3 1017.8 1363.5 1016.1C1360.8 1014.3 1360.9 1014.1 1359.5 1013.1M1385.9 942.8C1387.2 943.4 1387.3 943.2 1390 944.7C1392.7 946.1 1391.4 945.3 1393.9 947.2C1396.4 949.2 1395.3 948.1 1397.5 950.5C1399.8 952.9 1398.7 951.6 1400.7 954.4C1402.6 957.1 1401.8 955.7 1403.4 958.8C1405 961.9 1404.3 960.3 1405.5 963.6C1406.8 967 1406.2 965.3 1407.1 968.8C1407.9 972.4 1407.6 970.6 1408 974.3C1408.5 977.9 1408.4 976.1 1408.4 979.8C1408.4 983.5 1408.5 981.7 1408 985.3C1407.6 989 1407.9 987.2 1407.1 990.8C1406.2 994.3 1406.8 992.6 1405.5 996C1404.3 999.3 1405 997.7 1403.4 1000.8C1401.8 1003.9 1402.6 1002.5 1400.7 1005.2C1398.7 1008 1399.8 1006.7 1397.5 1009.1C1395.3 1011.5 1396.4 1010.4 1393.9 1012.4C1391.4 1014.3 1392.7 1013.5 1390 1014.9C1387.3 1016.4 1388.7 1015.8 1385.9 1016.8C1383 1017.7 1384.4 1017.4 1381.5 1017.8C1378.6 1018.3 1380 1018.2 1377.1 1018.1C1374.2 1018 1375.6 1018.1 1372.7 1017.5C1369.8 1016.9 1371.2 1017.3 1368.5 1016.1C1365.7 1015 1367 1015.7 1364.4 1014C1361.8 1012.3 1361.8 1012.1 1360.6 1011.2M1384.7 924.1L1391.1 926.8L1406.2 921L1399.9 917.3zM1399.9 917.3L1411.8 914.4L1417.6 918.4L1406.2 921M1382.2 935.8L1384.7 924.1M1387.4 938L1391.1 926.8M1381.5 939.2L1385.9 933L1386.3 941.2M1381.7 927.3L1399.8 921L1403 913.7M1402.2 921.8L1408.3 915.8M1396.1 929.9L1401.7 934.5L1416.4 930.2L1411 924.7zM1411 924.7L1422 922.3L1426.9 927.9L1416.4 930.2M1391.4 940.5L1396.1 929.9M1395.9 944.2L1401.7 934.5M1390 943.5L1395.4 938.9L1394.2 947M1392.5 932.1L1410.2 928.3L1413.7 918.9M1411.4 926.5L1418.4 922.5M1405.9 939L1410.5 945.3L1424.5 942.4L1420.4 935.4zM1420.4 935.4L1430.4 933.1L1434.1 940.1L1424.5 942.4M1399.3 947.9L1405.9 939M1402.9 952.9L1410.5 945.3M1397.4 950.4L1403.5 947.6L1400.8 955.1M1402 940L1418.9 938.6L1423 927.2M1419.3 933.9L1426.9 932.2M1413.7 951L1416.9 958.5L1430 956.7L1427.3 948.6zM1427.3 948.6L1436.5 946.2L1438.6 954.1L1430 956.7M1405.5 957.5L1413.7 951M1408.1 963.5L1416.9 958.5M1403.2 959.3L1409.7 958.5L1405.5 964.9M1409.7 950.7L1425.3 951.3L1430.5 938.2M1425.5 943.5L1433.2 944.2M1418.8 965L1420.5 973.2L1432.5 972.2L1431.5 963.6zM1431.5 963.6L1439.7 960.8L1440.3 969.1L1432.5 972.2M1409.7 968.7L1418.8 965M1411 975.3L1420.5 973.2M1407 969.8L1413.5 971L1408.2 975.9M1415 963.5L1429 965.5L1435.5 951.1M1429.7 954.7L1437 957.8M1421.1 980.1L1421.1 988.6L1431.8 988.1L1432.6 979.4zM1432.6 979.4L1440.1 975.9L1439 984.2L1431.8 988.1M1411.5 980.9L1421.1 980.1M1411.4 987.7L1421.1 988.6M1408.7 981.1L1414.8 984.3L1408.7 987.5M1417.7 977.5L1429.8 980.5L1437.8 965.2M1431.5 966.9L1438 972.2M1420.4 995.5L1418.7 1003.8L1428.1 1003.3L1430.5 995.1zM1430.5 995.1L1437.4 990.7L1434.7 998.3L1428.1 1003.3M1410.9 993.3L1420.4 995.5M1409.5 999.9L1418.7 1003.8M1408.2 992.6L1413.4 997.6L1406.9 998.8M1417.6 991.9L1427.6 995.2L1437.4 979.6M1430.9 979.3L1436.1 986.4M1416.6 1010.2L1413.3 1017.7L1421.6 1016.8L1425.5 1009.6zM1425.5 1009.6L1432 1004.2L1427.9 1010.8L1421.6 1016.8M1407.9 1005.1L1416.6 1010.2M1405.2 1011.1L1413.3 1017.7M1405.4 1003.6L1409.4 1010.1L1402.9 1009.2M1414.6 1005.9L1422.6 1008.9L1434.1 993.5M1427.9 991.1L1431.5 999.6M1410.1 1023.3L1405.5 1029.5L1412.5 1027.9L1417.8 1022.1zM1417.8 1022.1L1424 1015.6L1418.8 1020.7L1412.5 1027.9M1402.6 1015.6L1410.1 1023.3M1398.9 1020.6L1405.5 1029.5M1400.5 1013.4L1403.2 1020.9L1397 1018M1409 1018.4L1415.1 1020.5L1428.2 1005.8M1422.6 1001.6L1424.5 1011M1401.2 1033.9L1395.5 1038.5L1401.6 1035.8L1407.8 1031.9zM1407.8 1031.9L1414.1 1024.1L1408 1027.4L1401.6 1035.8M1395.5 1024.1L1401.2 1033.9M1390.9 1027.8L1395.5 1038.5M1393.9 1021.3L1395 1029.5L1389.6 1024.7M1401.1 1028.9L1405.6 1029.5L1420.1 1016M1415.5 1010.1L1415.5 1019.9M1390.6 1041.5L1384.1 1044.1L1389.5 1040.1L1396.3 1038.2zM1396.3 1038.2L1402.8 1029.3L1396.3 1030.7L1389.5 1040.1M1386.9 1030.2L1390.6 1041.5M1381.8 1032.3L1384.1 1044.1M1385.9 1027L1385.4 1035.2L1381.1 1029M1391.4 1036.6L1394.6 1035.2L1410.2 1023.3M1406.9 1016.2L1405 1025.6M1378.7 1045.5L1372 1046.1L1376.9 1040.5L1383.9 1040.8zM1383.9 1040.8L1390.9 1030.9L1384.3 1030.1L1376.9 1040.5M1377.4 1033.4L1378.7 1045.5M1372 1033.9L1372 1046.1M1377 1030L1374.9 1037.8L1372 1030.4M1380.6 1041L1382.8 1037.3L1399.2 1027.3M1397.4 1019.4L1393.7 1028M1366.5 1045.7L1359.9 1044.1L1364.7 1036.9L1371.3 1039.4zM1371.3 1039.4L1379 1028.7L1372.8 1025.9L1364.7 1036.9M1367.6 1033.6L1366.5 1045.7M1362.2 1032.3L1359.9 1044.1M1367.9 1030.1L1364.3 1037.1L1362.9 1029M1369.1 1041.9L1371 1035.7L1387.8 1027.8M1387.6 1019.6L1382.3 1026.7M1354.6 1042L1348.5 1038.5L1353.5 1029.7L1359.5 1034.1zM1359.5 1034.1L1367.9 1022.8L1362.4 1018.2L1353.5 1029.7M1358 1030.7L1354.6 1042M1353.1 1027.8L1348.5 1038.5M1359 1027.4L1354.2 1033L1354.4 1024.7M1357.9 1039.2L1359.8 1030.5L1376.6 1024.7M1378 1016.7L1371.5 1021.9M809 1044a67 68 0 1 0 134 0a67 68 0 1 0 -134 0M812.4 1044a63.6 64.6 0 1 0 127.3 0a63.6 64.6 0 1 0 -127.3 0M817 1044a59 59.8 0 1 0 117.9 0a59 59.8 0 1 0 -117.9 0M822.4 1044a53.6 54.4 0 1 0 107.2 0a53.6 54.4 0 1 0 -107.2 0M837 1024a67 68 0 1 0 134 0a67 68 0 1 0 -134 0M841 1024a63 63.9 0 1 0 126 0a63 63.9 0 1 0 -126 0M846.4 1024a57.6 58.5 0 1 0 115.2 0a57.6 58.5 0 1 0 -115.2 0M821.7 1034a68.3 69.4 0 1 0 136.7 0a68.3 69.4 0 1 0 -136.7 0M825 1034a65 66 0 1 0 130 0a65 66 0 1 0 -130 0M816 1039a67 68 0 1 0 134 0a67 68 0 1 0 -134 0M830 1029a67 68 0 1 0 134 0a67 68 0 1 0 -134 0M834.1 1038a50.2 51 0 1 0 100.5 0a50.2 51 0 1 0 -100.5 0M837.5 1038a46.9 47.6 0 1 0 93.8 0a46.9 47.6 0 1 0 -93.8 0M840.2 1038a44.2 44.9 0 1 0 88.4 0a44.2 44.9 0 1 0 -88.4 0M947.7 1044L946.8 1055.4L961.3 1053L963.3 1041.5zM963.3 1041.5L973.5 1035.4L970.8 1046.3L961.3 1053M933.6 1044L947.7 1044M932.9 1053.1L946.8 1055.4M929.6 1044L938.1 1049L928.9 1052.5M942.9 1040.6L959.2 1042.5L971 1022.6M961.6 1024L970.7 1030.8M944.8 1064.5L940.8 1075.2L953.1 1072.6L958.3 1062.1zM958.3 1062.1L967.5 1054.8L962 1064.5L953.1 1072.6M931.3 1060.5L944.8 1064.5M928.1 1069.1L940.8 1075.2M927.4 1059.3L934.2 1066.5L924.4 1067.3M941.1 1059.9L954 1061.9L968.7 1041.8M959.3 1040.5L966.1 1049.6M936.3 1083.3L929.5 1092.4L939.8 1089.1L947.7 1080.5zM947.7 1080.5L956.4 1071.7L948.4 1079.4L939.8 1089.1M924.5 1075.6L936.3 1083.3M919 1082.9L929.5 1092.4M921.1 1073.4L925.6 1082.3L916 1080.2M934.1 1077.9L943.7 1079.1L961.1 1059.6M952.5 1055.6L956.5 1066.3M922.9 1099L913.9 1105.8L922.5 1101.1L932.5 1095.1zM932.5 1095.1L941 1084.7L931.2 1089.8L922.5 1101.1M913.7 1088.2L922.9 1099M906.5 1093.6L913.9 1105.8M911.1 1085.1L913 1094.9L904.3 1090.2M922.4 1093.1L929 1092.6L948.9 1074.5M941.7 1068.2L942.6 1079.6M905.8 1110.2L895.2 1114.1L902.6 1107.7L913.8 1104.8zM913.8 1104.8L922.7 1092.8L911.8 1095L902.6 1107.7M899.9 1097.2L905.8 1110.2M891.4 1100.3L895.2 1114.1M898.3 1093.5L897.4 1103.4L890.4 1096.4M906.8 1104.4L911.2 1101.4L933 1085.3M927.9 1077.2L925.6 1088.4M886.2 1116L875 1116.8L881.6 1108.3L893.2 1108.7zM893.2 1108.7L902.8 1095.4L891.8 1094.3L881.6 1108.3M884.2 1101.9L886.2 1116M875.2 1102.5L875 1116.8M883.6 1097.8L880 1107.1L875.2 1098.4M888.8 1110.7L891.6 1104.7L914.9 1091.1M912.2 1081.9L906.9 1091.9M865.8 1116L854.8 1113.5L861.3 1102.9L872.3 1106.6zM872.3 1106.6L883 1092.2L872.8 1088L861.3 1102.9M867.8 1101.9L865.8 1116M859 1099.9L854.8 1113.5M868.4 1097.8L862.3 1105.7L860.2 1096M869.8 1111.7L871.9 1102.3L895.8 1091.5M895.8 1081.9L887.9 1090M846.2 1110.2L836.4 1104.6L843.3 1091.9L852.8 1098.6zM852.8 1098.6L865 1083.4L856.3 1076.5L843.3 1091.9M852.1 1097.2L846.2 1110.2M844.2 1092.7L836.4 1104.6M853.7 1093.5L845.7 1099.3L846.4 1089.3M851.2 1107.2L853.7 1094.3L877.4 1086.4M880.1 1077.2L870.2 1082.7M829.1 1099L821.2 1090.9L829.2 1076.2L836.4 1085.4zM836.4 1085.4L850 1069.8L843.7 1060.7L829.2 1076.2M838.3 1088.2L829.1 1099M831.9 1081.7L821.2 1090.9M840.9 1085.1L831.6 1088.4L835 1079M834.7 1097.6L838.4 1081.5L861.1 1076.3M866.3 1068.2L855.3 1070.7M815.7 1083.3L810.4 1073.3L819.9 1057.1L824.3 1068zM824.3 1068L839.5 1052.5L835.9 1041.9L819.9 1057.1M827.5 1075.6L815.7 1083.3M823.3 1067.5L810.4 1073.3M830.9 1073.4L821.1 1073.9L826.9 1065.9M821.5 1083.6L827.3 1064.8L848.4 1061.9M855.5 1055.6L844.3 1054.9M807.2 1064.5L804.9 1053.3L816.3 1036.1L817.6 1047.8zM817.6 1047.8L834.2 1032.9L833.7 1021.8L816.3 1036.1M820.7 1060.5L807.2 1064.5M818.9 1051.5L804.9 1053.3M824.6 1059.3L815 1057L822.8 1051M812.7 1066.4L821.3 1045.7L840.1 1044.5M848.7 1040.5L838.2 1036.5M804.3 1044L805.2 1032.6L818.7 1015L816.7 1026.5zM816.7 1026.5L834.5 1012.6L837.2 1001.7L818.7 1015M818.4 1044L804.3 1044M819.1 1034.9L805.2 1032.6M822.4 1044L813.9 1039L823.1 1035.5M809.1 1047.4L820.8 1025.5L837 1025.4M846.4 1024L837.3 1017.2M807.2 1023.5L811.2 1012.8L826.9 995.4L821.7 1005.9zM821.7 1005.9L840.5 993.2L846 983.5L826.9 995.4M820.7 1027.5L807.2 1023.5M823.9 1018.9L811.2 1012.8M824.6 1028.7L817.8 1021.5L827.6 1020.7M810.9 1028.1L826 1006.1L839.3 1006.2M848.7 1007.5L841.9 998.4M815.7 1004.7L822.5 995.6L840.2 978.9L832.3 987.5zM832.3 987.5L851.6 976.3L859.6 968.6L840.2 978.9M827.5 1012.4L815.7 1004.7M833 1005.1L822.5 995.6M830.9 1014.6L826.4 1005.7L836 1007.8M817.9 1010.1L836.3 988.9L846.9 988.4M855.5 992.4L851.5 981.7M829.1 989L838.1 982.2L857.5 966.9L847.5 972.9zM847.5 972.9L867 963.3L876.8 958.2L857.5 966.9M838.3 999.8L829.1 989M845.5 994.4L838.1 982.2M840.9 1002.9L839 993.1L847.7 997.8M829.6 994.9L851 975.4L859.1 973.5M866.3 979.8L865.4 968.4M846.2 977.8L856.8 973.9L877.4 960.3L866.2 963.2zM866.2 963.2L885.3 955.2L896.2 953L877.4 960.3M852.1 990.8L846.2 977.8M860.6 987.7L856.8 973.9M853.7 994.5L854.6 984.6L861.6 991.6M845.2 983.6L868.8 966.6L875 962.7M880.1 970.8L882.4 959.6M865.8 972L877 971.2L898.4 959.7L886.8 959.3zM886.8 959.3L905.2 952.6L916.2 953.7L898.4 959.7M867.8 986.1L865.8 972M876.8 985.5L877 971.2M868.4 990.2L872 980.9L876.8 989.6M863.2 977.3L888.4 963.3L893.1 956.9M895.8 966.1L901.1 956.1M886.2 972L897.2 974.5L918.7 965.1L907.7 961.4zM907.7 961.4L925 955.8L935.2 960L918.7 965.1M884.2 986.1L886.2 972M893 988.1L897.2 974.5M883.6 990.2L889.7 982.3L891.8 992M882.2 976.3L908.1 965.7L912.2 956.5M912.2 966.1L920.1 958M905.8 977.8L915.6 983.4L936.7 976.1L927.2 969.4zM927.2 969.4L943 964.6L951.7 971.5L936.7 976.1M899.9 990.8L905.8 977.8M907.8 995.3L915.6 983.4M898.3 994.5L906.3 988.7L905.6 998.7M900.8 980.8L926.3 973.7L930.6 961.6M927.9 970.8L937.8 965.3M922.9 989L930.8 997.1L950.8 991.8L943.6 982.6zM943.6 982.6L958 978.2L964.3 987.3L950.8 991.8M913.7 999.8L922.9 989M920.1 1006.3L930.8 997.1M911.1 1002.9L920.4 999.6L917 1009M917.3 990.4L941.6 986.5L946.9 971.7M941.7 979.8L952.7 977.3M936.3 1004.7L941.6 1014.7L960.1 1010.9L955.7 1000zM955.7 1000L968.5 995.5L972.1 1006.1L960.1 1010.9M924.5 1012.4L936.3 1004.7M928.7 1020.5L941.6 1014.7M921.1 1014.6L930.9 1014.1L925.1 1022.1M930.5 1004.4L952.7 1003.2L959.6 986.1M952.5 992.4L963.7 993.1M944.8 1023.5L947.1 1034.7L963.7 1031.9L962.4 1020.2zM962.4 1020.2L973.8 1015.1L974.3 1026.2L963.7 1031.9M931.3 1027.5L944.8 1023.5M933.1 1036.5L947.1 1034.7M927.4 1028.7L937 1031L929.2 1037M939.3 1021.6L958.7 1022.3L967.9 1003.5M959.3 1007.5L969.8 1011.5M847.1 1035a41.5 42.2 0 1 0 83.1 0a41.5 42.2 0 1 0 -83.1 0M849.7 1035a38.9 39.4 0 1 0 77.7 0a38.9 39.4 0 1 0 -77.7 0M857.8 1035a30.8 31.3 0 1 0 61.6 0a30.8 31.3 0 1 0 -61.6 0M866.5 1035a22.1 22.4 0 1 0 44.2 0a22.1 22.4 0 1 0 -44.2 0M875.2 1035a13.4 13.6 0 1 0 26.8 0a13.4 13.6 0 1 0 -26.8 0M840 1041a40.2 40.8 0 1 0 80.4 0a40.2 40.8 0 1 0 -80.4 0M850.7 1041a29.5 29.9 0 1 0 59 0a29.5 29.9 0 1 0 -59 0M864.9 1028a33.5 34 0 1 0 67 0a33.5 34 0 1 0 -67 0M881.6 1028a16.8 17 0 1 0 33.5 0a16.8 17 0 1 0 -33.5 0M901.8 1037.4L919 1040.4M911 1039.4a2 2 0 1 0 4 0a2 2 0 1 0 -4 0M897.9 1044.8L910 1057.5M903.8 1053.1a2 2 0 1 0 4 0a2 2 0 1 0 -4 0M890.5 1048.5L892.9 1066M890.1 1059.9a2 2 0 1 0 4 0a2 2 0 1 0 -4 0M882.3 1047L874.1 1062.6M875 1057.2a2 2 0 1 0 4 0a2 2 0 1 0 -4 0M876.6 1041L860.9 1048.7M864.3 1046a2 2 0 1 0 4 0a2 2 0 1 0 -4 0M875.4 1032.6L858.2 1029.6M862.2 1030.6a2 2 0 1 0 4 0a2 2 0 1 0 -4 0M879.3 1025.2L867.2 1012.5M869.4 1016.9a2 2 0 1 0 4 0a2 2 0 1 0 -4 0M886.7 1021.5L884.3 1004M883.1 1010.1a2 2 0 1 0 4 0a2 2 0 1 0 -4 0M894.9 1023L903.1 1007.4M898.2 1012.8a2 2 0 1 0 4 0a2 2 0 1 0 -4 0M900.6 1029L916.3 1021.3M908.9 1024a2 2 0 1 0 4 0a2 2 0 1 0 -4 0M873.8 1042.7L881.4 1027.3M874.7 1045.1L884.9 1024.9M876.2 1046.7L887.8 1023.3M877.9 1047.7L890.5 1022.3M879.8 1048.2L893 1021.8M881.9 1048.4L895.3 1021.6M884.2 1048.2L897.4 1021.8M886.7 1047.7L899.3 1022.3M889.4 1046.7L901 1023.3M892.3 1045.1L902.5 1024.9M895.8 1042.7L903.4 1027.3M1187 1098a67 68 0 1 0 134 0a67 68 0 1 0 -134 0M1190.3 1098a63.6 64.6 0 1 0 127.3 0a63.6 64.6 0 1 0 -127.3 0M1195 1098a59 59.8 0 1 0 117.9 0a59 59.8 0 1 0 -117.9 0M1200.4 1098a53.6 54.4 0 1 0 107.2 0a53.6 54.4 0 1 0 -107.2 0M1215 1080a67 68 0 1 0 134 0a67 68 0 1 0 -134 0M1219 1080a63 63.9 0 1 0 126 0a63 63.9 0 1 0 -126 0M1224.4 1080a57.6 58.5 0 1 0 115.2 0a57.6 58.5 0 1 0 -115.2 0M1199.7 1089a68.3 69.4 0 1 0 136.7 0a68.3 69.4 0 1 0 -136.7 0M1203 1089a65 66 0 1 0 130 0a65 66 0 1 0 -130 0M1194 1093.5a67 68 0 1 0 134 0a67 68 0 1 0 -134 0M1208 1084.5a67 68 0 1 0 134 0a67 68 0 1 0 -134 0M1212.2 1092.6a50.2 51 0 1 0 100.5 0a50.2 51 0 1 0 -100.5 0M1215.5 1092.6a46.9 47.6 0 1 0 93.8 0a46.9 47.6 0 1 0 -93.8 0M1218.2 1092.6a44.2 44.9 0 1 0 88.4 0a44.2 44.9 0 1 0 -88.4 0M1325.7 1098L1324.8 1109.4L1339.3 1108L1341.3 1096.5zM1341.3 1096.5L1351.5 1091.4L1348.8 1102.3L1339.3 1108M1311.6 1098L1325.7 1098M1310.9 1107.1L1324.8 1109.4M1307.6 1098L1316.1 1103L1306.9 1106.5M1320.9 1094.6L1337.2 1097.5L1349 1078.6M1339.6 1080L1348.7 1086.8M1322.8 1118.5L1318.8 1129.2L1331.1 1127.6L1336.3 1117.1zM1336.3 1117.1L1345.5 1110.8L1340 1120.5L1331.1 1127.6M1309.3 1114.5L1322.8 1118.5M1306.1 1123.1L1318.8 1129.2M1305.4 1113.3L1312.2 1120.5L1302.4 1121.3M1319.1 1113.9L1332 1116.9L1346.7 1097.8M1337.3 1096.5L1344.1 1105.6M1314.3 1137.3L1307.5 1146.4L1317.8 1144.1L1325.7 1135.5zM1325.7 1135.5L1334.4 1127.7L1326.4 1135.4L1317.8 1144.1M1302.5 1129.6L1314.3 1137.3M1297 1136.9L1307.5 1146.4M1299.1 1127.4L1303.6 1136.3L1294 1134.2M1312.1 1131.9L1321.7 1134.1L1339.1 1115.6M1330.5 1111.6L1334.5 1122.3M1300.9 1153L1291.9 1159.8L1300.5 1156.1L1310.5 1150.1zM1310.5 1150.1L1319 1140.7L1309.2 1145.8L1300.5 1156.1M1291.7 1142.2L1300.9 1153M1284.5 1147.6L1291.9 1159.8M1289.1 1139.1L1291 1148.9L1282.3 1144.2M1300.4 1147.1L1307 1147.6L1326.9 1130.5M1319.7 1124.2L1320.6 1135.6M1283.8 1164.2L1273.2 1168.1L1280.6 1162.7L1291.8 1159.8zM1291.8 1159.8L1300.7 1148.8L1289.8 1151L1280.6 1162.7M1277.9 1151.2L1283.8 1164.2M1269.4 1154.3L1273.2 1168.1M1276.3 1147.5L1275.4 1157.4L1268.4 1150.4M1284.8 1158.4L1289.2 1156.4L1311 1141.3M1305.9 1133.2L1303.6 1144.4M1264.2 1170L1253 1170.8L1259.6 1163.3L1271.2 1163.7zM1271.2 1163.7L1280.8 1151.4L1269.8 1150.3L1259.6 1163.3M1262.2 1155.9L1264.2 1170M1253.2 1156.5L1253 1170.8M1261.6 1151.8L1258 1161.1L1253.2 1152.4M1266.8 1164.7L1269.6 1159.7L1292.9 1147.1M1290.2 1137.9L1284.9 1147.9M1243.8 1170L1232.8 1167.5L1239.3 1157.9L1250.3 1161.6zM1250.3 1161.6L1261 1148.2L1250.8 1144L1239.3 1157.9M1245.8 1155.9L1243.8 1170M1237 1153.9L1232.8 1167.5M1246.4 1151.8L1240.3 1159.7L1238.2 1150M1247.8 1165.7L1249.9 1157.3L1273.8 1147.5M1273.8 1137.9L1265.9 1146M1224.2 1164.2L1214.4 1158.6L1221.3 1146.9L1230.8 1153.6zM1230.8 1153.6L1243 1139.4L1234.3 1132.5L1221.3 1146.9M1230.1 1151.2L1224.2 1164.2M1222.2 1146.7L1214.4 1158.6M1231.7 1147.5L1223.7 1153.3L1224.4 1143.3M1229.2 1161.2L1231.7 1149.3L1255.4 1142.4M1258.1 1133.2L1248.2 1138.7M1207.1 1153L1199.2 1144.9L1207.2 1131.2L1214.4 1140.4zM1214.4 1140.4L1228 1125.8L1221.7 1116.7L1207.2 1131.2M1216.3 1142.2L1207.1 1153M1209.9 1135.7L1199.2 1144.9M1218.9 1139.1L1209.6 1142.4L1213 1133M1212.7 1151.6L1216.4 1136.5L1239.1 1132.3M1244.3 1124.2L1233.3 1126.7M1193.7 1137.3L1188.4 1127.3L1197.9 1112.1L1202.3 1123zM1202.3 1123L1217.5 1108.5L1213.9 1097.9L1197.9 1112.1M1205.5 1129.6L1193.7 1137.3M1201.3 1121.5L1188.4 1127.3M1208.9 1127.4L1199.1 1127.9L1204.9 1119.9M1199.5 1137.6L1205.3 1119.8L1226.4 1117.9M1233.5 1111.6L1222.3 1110.9M1185.2 1118.5L1182.9 1107.3L1194.3 1091.1L1195.6 1102.8zM1195.6 1102.8L1212.2 1088.9L1211.7 1077.8L1194.3 1091.1M1198.7 1114.5L1185.2 1118.5M1196.9 1105.5L1182.9 1107.3M1202.6 1113.3L1193 1111L1200.8 1105M1190.7 1120.4L1199.3 1100.7L1218.1 1100.5M1226.7 1096.5L1216.2 1092.5M1182.3 1098L1183.2 1086.6L1196.7 1070L1194.7 1081.5zM1194.7 1081.5L1212.5 1068.6L1215.2 1057.7L1196.7 1070M1196.4 1098L1182.3 1098M1197.1 1088.9L1183.2 1086.6M1200.4 1098L1191.9 1093L1201.1 1089.5M1187.1 1101.4L1198.8 1080.5L1215 1081.4M1224.4 1080L1215.3 1073.2M1185.2 1077.5L1189.2 1066.8L1204.9 1050.4L1199.7 1060.9zM1199.7 1060.9L1218.5 1049.2L1224 1039.5L1204.9 1050.4M1198.7 1081.5L1185.2 1077.5M1201.9 1072.9L1189.2 1066.8M1202.6 1082.7L1195.8 1075.5L1205.6 1074.7M1188.9 1082.1L1204 1061.1L1217.3 1062.2M1226.7 1063.5L1219.9 1054.4M1193.7 1058.7L1200.5 1049.6L1218.2 1033.9L1210.3 1042.5zM1210.3 1042.5L1229.6 1032.3L1237.6 1024.6L1218.2 1033.9M1205.5 1066.4L1193.7 1058.7M1211 1059.1L1200.5 1049.6M1208.9 1068.6L1204.4 1059.7L1214 1061.8M1195.9 1064.1L1214.3 1043.9L1224.9 1044.4M1233.5 1048.4L1229.5 1037.7M1207.1 1043L1216.1 1036.2L1235.5 1021.9L1225.5 1027.9zM1225.5 1027.9L1245 1019.3L1254.8 1014.2L1235.5 1021.9M1216.3 1053.8L1207.1 1043M1223.5 1048.4L1216.1 1036.2M1218.9 1056.9L1217 1047.1L1225.7 1051.8M1207.6 1048.9L1229 1030.4L1237.1 1029.5M1244.3 1035.8L1243.4 1024.4M1224.2 1031.8L1234.8 1027.9L1255.4 1015.3L1244.2 1018.2zM1244.2 1018.2L1263.3 1011.2L1274.2 1009L1255.4 1015.3M1230.1 1044.8L1224.2 1031.8M1238.6 1041.7L1234.8 1027.9M1231.7 1048.5L1232.6 1038.6L1239.6 1045.6M1223.2 1037.6L1246.8 1021.6L1253 1018.7M1258.1 1026.8L1260.4 1015.6M1243.8 1026L1255 1025.2L1276.4 1014.7L1264.8 1014.3zM1264.8 1014.3L1283.2 1008.6L1294.2 1009.7L1276.4 1014.7M1245.8 1040.1L1243.8 1026M1254.8 1039.5L1255 1025.2M1246.4 1044.2L1250 1034.9L1254.8 1043.6M1241.2 1031.3L1266.4 1018.3L1271.1 1012.9M1273.8 1022.1L1279.1 1012.1M1264.2 1026L1275.2 1028.5L1296.7 1020.1L1285.7 1016.4zM1285.7 1016.4L1303 1011.8L1313.2 1016L1296.7 1020.1M1262.2 1040.1L1264.2 1026M1271 1042.1L1275.2 1028.5M1261.6 1044.2L1267.7 1036.3L1269.8 1046M1260.2 1030.3L1286.1 1020.7L1290.2 1012.5M1290.2 1022.1L1298.1 1014M1283.8 1031.8L1293.6 1037.4L1314.7 1031.1L1305.2 1024.4zM1305.2 1024.4L1321 1020.6L1329.7 1027.5L1314.7 1031.1M1277.9 1044.8L1283.8 1031.8M1285.8 1049.3L1293.6 1037.4M1276.3 1048.5L1284.3 1042.7L1283.6 1052.7M1278.8 1034.8L1304.3 1028.7L1308.6 1017.6M1305.9 1026.8L1315.8 1021.3M1300.9 1043L1308.8 1051.1L1328.8 1046.8L1321.6 1037.6zM1321.6 1037.6L1336 1034.2L1342.3 1043.3L1328.8 1046.8M1291.7 1053.8L1300.9 1043M1298.1 1060.3L1308.8 1051.1M1289.1 1056.9L1298.4 1053.6L1295 1063M1295.3 1044.4L1319.6 1041.5L1324.9 1027.7M1319.7 1035.8L1330.7 1033.3M1314.3 1058.7L1319.6 1068.7L1338.1 1065.9L1333.7 1055zM1333.7 1055L1346.5 1051.5L1350.1 1062.1L1338.1 1065.9M1302.5 1066.4L1314.3 1058.7M1306.7 1074.5L1319.6 1068.7M1299.1 1068.6L1308.9 1068.1L1303.1 1076.1M1308.5 1058.4L1330.7 1058.2L1337.6 1042.1M1330.5 1048.4L1341.7 1049.1M1322.8 1077.5L1325.1 1088.7L1341.7 1086.9L1340.4 1075.2zM1340.4 1075.2L1351.8 1071.1L1352.3 1082.2L1341.7 1086.9M1309.3 1081.5L1322.8 1077.5M1311.1 1090.5L1325.1 1088.7M1305.4 1082.7L1315 1085L1307.2 1091M1317.3 1075.6L1336.7 1077.3L1345.9 1059.5M1337.3 1063.5L1347.8 1067.5M1225.1 1089.9a41.5 42.2 0 1 0 83.1 0a41.5 42.2 0 1 0 -83.1 0M1227.7 1089.9a38.9 39.4 0 1 0 77.7 0a38.9 39.4 0 1 0 -77.7 0M1235.8 1089.9a30.8 31.3 0 1 0 61.6 0a30.8 31.3 0 1 0 -61.6 0M1244.5 1089.9a22.1 22.4 0 1 0 44.2 0a22.1 22.4 0 1 0 -44.2 0M1253.2 1089.9a13.4 13.6 0 1 0 26.8 0a13.4 13.6 0 1 0 -26.8 0M1218 1095.3a40.2 40.8 0 1 0 80.4 0a40.2 40.8 0 1 0 -80.4 0M1228.7 1095.3a29.5 29.9 0 1 0 59 0a29.5 29.9 0 1 0 -59 0M1242.9 1083.6a33.5 34 0 1 0 67 0a33.5 34 0 1 0 -67 0M1259.7 1083.6a16.8 17 0 1 0 33.5 0a16.8 17 0 1 0 -33.5 0M1279.8 1092.3L1297 1095.3M1289 1094.3a2 2 0 1 0 4 0a2 2 0 1 0 -4 0M1275.9 1099.7L1288 1112.4M1281.8 1108a2 2 0 1 0 4 0a2 2 0 1 0 -4 0M1268.5 1103.4L1270.9 1120.9M1268.1 1114.8a2 2 0 1 0 4 0a2 2 0 1 0 -4 0M1260.3 1101.9L1252.1 1117.5M1253 1112.1a2 2 0 1 0 4 0a2 2 0 1 0 -4 0M1254.6 1095.9L1238.9 1103.6M1242.3 1100.9a2 2 0 1 0 4 0a2 2 0 1 0 -4 0M1253.4 1087.5L1236.2 1084.5M1240.2 1085.5a2 2 0 1 0 4 0a2 2 0 1 0 -4 0M1257.3 1080.1L1245.2 1067.4M1247.4 1071.8a2 2 0 1 0 4 0a2 2 0 1 0 -4 0M1264.7 1076.4L1262.3 1058.9M1261.1 1065a2 2 0 1 0 4 0a2 2 0 1 0 -4 0M1272.9 1077.9L1281.1 1062.3M1276.2 1067.7a2 2 0 1 0 4 0a2 2 0 1 0 -4 0M1278.6 1083.9L1294.3 1076.2M1286.9 1078.9a2 2 0 1 0 4 0a2 2 0 1 0 -4 0M1251.8 1097.6L1259.4 1082.2M1252.7 1100L1262.9 1079.8M1254.2 1101.6L1265.8 1078.2M1255.9 1102.6L1268.5 1077.2M1257.8 1103.1L1271 1076.7M1259.9 1103.3L1273.3 1076.5M1262.2 1103.1L1275.4 1076.7M1264.7 1102.6L1277.3 1077.2M1267.4 1101.6L1279 1078.2M1270.3 1100L1280.5 1079.8M1273.8 1097.6L1281.4 1082.2M867.5 1064L877.3 1064.9M845.9 1072.2L849.1 1072.2L849.1 1081.8L845.9 1081.8zM874.1 986.8L883.6 986.8L883.6 992.7L874.1 992.7zM916.7 964.6L927.2 964.6L927.2 974.5L916.7 974.5zM950.1 1054.8L950.7 1063.6M864.7 1083L859.8 1089M930.4 1003.9L944.7 1004.1M851.1 982.3L861.7 983.2M823.7 1018.9L830.8 1018.9L830.8 1027.5L823.7 1027.5zM877.7 1079.9L884.1 1082.6M836.2 981L845.7 981M851.8 1009.7L855.4 1019.5M885.4 1075.6L889.8 1089.6M851.2 1076L848.4 1079M849.2 983.6L859.4 982.8M944.6 1063.4L955.6 1067.2M942.9 1019.2a6.1 6.1 0 1 0 12.2 0a6.1 6.1 0 1 0 -12.2 0M837.4 999.7L841.4 1003.9M827.5 1023L838.5 1023L838.5 1028.1L827.5 1028.1zM904.3 1102.1L912.8 1102.1L912.8 1111.4L904.3 1111.4zM854.4 985.8L846.5 988.9M870.9 983.1L871.1 990.4M826.9 983.8L826 995.4M934.1 1088.1a6.4 6.4 0 1 0 12.9 0a6.4 6.4 0 1 0 -12.9 0M848.2 1001.4L848.5 1007M935.1 1088.1L932.9 1093.8M891 1105.6a6 6 0 1 0 11.9 0a6 6 0 1 0 -11.9 0M873.4 986.9L873.1 991.4M947 1018.2L947.2 1023.4M859.5 1071.7a2.2 2.2 0 1 0 4.4 0a2.2 2.2 0 1 0 -4.4 0M874.4 977.6a5.8 5.8 0 1 0 11.6 0a5.8 5.8 0 1 0 -11.6 0M910.6 992.7L918.5 992.6M870.7 1090.1L873.8 1098.1M916 1088.9L924.5 1089.6M844.5 996.2L850 996.2M828.3 1012.1L828.7 1019.8M933.1 1083.1L937.1 1093.8M838.5 991.2L849.2 991.2L849.2 999.1L838.5 999.1zM858.9 1061.3L869.1 1061.3L869.1 1068.1L858.9 1068.1zM818.2 1051.2L824.1 1051.2L824.1 1059L818.2 1059zM951.3 1084.4L941.6 1087.1M929.9 996L937.7 998.5M860.8 1049.6L859.4 1054.3M826.5 1027.9L836.1 1027.2M908.8 1079L898.9 1087.4M924.1 1073.1L935.3 1073.1L935.3 1081.4L924.1 1081.4zM956.7 1051L968.5 1051L968.5 1058L956.7 1058zM840.9 1014.3a6.1 6.1 0 1 0 12.2 0a6.1 6.1 0 1 0 -12.2 0M813.4 1018L824 1021.3M855.2 1077.8L866 1077.8L866 1085L855.2 1085zM954.1 1007.2L964.8 1017.6M911.6 990.7L911.6 996.4M914.7 967.1L914.4 976.5M834.6 1026.3L834 1033.4M954.8 1005.7L952 1014M883.2 960.9L887.6 974.6M933.8 1033.6L943 1033.6L943 1043.4L933.8 1043.4zM881.1 977.6L883.4 983.2M845.8 1050.6L857.2 1050.6L857.2 1058.5L845.8 1058.5zM907.2 968.2L913.8 974.5M875.1 1107.6a6 6 0 1 0 12 0a6 6 0 1 0 -12 0M815.7 1014.3L823.8 1014.5M827.5 995.5L835.4 995.5L835.4 1000L827.5 1000zM840.6 996.1L844.8 996.1L844.8 1001.8L840.6 1001.8zM940.1 1001L948.2 1001.5M958.9 1035.9L960.7 1040.2M948.3 1062.6L953.9 1068.5M854.1 1040.9L857.7 1044.4M832.8 1075.3L839 1075.3L839 1082.4L832.8 1082.4zM855.3 1093.9L864.6 1093.9L864.6 1101.7L855.3 1101.7zM903.5 1090.3L901.9 1095.6M902.9 1068.2L896.3 1071.3M927.9 1001.6L928.6 1016M938.1 1045.2a4.6 4.6 0 1 0 9.2 0a4.6 4.6 0 1 0 -9.2 0M914.6 1089L915 1103.5M867.2 1066.7L877.7 1067.7M846.5 1020.3L841.2 1025.7M842 1049.7L832.3 1054.4M922 963.5L918 976.9M970 1029.9L969 1043.6M946 1047.1L954.4 1047.7M926.5 1051.7L926.2 1063.9M899.6 979.6L910.3 983.6M938.9 1064.6L946 1066.9M843.2 1020.9L856.2 1020.4M958.4 1067L967.4 1067L967.4 1070.1L958.4 1070.1zM885.8 1096.9L885.4 1110M948.2 1034.3L960.9 1033.9M833.5 1010.3a6.5 6.5 0 1 0 13.1 0a6.5 6.5 0 1 0 -13.1 0M847.5 1092.3a2.3 2.3 0 1 0 4.7 0a2.3 2.3 0 1 0 -4.7 0M836 1005.1L841 1018.8M962 1024.5L975.8 1025M934.1 1047L934.6 1052.6M933 1050.6L940.2 1050.6L940.2 1056.3L933 1056.3zM892.2 1092.3L905.3 1097.5M893.5 961.2L890 964.5M915.2 1067.9L905.4 1078.7M961.2 1020.3a6 6 0 1 0 12.1 0a6 6 0 1 0 -12.1 0M957.3 1017.4L971.9 1018.7M833.3 990.7L842.4 990.6M845.2 1073.1L848.6 1081.7M849.5 984L856 991.5M891.4 1086.5L895.1 1098.7M922.1 979.6L931.6 982.2M873.8 1071.5L886.9 1070.7M927.9 1068.1L934.1 1068.1L934.1 1075.4L927.9 1075.4zM893.3 1102.6L898.1 1102.6L898.1 1110.1L893.3 1110.1zM825 1071.5a5.6 5.6 0 1 0 11.2 0a5.6 5.6 0 1 0 -11.2 0M861.3 1101L869.7 1101.8M838.6 1062.8L837.9 1071.6M946.6 1022.3a2 2 0 1 0 4.1 0a2 2 0 1 0 -4.1 0M948 998.8L938.8 1006.3M870.3 1066.7L878.2 1066.7L878.2 1074.3L870.3 1074.3zM945.7 1028.5L954.7 1028.2M959.8 1053.5L965.2 1053.5L965.2 1058.5L959.8 1058.5zM896.3 1094.4L896.8 1099.5M880.9 974.1L880.7 980.8M936.2 1071.6L948.1 1071.6L948.1 1078L936.2 1078zM917.9 1078.7L928.1 1087.5M829.1 1010.2L829.4 1017.8M941.1 1021.7L941.1 1026.5M842.4 1050.8L848.6 1050.8L848.6 1053.9L842.4 1053.9zM855.5 1014.7a4.4 4.4 0 1 0 8.8 0a4.4 4.4 0 1 0 -8.8 0M853.9 1007.3L866.6 1008.5M884.6 971.1L894.8 971.1L894.8 979.7L884.6 979.7zM900.4 1075.1L900.9 1082.4M952.2 1035.8L962.7 1035.8L962.7 1038.9L952.2 1038.9zM923.2 1087L933.7 1087L933.7 1090.5L923.2 1090.5zM922 981.1L933.5 981.1L933.5 984.2L922 984.2zM888.6 1093.8L883.9 1106.8M812.8 1045.5L826.7 1046.2M873 1100.8L886.5 1101.4M832.8 1017.7L828.5 1028.3M839 1003.7L838.8 1013.1M884.3 1073L888.5 1073L888.5 1082L884.3 1082zM937.2 989L948.1 999.1M904.7 962.3L915.1 962.3L915.1 966.4L904.7 966.4zM858.1 1081.7L849.5 1089.3M863.8 1090.3L871.6 1090.3L871.6 1097.2L863.8 1097.2zM854.7 1074L862.7 1074L862.7 1078.3L854.7 1078.3zM878.1 972.7L889.2 972.7L889.2 982.4L878.1 982.4zM922.6 1061.5L928.9 1068.5M953.8 1045.9L950.8 1057.3M820.7 1029.3L820 1041.3M840.4 1042.2L852.3 1042.2L852.3 1051.2L840.4 1051.2zM922.7 980.6L929.4 980.6L929.4 987.7L922.7 987.7zM863.3 998.5L875.1 998.5L875.1 1007.7L863.3 1007.7zM846.9 988.9L858.6 988.9L858.6 996.5L846.9 996.5zM941.1 1022.1L947.7 1023.8M948.7 1010.5L949.3 1021.7M896.3 959.3L896.1 965.4M914.3 989L920.7 994.7M927.4 1044.7L930 1053M865.6 1094.8L865.9 1105.7M962.6 1047.2a5.3 5.3 0 1 0 10.5 0a5.3 5.3 0 1 0 -10.5 0M867.1 1075.6L870.3 1083.5M888.6 984.1L888.3 991.1M928.9 968.1L933.5 979.2M842 1008.8L842.2 1017M930.7 1071.8L930 1080.9M886.8 1066.8L885.6 1080.7M816 1038.5L822.5 1038.5L822.5 1041.7L816 1041.7zM846.6 1067.9L853.2 1068.3M873.2 991L875.3 998.6M880 994.4L887.1 994.4L887.1 997.9L880 997.9zM841.1 1027.7L847.4 1030.6M950.2 1022.1L950 1032M901.5 961.3L897.3 962.5M881.8 1106.2L877.9 1110.2M829 1023L828.4 1029.5M878.8 966.4L884.5 966.4L884.5 974.5L878.8 974.5zM822.5 1049L823.1 1061.5M910 991.2L921 991.2L921 1000.7L910 1000.7zM860.4 1056.8L857 1070.4M916.7 978.2L920.9 978.2L920.9 986L916.7 986zM952.1 1078.5L958.5 1078.4M900.7 1088.9L890.4 1097.7M841.6 1023.1L850.6 1023.1L850.6 1032.2L841.6 1032.2zM832.3 993L844.2 993.8M817.8 1078.8L831.6 1077.8M823.3 1064.5L823.8 1069.2M919 1103.8L925.2 1103.8L925.2 1111L919 1111zM954.9 1058.2L956.3 1072.9M895.2 965.9L899.3 980.1M932.4 1018.9L944.4 1018.4M846.6 1041.5L853.1 1041.7M852.4 1044L858.3 1044L858.3 1052.8L852.4 1052.8zM918.8 998.5L933.6 1000M905 1074L909.3 1074L909.3 1078.3L905 1078.3zM960.7 1049.9L973.2 1050.4M938.8 1070.9L938.7 1085.2M886.6 1081.6L891.3 1081.6L891.3 1090.1L886.6 1090.1zM881.5 969.9L881.3 976.4M821.3 1011.8L817.2 1025.6M954 1054.9L940.5 1059.7M824.8 1033.5L835.2 1033.5L835.2 1039.8L824.8 1039.8zM941.7 1051.5L949.9 1051.5L949.9 1054.8L941.7 1054.8zM927.3 973.3L917.5 977M870.1 965.9L875.9 965.9L875.9 972.5L870.1 972.5zM863.1 1103.6L874.9 1103.6L874.9 1109.3L863.1 1109.3zM877 979.4L873.2 980.5M845.3 1006.4L851.1 1006.4L851.1 1015.9L845.3 1015.9zM886.3 977L878.7 983.8M917.6 984.8L918.7 989M929.4 1064.5L934.6 1064.5L934.6 1072.2L929.4 1072.2zM887 961.9L893.7 961.9L893.7 967.9L887 967.9zM951.3 1018.7L958.7 1020.5M835.1 984.2L846.9 984.2L846.9 992.6L835.1 992.6zM832.6 981.2L842.3 980.9M846.4 1087.3a4.9 4.9 0 1 0 9.8 0a4.9 4.9 0 1 0 -9.8 0M895 1085.2L895.8 1096.8M906.8 1097.7L909.9 1097.7L909.9 1106.9L906.8 1106.9zM903.4 976.7L895 983.7M958.7 1018.2L958.3 1027.2M933.8 1087.7a5.5 5.5 0 1 0 11.1 0a5.5 5.5 0 1 0 -11.1 0M915.9 967.9L921.1 967.9L921.1 974.4L915.9 974.4zM907.4 1076.5L915.7 1076.6M883.9 1103.7a2.6 2.6 0 1 0 5.2 0a2.6 2.6 0 1 0 -5.2 0M837.8 1008.7L829.9 1016.1M849.6 1017.2L851.3 1021.3M830 1039.8L836.2 1045M926.4 1078.7L930.4 1078.7L930.4 1085.6L926.4 1085.6zM881.4 985.7L892.3 985.7L892.3 993.5L881.4 993.5zM946.9 1000.3a3.1 3.1 0 1 0 6.2 0a3.1 3.1 0 1 0 -6.2 0M960.4 1012.6L968.3 1020.5M862.4 969.6L855.4 977.9M886 993.9L889.5 993.9L889.5 998.9L886 998.9zM861.2 1000.8L873 1001.5M952.3 1048.8a6.2 6.2 0 1 0 12.4 0a6.2 6.2 0 1 0 -12.4 0M947.1 1007.2L947.1 1011.9M920.9 1078.8L930.9 1079.7M942.7 1049.5L942.4 1059.1M906.7 1107.8L915.8 1107.8L915.8 1115.4L906.7 1115.4zM895.7 991.4L905.8 994.7M903.7 961L913.7 961.9M864.8 1060.5L871.7 1060.5L871.7 1068.9L864.8 1068.9zM902.4 966.6L909.4 966.6L909.4 970.5L902.4 970.5zM876.7 969.4L876.3 977.1M838.5 989.1L839 998.6M871 1098.3L862.7 1105.2M876.7 1078.1L881.5 1078.1L881.5 1081.8L876.7 1081.8zM822 1034.9L825.7 1038M935.2 1073.6L941.5 1073.6L941.5 1081.9L935.2 1081.9zM932.8 974.1L932.4 980.2M940.7 1044.6L951.9 1044.9M908.3 1104L916.2 1106.4M853.6 1077.7a2.6 2.6 0 1 0 5.1 0a2.6 2.6 0 1 0 -5.1 0M934 989.7L937.8 989.7L937.8 993.4L934 993.4zM843.9 1031.4a5.6 5.6 0 1 0 11.1 0a5.6 5.6 0 1 0 -11.1 0M849.2 1048.1L862.7 1047M892.2 1093.2L889.1 1103.4M846.3 971.9L846.6 982.2M859.8 966.9L865.3 966.9L865.3 970.2L859.8 970.2zM824.3 1040.9a6.2 6.2 0 1 0 12.4 0a6.2 6.2 0 1 0 -12.4 0M809.2 1037.2L821 1040.7M828.8 1026.8L828.9 1038.3M851.2 1078.4L855.2 1089.9M935.9 996.3L947.5 995.3M940.7 1003.3L951.5 1007.1M878 964.1L883 964.1L883 970.6L878 970.6zM865.8 1078.2L874.6 1078.7M943.5 1051L938.8 1056.3M831.5 1083.8L839.8 1083.8L839.8 1089.3L831.5 1089.3zM874 1091.7a3.2 3.2 0 1 0 6.4 0a3.2 3.2 0 1 0 -6.4 0M819.9 1030.6L819.2 1038.9M882.2 1098.4L893.9 1101.6M940.5 1043.7L945.2 1055.6M952.6 1015.2L962.6 1015.2L962.6 1023.4L952.6 1023.4zM867 1074.9L854 1079.9M961 994.5L962 1009.5M875.2 962L870.2 975.9M914.1 1075.3L923.6 1075.3L923.6 1080.4L914.1 1080.4zM919.9 1084.5L929.5 1084.5L929.5 1094.1L919.9 1094.1zM874.3 1083.1L884.6 1083.6M847.1 1063.8L861.6 1062.9M937.6 999L940.6 999L940.6 1008.3L937.6 1008.3zM885.2 1081.7L896.9 1081.7L896.9 1089.1L885.2 1089.1zM887.1 974.2L886.9 980.5M937.5 1025.9L933.8 1027.5M904.6 1089L918.1 1088.5M834.3 1085.3L833.8 1091.6M908.2 993.9L921.4 998.4M868.4 1099.7L880.5 1099M845.6 1010.2a4.3 4.3 0 1 0 8.7 0a4.3 4.3 0 1 0 -8.7 0M869.3 970.7L874.4 971.2M819.4 1018.2L826.5 1020.8M867.2 981.1L872.8 987.1M824.4 993.1L837.9 994M867.3 999.1L862.2 1003.9M1197.8 1052L1201.1 1052L1201.1 1057.3L1197.8 1057.3zM1246.1 1026.8L1232.9 1030.3M1305.6 1146.4L1309.6 1146.4L1309.6 1156.3L1305.6 1156.3zM1196.4 1044L1210.5 1043.8M1225.2 1089.5L1219.6 1090.9M1303.4 1105.3a3.4 3.4 0 1 0 6.9 0a3.4 3.4 0 1 0 -6.9 0M1197.9 1117.1L1198 1121.8M1319.1 1086.8L1324.4 1086.8L1324.4 1093.7L1319.1 1093.7zM1264.1 1155.5L1263.9 1165.3M1228.3 1074L1216.1 1078.8M1206.2 1122.7L1209.2 1122.7L1209.2 1125.8L1206.2 1125.8zM1338.3 1108.7L1345.7 1109.2M1332.9 1088L1341.6 1088.9M1232.1 1156.2L1237.8 1158.9M1327.9 1076.4L1341.5 1076.8M1193.2 1103.5L1192.7 1115.9M1205.3 1064.8L1202.5 1070.7M1259.4 1155.6L1263 1155.6L1263 1161.1L1259.4 1161.1zM1305.6 1031.4L1304.3 1044.8M1197.3 1108.4L1209.2 1108.4L1209.2 1118.2L1197.3 1118.2zM1229.5 1066.5L1222 1069M1204.5 1118.5L1201 1125.9M1206.5 1057.6L1205.9 1064.9M1302.6 1146.3L1317.2 1145.7M1228 1039.8L1230.9 1046.5M1182.7 1075.5a6.8 6.8 0 1 0 13.6 0a6.8 6.8 0 1 0 -13.6 0M1302.6 1054.7L1297.3 1056.6M1249.1 1032.5L1259.8 1033.2M1303.7 1149.2L1303.6 1163M1212.3 1122.6L1222.9 1122.9M1279.8 1022.3L1290.8 1022.3L1290.8 1028.4L1279.8 1028.4zM1247.3 1022.3L1260.9 1022.8M1198.4 1109.5L1197.8 1115.6M1205.1 1131L1215.2 1131L1215.2 1139.8L1205.1 1139.8zM1304.2 1144.9L1311.2 1144.9L1311.2 1151.8L1304.2 1151.8zM1274 1161.1L1279.9 1161.5M1262.2 1158.8L1267.6 1164.6M1218.1 1133.6L1225.3 1133.7M1241.6 1057.7L1249.3 1057.7L1249.3 1065.6L1241.6 1065.6zM1254.9 1048.1L1262.8 1048.9M1216 1090.4L1224.9 1090.8M1243.3 1035.4L1234 1044.9M1325.6 1064.7L1330 1064.7L1330 1070.5L1325.6 1070.5zM1243.1 1018.1L1240.5 1023.6M1330.8 1096L1341.6 1096L1341.6 1105L1330.8 1105zM1214.1 1082.8L1220.2 1089.3M1306 1066.2L1313.6 1066.2L1313.6 1073.4L1306 1073.4zM1220.8 1042.2L1229.2 1042.2L1229.2 1051.1L1220.8 1051.1zM1283.8 1128.1L1294.6 1127.8M1209.8 1050.9L1209.6 1060.8M1277.7 1135.8L1284.5 1135.8L1284.5 1140.3L1277.7 1140.3zM1259.9 1035.9L1271.5 1035.9L1271.5 1039L1259.9 1039zM1205.9 1079.7L1202.2 1091.6M1218.9 1050.1L1208.7 1055M1219.8 1125.2L1218.7 1138.8M1201.5 1057L1216.4 1057.9M1327.7 1118.6L1329.1 1122.7M1297.7 1152.9L1304.6 1155.4M1230.2 1063.3L1238.4 1063.3L1238.4 1067.1L1230.2 1067.1zM1280.4 1156L1286.4 1156L1286.4 1159.4L1280.4 1159.4zM1227.1 1116.2L1233.6 1116.2L1233.6 1125.2L1227.1 1125.2zM1246 1157.3L1256.6 1157.3L1256.6 1166.9L1246 1166.9zM1262.9 1129.7L1258 1140M1271.8 1136.9L1271.7 1143.4M1239.1 1031L1239 1035.3M1304.2 1114.5L1311 1114.5L1311 1119L1304.2 1119zM1208.9 1065.7L1220.6 1064.9M1189.7 1085.1a5.1 5.1 0 1 0 10.2 0a5.1 5.1 0 1 0 -10.2 0M1303.3 1132.2a3.2 3.2 0 1 0 6.5 0a3.2 3.2 0 1 0 -6.5 0M1344 1090.3L1349.2 1091.9M1326.4 1128.6L1334.5 1130.8M1296.2 1032.2L1296 1037M1258.1 1165.6L1271.1 1165.7M1227.2 1097.2a5.6 5.6 0 1 0 11.1 0a5.6 5.6 0 1 0 -11.1 0M1297.3 1151L1307.5 1150.3M1279.6 1124.6a4.1 4.1 0 1 0 8.2 0a4.1 4.1 0 1 0 -8.2 0M1226.9 1101.8L1236.8 1101.8L1236.8 1111L1226.9 1111zM1290.8 1132.6L1294.5 1140.4M1308.9 1030.7L1308.2 1041.5M1280 1030.5L1287.9 1030.9M1268.6 1152.8L1272.3 1152.8L1272.3 1159.2L1268.6 1159.2zM1235.6 1122.4L1240.9 1124.9M1196.3 1111.3L1200 1111.3L1200 1115.6L1196.3 1115.6zM1204.2 1062.7L1211.1 1062.1M1198.5 1065.5L1198.2 1073.7M1209.5 1089.4L1208.9 1095.9M1218.5 1061.3L1205.4 1067.1M1254 1024.5L1261.7 1024.5L1261.7 1033.9L1254 1033.9zM1211.3 1036.3L1216.7 1036.3L1216.7 1045.9L1211.3 1045.9zM1224.2 1063.2L1224.4 1077.1M1204.1 1066.6L1214.4 1066.6L1214.4 1075.1L1204.1 1075.1zM1291.5 1135.3L1290.9 1149.1M1226.5 1097.1L1226.2 1103.2M1225.7 1072.7L1237.6 1072.7L1237.6 1076.7L1225.7 1076.7zM1242.7 1037.1L1241.7 1049.9M1293.4 1114.6L1297.9 1126.9M1244.9 1148.8L1249.8 1148.8L1249.8 1157.5L1244.9 1157.5zM1276.2 1050.4L1288 1049.4M1258.8 1044.3L1263.7 1044.3L1263.7 1053.5L1258.8 1053.5zM1332.7 1050L1320.5 1053.9M1330.2 1054.9L1337.6 1054.9L1337.6 1059.2L1330.2 1059.2zM1243.3 1131L1243.3 1138.5M1188.3 1090L1188.1 1101.9M1253.4 1128.8L1259.3 1128.8L1259.3 1133.6L1253.4 1133.6zM1312.8 1028.2L1313.2 1042.5M1322.9 1105.2L1322.5 1116.7M1223.3 1107.7L1227.8 1107.7L1227.8 1111.6L1223.3 1111.6zM1257.8 1159.8L1257.3 1163.9M1309.8 1141.8L1319 1141.8L1319 1147.3L1309.8 1147.3zM1264.5 1159.2L1253.9 1162M1233 1095.4L1233.2 1110.2M1308.5 1031L1313.4 1031L1313.4 1037.3L1308.5 1037.3zM1291.1 1134.9a3.3 3.3 0 1 0 6.5 0a3.3 3.3 0 1 0 -6.5 0M1260.4 1020.7L1266.2 1020.7M1337.4 1127.3L1324.4 1133M1252.1 1022.2L1263.9 1022.2L1263.9 1030.2L1252.1 1030.2zM1273.1 1122.4L1267.8 1128.2M1269.9 1033.4L1282.8 1033.5M1200.3 1076.4L1199.9 1083.9M1206.3 1055.2L1204.3 1061.1M1232 1087.3L1243.8 1087.3L1243.8 1092.8L1232 1092.8zM1197.7 1084.1L1211.3 1082.8M1215.6 1099.6L1220.2 1099.6L1220.2 1105.4L1215.6 1105.4zM1221 1116.9L1226.8 1121.6M1226.4 1054.9L1230 1054.9L1230 1058.9L1226.4 1058.9zM1224.9 1133.9L1230.2 1133.9L1230.2 1142.1L1224.9 1142.1zM1320.5 1135L1332.9 1134M1310.5 1140.1L1316.6 1140.1L1316.6 1148L1310.5 1148zM1228.1 1038.2L1234.2 1038.2L1234.2 1045.9L1228.1 1045.9zM1213.8 1115.5L1221.7 1115.5L1221.7 1121.1L1213.8 1121.1zM1311.5 1080.1L1316.8 1080.7M1327.7 1120.7L1339.3 1120.7L1339.3 1126.8L1327.7 1126.8zM1235.1 1032.4L1243.1 1032.4L1243.1 1036.7L1235.1 1036.7zM1282.6 1126.3L1293.2 1126.3L1293.2 1135.3L1282.6 1135.3zM1298.4 1112.2L1299.1 1124.4M1192.6 1090.4L1192.6 1097.1M1341.8 1062L1340.3 1066.5M1237.2 1128.8L1244.3 1128.8L1244.3 1134L1237.2 1134zM1196.8 1108.9L1201.3 1113.7M1282.1 1144.4L1286.7 1144.8M1222 1049.5L1235.6 1053.7M1225.5 1050.4L1222.2 1060.8M1227.4 1058.6a6.1 6.1 0 1 0 12.3 0a6.1 6.1 0 1 0 -12.3 0M1316.5 1052.5L1326.4 1052.5L1326.4 1056L1316.5 1056zM1321.2 1045a4.9 4.9 0 1 0 9.8 0a4.9 4.9 0 1 0 -9.8 0M1308.7 1151.2L1297.3 1160.7M1213 1103.9L1218.8 1103.9L1218.8 1108.1L1213 1108.1zM1212.3 1076.3L1224.2 1076.3L1224.2 1084.7L1212.3 1084.7zM1300.8 1026.8L1312.3 1027M1235.5 1125.7L1240.8 1127.4M1269.5 1165.3L1281.5 1164.8M1229.1 1122.9L1228 1134M1220.2 1058.1a5 5 0 1 0 10 0a5 5 0 1 0 -10 0M1233.7 1041.6L1238.8 1041.2M1200.6 1097.3L1210.3 1097.3L1210.3 1102.3L1200.6 1102.3zM1245.4 1125.6L1259.7 1125.6M1224.4 1044.5a6.1 6.1 0 1 0 12.3 0a6.1 6.1 0 1 0 -12.3 0M1323.2 1036.5L1331.1 1036.5L1331.1 1044.3L1323.2 1044.3zM1201.7 1081.1a4.1 4.1 0 1 0 8.2 0a4.1 4.1 0 1 0 -8.2 0M1291.1 1051.8L1302.8 1052.2M1196.9 1088.9L1206.7 1088.9L1206.7 1094.6L1196.9 1094.6zM1203.4 1092.4a6.1 6.1 0 1 0 12.1 0a6.1 6.1 0 1 0 -12.1 0M1302.2 1139.2L1314 1139.2L1314 1147.4L1302.2 1147.4zM1318.3 1140.2L1329.3 1140.2L1329.3 1144.2L1318.3 1144.2zM1236.8 1029.4L1250.7 1030.5M1317.7 1104.4L1317.5 1112.6M1277.3 1128.2L1269.7 1136.8M1209 1130.7L1212.1 1141.1M1271.6 1128.6L1264.9 1135.6M1291.9 1132.6L1291.6 1146.5M1331.4 1130.6L1323.1 1133M1232 1020.7L1232.6 1032M1207.6 1038L1214.2 1038L1214.2 1047.8L1207.6 1047.8zM1226.6 1092.5L1221.6 1104.3M1245.3 1060L1239.9 1061.6M1309.7 1075.8L1313.4 1075.8L1313.4 1081.2L1309.7 1081.2zM1218.5 1076a6.8 6.8 0 1 0 13.6 0a6.8 6.8 0 1 0 -13.6 0M1216.4 1138.9L1213.4 1142.5M1279.1 1148.4L1283.4 1161.7M1204.1 1064.3L1207.3 1064.3L1207.3 1070.1L1204.1 1070.1zM1274.8 1161.4L1268.2 1169.1M1202.5 1080.8L1202.3 1086.7M1329.2 1103.9L1338.5 1103.9L1338.5 1108.8L1329.2 1108.8zM1243.6 1017L1243.7 1023.9M1317.8 1051.4L1307.9 1054.3M1323.8 1054.4L1327.6 1054.4L1327.6 1062.7L1323.8 1062.7zM1242.2 1138L1250.2 1138L1250.2 1145.5L1242.2 1145.5zM1211.2 1094.1L1215.1 1098.3M1201.1 1078.9L1194.2 1085.7M1226.4 1087.4L1233.5 1087M1266.2 1137.1a3.7 3.7 0 1 0 7.4 0a3.7 3.7 0 1 0 -7.4 0M1342.7 1087.6L1347.9 1089.9M1204.6 1105L1210.4 1105L1210.4 1108.8L1204.6 1108.8zM1332.5 1092.2L1321.9 1102.3M1261.6 1156.8L1266.1 1167.6M1291.3 1143.5L1303.7 1144.1M1221.9 1142.1L1234.9 1142.2M1245.9 1139.6L1250.3 1139.6L1250.3 1145.9L1245.9 1145.9zM1266.3 1028.8L1266.5 1035.5M1330.3 1088.5L1331.5 1099.4M1237 1138.9L1244.9 1138.9L1244.9 1145.5L1237 1145.5zM1219.2 1112L1232.7 1116.2M1206.3 1104.3L1216.9 1107.5M1296.5 1153.3a3.9 3.9 0 1 0 7.8 0a3.9 3.9 0 1 0 -7.8 0M1241.9 1159L1244 1165.8M1256.5 1139.1L1265.2 1139.8M1270.3 1158.7L1280.5 1158.7L1280.5 1161.9L1270.3 1161.9zM1317.6 1068.2a5.4 5.4 0 1 0 10.9 0a5.4 5.4 0 1 0 -10.9 0M1311.4 1118.9L1309.4 1126M1281 1162.1L1290.9 1162.1L1290.9 1171.9L1281 1171.9zM1246.4 1052.1L1255 1052.1L1255 1058.5L1246.4 1058.5zM1313.7 1031.3L1316.9 1040.3M1229.5 1085.6L1234.9 1085.3M1190.9 1083.9L1203.9 1082.8M1275.1 1042.4L1280 1044.1M1272.8 1157.8L1279.6 1165.9M1316.3 1137L1306.7 1147.7M1291.6 1136.2L1301.8 1138.8M1239.3 1142.9L1238.7 1154.6M1298.1 1082.9L1309.5 1082.9M1257.2 1131.5L1265.1 1133.6M1295.4 1057.5L1306.1 1057.5L1306.1 1065.4L1295.4 1065.4zM1280.8 1143.1L1289 1146.2M1218.6 1033.2L1210.2 1043.2M1196.5 1053.3L1207.5 1053.3L1207.5 1062.5L1196.5 1062.5zM1240.8 1161L1248.6 1160.7M1338.6 1098.4L1350 1099.5M1276.2 1029.6L1286.3 1029.6L1286.3 1034.4L1276.2 1034.4zM1209.7 1137.4L1219.2 1137.3M1307.2 1133.6L1312.6 1133.6L1312.6 1137.2L1307.2 1137.2zM1201.2 1049.9L1202.2 1061.6M1192.9 1110.1L1197.3 1109.7M1271.9 1133.6L1283.8 1132.7M1277.8 1134.8L1272.9 1148.2M1326.4 1052.5L1324.2 1060.1M1200.3 1079.7L1207.1 1087.6M1289.3 1025.7L1292.2 1035.1M1323.2 1139L1331.6 1141.7M1279.4 1027L1279.3 1039M1270.5 1158.7L1265.8 1163.1M1237.9 1052.3L1247 1052.1M1309.5 1135L1303.3 1142.3M1229.4 1073L1231 1076.7M1228.3 1071.8L1225.1 1083.8M1228.8 1122.6L1228.2 1130.5M1254.9 1054.2L1266.3 1054.2L1266.3 1060.5L1254.9 1060.5zM1301.5 1093.3a4.1 4.1 0 1 0 8.2 0a4.1 4.1 0 1 0 -8.2 0M1215.6 1056.7L1216 1062.5M1199.7 1105L1204.1 1105L1204.1 1112.7L1199.7 1112.7zM1264.4 1150.6L1277.4 1150.4M1281.7 1126.1L1290.7 1126.1M1194.8 1091.8L1195.8 1105.3M1215.5 1141.4L1226.8 1142.1M1199.3 1126.2L1200 1138.7M1247.9 1138L1256 1138.5M1188.1 1111.3L1201 1110.6M1192.1 1100.3L1197.8 1100.3L1197.8 1107.1L1192.1 1107.1zM1249.5 1143.9L1256.2 1143.9L1256.2 1147.5L1249.5 1147.5zM1207.3 1097.5L1201.5 1099M1271.6 1153.4L1278 1153.4L1278 1161.6L1271.6 1161.6zM1211.2 1088.8L1219.9 1088.9M1290.3 1061.5L1301.7 1060.6M1302.5 1138.4L1306.1 1138.4L1306.1 1146.8L1302.5 1146.8zM1213 1125.9L1222.6 1126.3M1216.3 1073.2L1223 1079.9M1246.6 1050.5L1239.4 1057.9M1214.4 1101.8L1213.5 1113.8M1278.1 1152.8L1278.8 1166.3M1302 1071.8a6.8 6.8 0 1 0 13.6 0a6.8 6.8 0 1 0 -13.6 0M1201.2 1066.4L1206.4 1071.8M1298.3 1123.4L1299.2 1138M1331.2 1066.7L1332.5 1080.3M1231.7 1030.8L1226.9 1036.4M1238.5 1142.3L1228.9 1145.7M1270.1 1035.2L1275.3 1035.2L1275.3 1042.7L1270.1 1042.7zM1238.2 1126L1247.7 1126L1247.7 1131.1L1238.2 1131.1zM1249.6 1056.9L1253.7 1056.9L1253.7 1064.8L1249.6 1064.8zM1231.7 1057.1L1238.4 1057.1L1238.4 1062.5L1231.7 1062.5zM1255.5 1042.6L1251.6 1046.6M1221.7 1062.8L1235.5 1063.2M1195.5 1102.1L1205.6 1102.1L1205.6 1110.7L1195.5 1110.7zM1301.8 1040.2L1301.5 1049.3M1339.2 1097L1328.4 1106.1M1341.4 1076.6L1341.7 1082.8M1209.8 1079.6L1218.7 1079.6M1254.9 1131.4L1253.9 1142.7M1330.3 1077.5L1335.8 1083.8M1308.1 1144.4L1309.5 1149.6M1308.7 1098.8L1304.5 1102.6M1305.9 1116.8L1309.5 1124.3M1284.6 1054a3.9 3.9 0 1 0 7.9 0a3.9 3.9 0 1 0 -7.9 0M1255.8 1136.3L1255.2 1149.8M1293.8 1153.7L1298 1153.7L1298 1160.8L1293.8 1160.8zM1254.4 1048.7L1257.2 1055.2M1225.3 1145.4L1225 1154.1M1220.9 1024.8L1220.3 1031.2M1305.4 1121.6L1317 1126M1275.8 1038.4L1276.1 1049M1268.1 1154.2L1278.1 1154.2L1278.1 1159.1L1268.1 1159.1zM1205.6 1053.3L1206.7 1064.1M1183.5 1074.4L1198.3 1075.9M1327.7 1070.1L1332.2 1080.1M1267.2 1041.2L1257.1 1051.5M1314.3 1138L1323 1138L1323 1147.3L1314.3 1147.3zM1198.4 1089a6.8 6.8 0 1 0 13.6 0a6.8 6.8 0 1 0 -13.6 0M1305.6 1091.6L1315.6 1094.8M1229.8 1140.3L1238.6 1140.3L1238.6 1144.2L1229.8 1144.2zM1227.1 1096.8L1222.5 1098.3M1231.6 1022.3L1236.7 1022.4M1234.7 1047.1a3.1 3.1 0 1 0 6.2 0a3.1 3.1 0 1 0 -6.2 0M1288.7 1050.5L1287.8 1060.1M1192.3 1069.9L1199.8 1069.9L1199.8 1075.5L1192.3 1075.5zM1334.9 1075.6L1344.1 1075.6L1344.1 1078.7L1334.9 1078.7zM1308.6 1087.5L1316.8 1087.5L1316.8 1095.5L1308.6 1095.5zM1329.1 1038.3L1320.7 1042.4M1235.9 1062L1239.8 1071.2M1289.7 1040.5L1299.7 1040.5L1299.7 1047.3L1289.7 1047.3zM1235.5 1047.4L1235.5 1051.5M1253.3 1027.7L1259 1032.7M1232.8 1089L1226 1095.7M1317.6 1066.2L1326 1065.7M1323.3 1133.5L1331.3 1136.7M1230.4 1041L1230.3 1049.1M1307.2 1070.4L1298.1 1074.6M1227.6 1086.8L1234.7 1086.8L1234.7 1090.2L1227.6 1090.2zM1394.7 990.8L1394.8 1003.6M1375.5 999.5L1366.1 1009.1M1373.3 951.5L1364.6 958.9M1405.4 1016.2L1404.6 1025.7M1365.4 1029.6L1355.6 1033.5M1389.2 953.1L1389.2 960.1M1352.7 929.5L1362.9 929.2M1349 1020.1L1353.7 1020.1L1353.7 1027.6L1349 1027.6zM1384 972.3L1383.9 980.8M1376.5 1013.5L1384.3 1013.5L1384.3 1019.6L1376.5 1019.6zM1376.6 1028.8L1364 1032.3M1379.7 1004.8a6.7 6.7 0 1 0 13.5 0a6.7 6.7 0 1 0 -13.5 0M1379 976.4L1385.6 976.4L1385.6 985L1379 985zM1367.6 928.4L1374.8 929M1405.2 956.7L1413.9 965.2M1422.7 1010.5L1424.1 1014.6M1385 1016.3L1387.2 1021M1353.3 993.6L1364.9 994.7M1373.8 1034.2L1385.6 1034.1M1361.2 983.6L1359.1 991M1411.1 1027.7L1414.2 1027.7L1414.2 1036.8L1411.1 1036.8zM1396.9 957.4L1401.9 957.6M1409.3 950.3a2.9 2.9 0 1 0 5.7 0a2.9 2.9 0 1 0 -5.7 0M1393.9 929.8L1387.8 935.9M1347.7 955.6L1347.4 962M1417 976.3L1419.5 982.6M1373.4 923.4L1373 937M1356.5 1016.5L1369.1 1020.1M1414.2 1022.7L1410.2 1027.2M1377.1 1020.6a4.2 4.2 0 1 0 8.3 0a4.2 4.2 0 1 0 -8.3 0M1393.6 1003.7L1399.2 1010.1M1349.5 1014.9L1354.1 1014.9L1354.1 1020.2L1349.5 1020.2zM1352.6 945.7L1363.9 945.7L1363.9 952.3L1352.6 952.3zM1411.6 966.4L1420.9 967.1M1391.6 1017.8a4.7 4.7 0 1 0 9.4 0a4.7 4.7 0 1 0 -9.4 0M1396.3 948.3L1388.1 955.3M1341.6 952.3L1341.2 958.2M1417.4 942.7L1420.6 951.2M1400.2 940.6a6.1 6.1 0 1 0 12.2 0a6.1 6.1 0 1 0 -12.2 0M1400.4 990.9L1404.4 1000.6M1365.8 929L1369.7 930.8M1345.9 966.7L1346.1 971.8M1403.8 1019.2L1411.8 1019.2L1411.8 1027.4L1403.8 1027.4zM1404 944.6L1404.7 952.8M1402.6 932.1L1414.7 932M1413.3 949L1410.7 955.6M1346.1 984.6L1353.5 984.6L1353.5 988.5L1346.1 988.5zM1421.2 989.9L1425.4 994.2M1400.8 936.5L1400.7 943.3M1382.9 1008.7L1388.6 1009.3M1348 987.8L1357 987.8L1357 994.6L1348 994.6zM1352.2 970.5L1351.7 981.9M1401.6 1028.1L1397.6 1029.7M1335.4 972.9L1348.5 974M1389.7 946.7L1385.9 958.4M1389.7 999.3L1397.6 999.3L1397.6 1008.1L1389.7 1008.1zM1360.7 1018.1L1366.9 1017.6M1382.6 921.4L1385.4 928.6M1373.7 1000.3L1380 1000.3L1380 1004.3L1373.7 1004.3zM1392.3 923L1400.3 923L1400.3 928.4L1392.3 928.4zM1421.4 961.6L1421.7 966.8M1421.4 985.9L1433.9 986.5M1385.3 1009.8L1377.1 1018.3M1346.1 961.7L1349.3 972.4M1370.2 1005.8L1382.8 1006.9M1371.3 960.8L1374 967.4M1394.1 965.1L1399.7 967.8M1343.4 943.3L1352.6 944M1366.7 1013.6L1371.2 1013.6L1371.2 1022.6L1366.7 1022.6zM1418.8 998.9L1425.6 998.9L1425.6 1008.4L1418.8 1008.4zM1340.7 973.1L1345.5 973.1L1345.5 981.5L1340.7 981.5zM1380.4 952.5L1384.2 960.5M1407.7 1026.7L1406.9 1034.2M1388.4 1026L1377.6 1030.8M1414.9 932.2L1425 932.2L1425 939.3L1414.9 939.3zM1386 1020L1390.4 1020L1390.4 1027.2L1386 1027.2zM1402.8 922.6L1408.2 922.8M1390.7 1031.7L1400.6 1031.7L1400.6 1038L1390.7 1038zM1410.9 967.9L1418.4 977.1M1405.3 1010.4L1416.2 1010.6M1402.9 963.6L1412 966.2M1400.9 927.6L1408.6 928.1M1366.7 959.8L1370.3 959.8L1370.3 967.7L1366.7 967.7zM1369.8 928.7L1374.9 928.6M1373.1 1014.2L1383 1014.8M1351.9 1009L1353.4 1013M1401.9 1012.3L1398.6 1015.3M1381.4 958.6L1387.7 958.6L1387.7 965.1L1381.4 965.1zM1400.4 984.3a3.8 3.8 0 1 0 7.6 0a3.8 3.8 0 1 0 -7.6 0M1377.2 965.6L1377.8 972M1386.3 1030L1396.7 1030L1396.7 1035.6L1386.3 1035.6zM1400.4 1018.4L1406.9 1018.4L1406.9 1024.2L1400.4 1024.2zM1386.9 989.9L1400.4 989.8M1419.7 964.8L1431.9 964.5M1415.9 933L1421.9 939M1367.6 1033.5L1372.5 1033.5L1372.5 1042.8L1367.6 1042.8zM1360.7 1027.8L1364.9 1027.8M1412.8 1020L1419 1020.6M1420.6 936.2L1414.2 943.6M1374.2 928.3L1381.2 936.9M1368.7 1011.8L1369.3 1018.9M1383.2 1009.2L1392.8 1009.2L1392.8 1017.9L1383.2 1017.9zM1333 1014.9L1331.6 1031.2M1365.7 1006.5L1366.1 1018.6M1297.7 1007.6L1301.3 1007.6L1301.3 1012.3L1297.7 1012.3zM1330.2 1034.8L1338.1 1044.2M1313.4 1005.4L1322.8 1005.4L1322.8 1012.2L1313.4 1012.2zM1301.7 1029.3L1316.1 1029.6M1312.5 992.6L1322.5 992.6L1322.5 1002L1312.5 1002zM1317.9 1040.5L1334.3 1047.4M1320.4 993.5a6.6 6.6 0 1 0 13.2 0a6.6 6.6 0 1 0 -13.2 0M1331.3 1019.4L1331.4 1026.6M1323.1 1017L1306.4 1022.1M1359.7 989.2L1364.3 989.2L1364.3 995.1L1359.7 995.1zM1323.9 1028a4.7 4.7 0 1 0 9.3 0a4.7 4.7 0 1 0 -9.3 0M1292.1 1001.8L1297.1 1003.3M1326.7 994.3L1338.1 994.3L1338.1 1004.2L1326.7 1004.2zM1319.4 1037.9L1323.6 1037.9L1323.6 1046.1L1319.4 1046.1zM1318.7 1035.2L1333.5 1041.4M1329.3 1010.2L1337.6 1019.8M1300.9 986.7L1306.2 993.1M1356.5 1008.4L1356.7 1020.5M1325.5 1002.3L1335 1002.3L1335 1009.7L1325.5 1009.7zM1338.3 1002.9L1349.1 1003.6M1311.5 1018.8L1316.8 1020.5M1355 1027.7a2.9 2.9 0 1 0 5.7 0a2.9 2.9 0 1 0 -5.7 0M1324.3 987.1L1336.4 987.7M1318.1 983L1325.1 999.5M1288.9 1031.2L1296.9 1038M1360.9 1034.2L1377.8 1033.3M1345.1 1004.8L1345.3 1010.4M1304.5 993.7L1305.5 1005.5M1294.5 1040.3L1293.9 1047.6M1315.3 1040.5a4.3 4.3 0 1 0 8.6 0a4.3 4.3 0 1 0 -8.6 0M1330.4 1039.6L1344.3 1045.5M1304.2 988.8L1313.4 988.3M1296.3 1045.4a2.7 2.7 0 1 0 5.3 0a2.7 2.7 0 1 0 -5.3 0M1359.6 989.4L1359.3 1001.3M1361.4 1009.9a2.5 2.5 0 1 0 4.9 0a2.5 2.5 0 1 0 -4.9 0M1298 1027.8L1301.9 1040.4M1301.9 1044.3a2.2 2.2 0 1 0 4.3 0a2.2 2.2 0 1 0 -4.3 0M1347.5 986.9a3 3 0 1 0 6 0a3 3 0 1 0 -6 0M1305 989.2L1304.7 1000.5M1321.9 1002.2L1328.4 1002.2L1328.4 1011.4L1321.9 1011.4zM1313.9 1022.6L1317.5 1022.6L1317.5 1027.7L1313.9 1027.7zM1323.1 1016.8a5.6 5.6 0 1 0 11.2 0a5.6 5.6 0 1 0 -11.2 0M1362.2 986L1373.8 986L1373.8 993.3L1362.2 993.3zM1368 1010.5L1363.3 1012.6M1337.5 1005.3L1349.9 1011.1M1295 1042.6L1299.2 1047.7M1307.6 1010.2L1307.9 1014.9M1330.3 988.7L1337.6 997.4M1344.5 1030L1344 1041M1324.1 991.5L1332.8 991.8M1342.8 1001.4L1357.8 1001M1310.6 1010.7L1314.1 1010.7L1314.1 1018.4L1310.6 1018.4zM1360.5 999.1L1370.4 1011.1M1353.3 1000.3L1340.2 1012.1M1302.3 1024.5L1303.5 1041.2M1304.8 996.8L1310.8 996.5M1339.1 1020.4L1352.6 1021.5M1335.7 1006.7a5.9 5.9 0 1 0 11.8 0a5.9 5.9 0 1 0 -11.8 0M1330.3 1024.9L1337.4 1025.4M1327.4 996.6L1337 1008.1M1326.3 1046.7L1311.5 1051.3M1354.2 1029.6L1355.6 1033.4M1356 998.5L1352.4 1001.6M1337.6 1026.9L1342.7 1026.9L1342.7 1034.7L1337.6 1034.7zM1324 1041L1324.1 1056.6M1367.3 1007.9L1367.7 1013.5M1360 983.8L1349.7 992.9M1319 1035.8L1310.6 1043.7M1306 984.5L1302.6 994.3M1304 1000.4L1308.1 1004.6M1289.1 1007.8L1299.9 1017.9M1292.1 1028.2L1292.6 1045.6M1339.2 1012.6L1338.5 1030.4M1354.1 1009L1360.5 1010.9M1321.9 1017.3L1322.3 1028.3M1295 1040.9L1302.9 1040.9L1302.9 1047.6L1295 1047.6zM1315.9 1009.2L1324.5 1009.2L1324.5 1012.5L1315.9 1012.5zM1364.9 1003.3L1350.7 1008.4M1025.6 947.9L1021.2 949.7M998.8 904a3.8 3.8 0 1 0 7.7 0a3.8 3.8 0 1 0 -7.7 0M1035.2 938L1044.7 938L1044.7 943.7L1035.2 943.7zM986.8 943.9L992.8 943.9L992.8 950.8L986.8 950.8zM1018.4 921.6L1018.6 925.4M1023.2 953.5L1033.2 953.5L1033.2 961.8L1023.2 961.8zM1010.9 935.6L1023 936.6M1021.5 904.6L1025.2 908.2M990.9 956.9L980.2 961.5M986.3 943.2L995.6 943.2L995.6 949.6L986.3 949.6zM1026 942.7L1030.4 944.6M1001.9 924.7L1009 932.7M1030 917.9a6.5 6.5 0 1 0 13 0a6.5 6.5 0 1 0 -13 0M985.7 950.4L998 950.6M1048.8 958L1058.7 966M992.4 940.8L992.1 949.7M995 958L989.7 960.1M1018.2 928.1L1009.5 932.3M985.7 919.1L998.8 922.7M1039.7 944L1046.3 944L1046.3 948.8L1039.7 948.8zM1001.1 935.3L1012.7 935.3L1012.7 939L1001.1 939zM1054.5 933.2L1054.5 936.3M1010.1 927.3L1021.3 927.3L1021.3 930.6L1010.1 930.6zM996.6 926.1L997.2 933.3M1014.4 939.9L1022.1 940.4M982.2 948.3a3.6 3.6 0 1 0 7.3 0a3.6 3.6 0 1 0 -7.3 0M1007.1 901.9a5.8 5.8 0 1 0 11.6 0a5.8 5.8 0 1 0 -11.6 0M1027.5 908.5L1026.6 919.3M1006.4 928L1017.9 927.1M982.9 913a5.3 5.3 0 1 0 10.6 0a5.3 5.3 0 1 0 -10.6 0M1034.7 937.1a3 3 0 1 0 5.9 0a3 3 0 1 0 -5.9 0M1019.8 901.1L1011.9 908.1M1010.5 927.2L1015.7 927.2L1015.7 933.8L1010.5 933.8zM985 906.7L985.1 917.4M1036.6 920.8a3.3 3.3 0 1 0 6.5 0a3.3 3.3 0 1 0 -6.5 0M1020 938.7L1025.6 938.7L1025.6 948L1020 948zM1045.9 911.8L1045.8 916.1M997.4 909.2L1009.3 909.2L1009.3 915.5L997.4 915.5zM1015.9 915.7L1019.1 922.5M1025.5 919.1L1034.8 918.4M1028.9 960.5L1027.5 964M1020.1 923.8L1030.4 923.8L1030.4 932.4L1020.1 932.4zM1037.8 921.3L1039.2 925.5M981.3 929.9L989.4 930.2M1022.7 926L1030.1 926L1030.1 933.8L1022.7 933.8zM1001.1 932.4L1004.8 933.8M999.9 935.2L1010.8 939.4M1027.1 912.4L1036 912.4L1036 919.5L1027.1 919.5zM1037.3 947.3L1050.5 947.4M996.4 963.1L1006.9 963.1L1006.9 969.8L996.4 969.8zM1001.1 954.4L1003.7 962.2M1001.5 906.6L1008 906.4M997.7 908.6L992 915.2M1039.6 899L1050.9 903.4M1015.4 930.8L1003.5 934.5M1007 917.1L1019.2 917.5M1054.4 932.8L1057.5 932.8L1057.5 941.5L1054.4 941.5zM1039.9 912.7L1047.3 912.2M1048.5 933.9L1059.2 934.2M1030.1 911.2L1030.5 916.2M998.8 902.2L1001.6 912.8M1022.1 900.5L1024.9 903.4M986.8 941.1L996.5 941.1L996.5 946.2L986.8 946.2zM985.5 940.1L995.4 942.6M1046.4 901.5a4.3 4.3 0 1 0 8.5 0a4.3 4.3 0 1 0 -8.5 0M1023.1 964.1L1029.4 964.1L1029.4 967.8L1023.1 967.8zM1025.9 935L1024.1 939.2M1042.4 917.4L1048.9 917.4L1048.9 925.6L1042.4 925.6zM987.4 930.1L998.2 929M989.8 909.1L993 909.1L993 916L989.8 916zM1001.8 919.5L1012.8 919.5L1012.8 925.2L1001.8 925.2zM987.1 950.1L984.5 952.6M1000.9 907.2L1000.6 910.2M1024.7 938.7L1032.4 938.9M1038.4 918.2L1038.3 931.9M1032.9 918.1L1039.1 918.1L1039.1 923.6L1032.9 923.6zM1052.3 908.4L1052.5 916.4M1038.9 955.3L1026.2 960.3M1047.7 923.1L1048.4 933.2M991.1 955.8L995.5 956.2M1019.7 956.5L1025.8 958.8M1027.4 910.7L1017.1 915.3M1051.3 939.2L1062.3 939.2L1062.3 944.6L1051.3 944.6zM1018.8 957.6L1020.2 970.6M1014.1 954.7L1026.4 953.5M1009.4 940.7L1000.7 951.3M1029.8 937.6L1036.9 937.6L1036.9 942.6L1029.8 942.6zM1006.6 951.1L1018.5 956.3M990.8 919.6L993.6 929.7M997.3 931.1L1006.9 931.1L1006.9 940.5L997.3 940.5zM1034.9 915L1035.1 923.8M1052.9 958.5L1047.6 963.9M1035.5 909.9L1045.3 909.8M1033.5 919.4L1045.1 919.4M1008.1 951.4L1016.6 951.4L1016.6 960.2L1008.1 960.2zM990.6 902.8a2.5 2.5 0 1 0 5 0a2.5 2.5 0 1 0 -5 0M999 919.5L1000 931.3M1014.4 906L1015.1 918.5M1002.4 908.2L1011.3 908.2L1011.3 916L1002.4 916zM1021.6 911.3L1028 911.3L1028 914.4L1021.6 914.4zM1002.8 964.9L1008.9 964.9L1008.9 973.8L1002.8 973.8zM1044.3 941.3L1044.3 946.1M998.8 959.8L1003.1 959.8L1003.1 963.1L998.8 963.1zM1007.6 950.1L1013.5 950.1M1012.6 925.7L1011.1 929M1056.4 954.7L1051.5 960.1M1001.2 912.9L1009.5 913.3M1002.2 944.3L1006.4 944M1049.9 915.2L1053.7 915.2L1053.7 924.7L1049.9 924.7zM1041.6 955.1L1046.1 960.4M1012.7 944.9L1021.6 955.1M1052.9 925.6L1053.4 931.5M996.1 950.2L996.1 957M1012.9 918.7L1020.8 918.7L1020.8 922.8L1012.9 922.8zM989.2 955L985 959.7M1044.7 914.1L1049.8 914.1L1049.8 918.5L1044.7 918.5zM987.4 907.2L992 907.2L992 914.7L987.4 914.7zM1042 963.9L1052.6 963.3M1052.3 921.4L1062.4 921.4L1062.4 929L1052.3 929zM1041.7 919.3L1044.4 921.8" fill="none" stroke="#000" stroke-width="1.2"/>
<path d="M1382.7 933.6C1384.6 934.4 1384.7 934.1 1388.4 936.1C1392.1 938.1 1390.3 936.9 1393.7 939.6C1397.1 942.2 1395.5 940.8 1398.6 944C1401.7 947.3 1400.3 945.5 1402.9 949.3C1405.6 953.1 1404.4 951.1 1406.6 955.3C1408.8 959.5 1407.8 957.4 1409.5 961.9C1411.2 966.5 1410.5 964.2 1411.7 969C1412.8 973.9 1412.4 971.4 1413 976.4C1413.5 981.4 1413.4 979 1413.4 984C1413.4 989 1413.5 986.6 1413 991.6C1412.4 996.6 1412.8 994.1 1411.7 999C1410.5 1003.8 1411.2 1001.5 1409.5 1006.1C1407.8 1010.6 1408.8 1008.5 1406.6 1012.7C1404.4 1016.9 1405.6 1014.9 1402.9 1018.7C1400.3 1022.5 1401.7 1020.7 1398.6 1024C1395.5 1027.2 1397.1 1025.8 1393.7 1028.4C1390.3 1031.1 1392.1 1029.9 1388.4 1031.9C1384.7 1033.9 1386.6 1033.1 1382.7 1034.4C1378.9 1035.7 1380.8 1035.3 1376.8 1035.8C1372.8 1036.4 1374.8 1036.3 1370.8 1036.2C1366.8 1036 1368.8 1036.3 1364.8 1035.4C1360.9 1034.5 1362.8 1035.1 1359 1033.6C1355.2 1032 1357 1032.9 1353.4 1030.6C1349.8 1028.4 1350 1028.1 1348.3 1026.8M1383.9 928C1386 928.9 1386.1 928.5 1390.2 930.7C1394.3 933 1392.4 931.7 1396.1 934.6C1399.9 937.6 1398.2 936 1401.6 939.6C1405 943.2 1403.4 941.3 1406.4 945.4C1409.3 949.6 1408 947.4 1410.4 952.1C1412.9 956.8 1411.8 954.4 1413.7 959.5C1415.6 964.6 1414.8 962 1416.1 967.4C1417.3 972.7 1416.9 970 1417.5 975.6C1418.2 981.1 1418 978.4 1418 984C1418 989.6 1418.2 986.9 1417.5 992.4C1416.9 998 1417.3 995.3 1416.1 1000.6C1414.8 1006 1415.6 1003.4 1413.7 1008.5C1411.8 1013.6 1412.9 1011.2 1410.4 1015.9C1408 1020.6 1409.3 1018.4 1406.4 1022.6C1403.4 1026.7 1405 1024.8 1401.6 1028.4C1398.2 1032 1399.9 1030.4 1396.1 1033.4C1392.4 1036.3 1394.3 1035 1390.2 1037.3C1386.1 1039.5 1388.2 1038.6 1383.9 1040C1379.6 1041.5 1381.8 1041 1377.3 1041.6C1372.9 1042.3 1375.1 1042.1 1370.7 1042C1366.2 1041.8 1368.4 1042.1 1364 1041.1C1359.6 1040.1 1361.7 1040.8 1357.5 1039.1C1353.3 1037.3 1355.3 1038.3 1351.4 1035.8C1347.4 1033.3 1347.5 1033 1345.6 1031.5M1403.5 915.7C1405.6 916.6 1405.7 916.2 1409.7 918.3C1413.6 920.5 1411.8 919.3 1415.4 922.1C1419.1 925 1417.4 923.4 1420.7 926.9C1424 930.4 1422.5 928.5 1425.3 932.6C1428.2 936.7 1426.9 934.5 1429.3 939.1C1431.6 943.6 1430.6 941.3 1432.4 946.2C1434.3 951.2 1433.5 948.7 1434.7 953.9C1436 959.1 1435.5 956.5 1436.1 961.8C1436.8 967.2 1436.6 964.6 1436.6 970C1436.6 975.4 1436.8 972.8 1436.1 978.2C1435.5 983.5 1436 980.9 1434.7 986.1C1433.5 991.3 1434.3 988.8 1432.4 993.8C1430.6 998.7 1431.6 996.4 1429.3 1000.9C1426.9 1005.5 1428.2 1003.3 1425.3 1007.4C1422.5 1011.5 1424 1009.6 1420.7 1013.1C1417.4 1016.6 1419.1 1015 1415.4 1017.9C1411.8 1020.7 1413.6 1019.5 1409.7 1021.7C1405.7 1023.8 1407.7 1022.9 1403.5 1024.3C1399.4 1025.7 1401.5 1025.2 1397.2 1025.9C1392.9 1026.5 1395 1026.4 1390.7 1026.2C1386.4 1026.1 1388.5 1026.3 1384.3 1025.4C1380 1024.5 1382.1 1025.1 1378 1023.4C1373.9 1021.7 1375.8 1022.7 1372 1020.3C1368.1 1017.8 1368.3 1017.5 1366.4 1016.1M1391.5 932.2C1393.2 932.9 1393.3 932.6 1396.6 934.4C1399.8 936.2 1398.3 935.2 1401.3 937.5C1404.3 939.9 1402.9 938.6 1405.7 941.5C1408.4 944.3 1407.1 942.8 1409.5 946.2C1411.9 949.5 1410.8 947.8 1412.7 951.5C1414.7 955.2 1413.8 953.3 1415.4 957.4C1416.9 961.5 1416.2 959.4 1417.3 963.7C1418.3 968 1417.9 965.8 1418.4 970.3C1418.9 974.7 1418.8 972.5 1418.8 977C1418.8 981.5 1418.9 979.3 1418.4 983.7C1417.9 988.2 1418.3 986 1417.3 990.3C1416.2 994.6 1416.9 992.5 1415.4 996.6C1413.8 1000.7 1414.7 998.8 1412.7 1002.5C1410.8 1006.2 1411.9 1004.5 1409.5 1007.8C1407.1 1011.2 1408.4 1009.7 1405.7 1012.5C1402.9 1015.4 1404.3 1014.1 1401.3 1016.5C1398.3 1018.8 1399.8 1017.8 1396.6 1019.6C1393.3 1021.4 1395 1020.7 1391.5 1021.8C1388.1 1023 1389.8 1022.6 1386.3 1023.1C1382.7 1023.6 1384.5 1023.5 1380.9 1023.4C1377.4 1023.2 1379.1 1023.5 1375.6 1022.7C1372.1 1021.9 1373.8 1022.5 1370.4 1021C1367 1019.6 1368.7 1020.5 1365.5 1018.5C1362.3 1016.5 1362.4 1016.2 1360.9 1015M1383.9 928L1384.7 924.1M1394.5 933.4L1396.1 929.9M1403.7 942L1405.9 939M1410.9 953.1L1413.7 951M1415.8 966.2L1418.8 965M1417.9 980.4L1421.1 980.1M1417.2 994.8L1420.4 995.5M1413.7 1008.5L1416.6 1010.2M1407.6 1020.7L1410.1 1023.3M1399.3 1030.7L1401.2 1033.9M1389.3 1037.7L1390.6 1041.5M1378.3 1041.5L1378.7 1045.5M1366.8 1041.6L1366.5 1045.7M1355.7 1038.3L1354.6 1042M815.7 1044a60.3 61.2 0 1 0 120.6 0a60.3 61.2 0 1 0 -120.6 0M809 1044a67 68 0 1 0 134 0a67 68 0 1 0 -134 0M839 1024a65 66 0 1 0 130 0a65 66 0 1 0 -130 0M836.4 1034a53.6 54.4 0 1 0 107.2 0a53.6 54.4 0 1 0 -107.2 0M943 1044L947.7 1044M940.3 1063.2L944.8 1064.5M932.4 1080.8L936.3 1083.3M919.9 1095.4L922.9 1099M903.8 1105.9L905.8 1110.2M885.5 1111.3L886.2 1116M866.5 1111.3L865.8 1116M848.2 1105.9L846.2 1110.2M832.1 1095.4L829.1 1099M819.6 1080.8L815.7 1083.3M811.7 1063.2L807.2 1064.5M809 1044L804.3 1044M811.7 1024.8L807.2 1023.5M819.6 1007.2L815.7 1004.7M832.1 992.6L829.1 989M848.2 982.1L846.2 977.8M866.5 976.7L865.8 972M885.5 976.7L886.2 972M903.8 982.1L905.8 977.8M919.9 992.6L922.9 989M932.4 1007.2L936.3 1004.7M940.3 1024.8L944.8 1023.5M851.8 1035a36.9 37.4 0 1 0 73.7 0a36.9 37.4 0 1 0 -73.7 0M868.5 1035a20.1 20.4 0 1 0 40.2 0a20.1 20.4 0 1 0 -40.2 0M848.4 1035a40.2 40.8 0 1 0 80.4 0a40.2 40.8 0 1 0 -80.4 0M846.7 1041a33.5 34 0 1 0 67 0a33.5 34 0 1 0 -67 0M868.2 1028a30.2 30.6 0 1 0 60.3 0a30.2 30.6 0 1 0 -60.3 0M1193.7 1098a60.3 61.2 0 1 0 120.6 0a60.3 61.2 0 1 0 -120.6 0M1187 1098a67 68 0 1 0 134 0a67 68 0 1 0 -134 0M1217 1080a65 66 0 1 0 130 0a65 66 0 1 0 -130 0M1214.4 1089a53.6 54.4 0 1 0 107.2 0a53.6 54.4 0 1 0 -107.2 0M1321 1098L1325.7 1098M1318.3 1117.2L1322.8 1118.5M1310.4 1134.8L1314.3 1137.3M1297.9 1149.4L1300.9 1153M1281.8 1159.9L1283.8 1164.2M1263.5 1165.3L1264.2 1170M1244.5 1165.3L1243.8 1170M1226.2 1159.9L1224.2 1164.2M1210.1 1149.4L1207.1 1153M1197.6 1134.8L1193.7 1137.3M1189.7 1117.2L1185.2 1118.5M1187 1098L1182.3 1098M1189.7 1078.8L1185.2 1077.5M1197.6 1061.2L1193.7 1058.7M1210.1 1046.6L1207.1 1043M1226.2 1036.1L1224.2 1031.8M1244.5 1030.7L1243.8 1026M1263.5 1030.7L1264.2 1026M1281.8 1036.1L1283.8 1031.8M1297.9 1046.6L1300.9 1043M1310.4 1061.2L1314.3 1058.7M1318.3 1078.8L1322.8 1077.5M1229.8 1089.9a36.9 37.4 0 1 0 73.7 0a36.9 37.4 0 1 0 -73.7 0M1246.5 1089.9a20.1 20.4 0 1 0 40.2 0a20.1 20.4 0 1 0 -40.2 0M1226.4 1089.9a40.2 40.8 0 1 0 80.4 0a40.2 40.8 0 1 0 -80.4 0M1224.7 1095.3a33.5 34 0 1 0 67 0a33.5 34 0 1 0 -67 0M1246.2 1083.6a30.2 30.6 0 1 0 60.3 0a30.2 30.6 0 1 0 -60.3 0M918.7 966.1L921 973.2M881.1 1077.6L878.5 1084.9M827.9 1083a3.8 3.8 0 1 0 7.6 0a3.8 3.8 0 1 0 -7.6 0M922.3 1083.9L924.9 1090.7M938.9 1053.6L941.8 1054.6M865.7 980.5L875.2 980.5L875.2 988.4L865.7 988.4zM891.8 1101.6L896 1101.6L896 1106.5L891.8 1106.5zM825.3 1057L825.2 1060.6M833.6 1035.9L838.2 1035.9L838.2 1045.1L833.6 1045.1zM830.4 1047.8a4.8 4.8 0 1 0 9.6 0a4.8 4.8 0 1 0 -9.6 0M918.6 1098.6a5 5 0 1 0 10 0a5 5 0 1 0 -10 0M946.9 1037.9L946.6 1046M964 1047.7L975.9 1047.7L975.9 1056.5L964 1056.5zM868.3 983.9L864.8 991.7M887.8 965.9L898 965.9L898 974L887.8 974zM855.6 1004.7L853.4 1007.2M962.4 1050.1L968.7 1050.1L968.7 1059.6L962.4 1059.6zM840.6 978.3L840.3 982.3M939.4 994.5L940.1 1003.3M859.2 1058.1L865.2 1059.7M846.3 992.3L844.3 997.5M849.2 980.4L854.6 982.4M833 1034.1L837.4 1034.1L837.4 1042.9L833 1042.9zM858.8 1073.9L867.3 1074.7M813.9 1052.4L817.2 1060.2M847.8 1029.7L848 1037.1M955.5 1033.7L965.6 1033.7L965.6 1041L955.5 1041zM844.8 1031.4L844.6 1037.7M815.1 1034.4a4.3 4.3 0 1 0 8.6 0a4.3 4.3 0 1 0 -8.6 0M945.7 1063L949.6 1067.2M855.9 1015.1L866.7 1015.1L866.7 1024.3L855.9 1024.3zM948.3 1059.6L952.7 1059.7M906.8 1087.8L906.9 1091.1M930.1 1070.5a3 3 0 1 0 6 0a3 3 0 1 0 -6 0M928 1083.6L926.1 1087.7M934.9 1086.1L939.7 1091.9M911.6 974.5L917.8 980.7M941.4 1076.5L937.6 1077.9M839.3 1070L835.4 1072M880.2 1107.8L886 1108M878.7 980L884.8 980.3M951.7 1015.6L956.1 1015.3M901.3 1079.2L901.6 1083.6M891 1089.7L894.5 1089.7M851.6 1083.7L853.3 1088.1M867 1072.3L863.8 1075.6M882 1068.3L882 1074.1M858.3 1059.9L858.5 1065.2M941.1 1015.4L949 1015.3M832 1019.8L831.8 1024.5M878.6 1071.9L873.5 1078M826.7 993.6L836.5 993.6L836.5 997.5L826.7 997.5zM872.4 1076L870.4 1080.6M1306 1029.4L1303 1030.5M1302.1 1108.9L1302.2 1117.7M1221.8 1111.9L1228.3 1111.9L1228.3 1120L1221.8 1120zM1258.9 1036.2L1262 1039M1228.5 1085L1236.2 1085L1236.2 1092L1228.5 1092zM1333.8 1054.3L1333.6 1057.5M1270.6 1149L1272.8 1156.9M1191.1 1076.7L1199.3 1076.7L1199.3 1083.5L1191.1 1083.5zM1312.7 1041.5L1320.9 1042.2M1296.7 1126.1L1297.4 1133.2M1300.2 1120L1308 1120L1308 1128L1300.2 1128zM1245.7 1033.4L1248.8 1034.9M1291.6 1131.8L1290.7 1140.1M1233.8 1052.4a3.4 3.4 0 1 0 6.8 0a3.4 3.4 0 1 0 -6.8 0M1212.7 1117.6L1213 1122.4M1189.6 1087.6L1196 1089.8M1217.7 1102.7L1218.4 1110.9M1332.2 1071.4L1335.4 1071.5M1307.8 1082.5L1314 1088.5M1262.6 1045.7L1255 1048.7M1223.4 1051.2L1229.2 1057.6M1235.4 1060.1L1242.9 1060.1L1242.9 1064.9L1235.4 1064.9zM1303.1 1028.5L1310.8 1031.7M1298.1 1154.3L1309.3 1154.3L1309.3 1161.9L1298.1 1161.9zM1337.9 1109.8L1345.4 1109.3M1264.1 1150a4.5 4.5 0 1 0 8.9 0a4.5 4.5 0 1 0 -8.9 0M1316.7 1107.3a5.8 5.8 0 1 0 11.5 0a5.8 5.8 0 1 0 -11.5 0M1271.6 1019.9L1271.4 1023.5M1285.4 1034.6L1285.8 1041M1290.9 1139.1L1294 1139.5M1227.9 1078.2L1234.9 1077.8M1331.4 1070.9a3.2 3.2 0 1 0 6.4 0a3.2 3.2 0 1 0 -6.4 0M1238.7 1114.7L1243.5 1114.7L1243.5 1121.9L1238.7 1121.9zM1188.3 1095.5L1196.8 1094.7M1251 1048L1259 1047.5M1208.8 1119L1212.2 1119L1212.2 1122.2L1208.8 1122.2zM1302 1044.9a6.3 6.3 0 1 0 12.5 0a6.3 6.3 0 1 0 -12.5 0M1264.5 1144.4L1261.5 1151.3M1294.9 1119.1L1302.5 1119.1L1302.5 1127.4L1294.9 1127.4zM1338.6 1095.4L1344.6 1097.5M1322.5 1083.2L1328.6 1083.2L1328.6 1088.3L1322.5 1088.3zM1240.6 1128.5L1250.8 1128.5L1250.8 1137.5L1240.6 1137.5zM1294.3 1119.8L1301.9 1119.8L1301.9 1129.2L1294.3 1129.2zM1332.2 1071.3L1329.1 1079.3M1204.9 1048.8L1211.1 1049.3M1338.5 1090.9L1339 1098.6M1324 1124.5L1330.1 1129.8M1316.7 1085.5L1316.5 1091.3M1268.4 1134.5L1262.6 1139.4M1204.8 1106.7L1206.9 1112.4M1217.1 1118.7L1214 1119.8M1256.2 1140.9a4.5 4.5 0 1 0 9 0a4.5 4.5 0 1 0 -9 0M1251.4 1133.2a5.5 5.5 0 1 0 11 0a5.5 5.5 0 1 0 -11 0M1009.8 957.6L1009.6 960.6M1004.9 945.2L1011.5 945.2L1011.5 951.6L1004.9 951.6zM1013.4 946.6L1020.9 946.6L1020.9 954.9L1013.4 954.9zM1025.2 913.9L1017.7 916.4M993.2 956.4L987.2 963.3M1015.4 913.9L1009.2 919M998.4 907a6.9 6.9 0 1 0 13.9 0a6.9 6.9 0 1 0 -13.9 0M995.1 915.8L995 920M1053.2 927.6L1046.3 930.1M1001.9 935.3L998.5 936.7M1003.4 944.8L1012.2 944.8L1012.2 951.2L1003.4 951.2zM1037.4 951.3L1037.9 956.4M1043.9 921.4L1050.6 921.4L1050.6 925.7L1043.9 925.7zM1009.4 953.2L1019.2 953.2L1019.2 962.6L1009.4 962.6zM997.6 942.5L1001.3 942.5L1001.3 945.9L997.6 945.9zM1002.7 918.4L1006.7 918.3M996.7 939.2L1004.3 939.2L1004.3 948.9L996.7 948.9zM1052.3 935.2L1043.5 938.7M992.8 937.8L996.2 938.8M995.5 955.9L1002 955.8M989 931.2L993.4 934.9M1003.5 907.3L997 914.6M1029.9 945.5L1034.1 945.7M1041.3 920.3L1049.5 920.6M1010.8 951.7L1018 951.6M1040.3 900.7L1040.6 909.8M1031.7 915.4L1036.8 915.4L1036.8 923.6L1031.7 923.6zM996.2 905.9L1001.4 906.2M1008.1 956.2L1012.8 958.2M1039.6 923.3L1033.8 928.9" fill="none" stroke="#000" stroke-width="2"/>
<path d="M1000 1000L1002 1050M1003 1000L1005 1050M1010 1000L1012 1050M1013 1000L1015 1050M1020 1000L1022 1050M1023 1000L1025 1050M1030 1000L1032 1050M1033 1000L1035 1050M1040 1000L1042 1050M1043 1000L1045 1050M1050 1000L1052 1050M1053 1000L1055 1050M1065 1000L1067 1050M1068 1000L1070 1050M1075 1000L1077 1050M1078 1000L1080 1050M1090 1000L1092 1050M1093 1000L1095 1050M1110 1000L1112 1050M1113 1000L1115 1050M1122 1000L1124 1050M1125 1000L1127 1050M1137 1000L1139 1050M1140 1000L1142 1050M965 1000L1060 994L1165 990M968 1004L1165 994M1000 1055L1140 1060M990 1050L1000 1058L1145 1064M965 1000L975 1030L1000 1055M1165 995L1215 975M1165 1002L1220 982M1140 1060L1190 1030M1150 1000L1150 1045M1158 998L1158 1040M1108 990a7 7 0 1 0 14 0a7 7 0 1 0 -14 0M1111 990a4 4 0 1 0 8 0a4 4 0 1 0 -8 0M1093 988a5 5 0 1 0 10 0a5 5 0 1 0 -10 0M865 950C870 946 866.7 943.3 880 938C893.3 932.7 889.3 933.3 905 934C920.7 934.7 919.7 938 927 940M868 956C873.3 952 871.3 949.3 884 944C896.7 938.7 891.7 939.3 906 940C920.3 940.7 920 944 927 946M880 960L930 962M1060 985L1170 980M1295 1035L1357 985M1300 1040L1362 990M1310 1010L1340 1035M1320 1000L1350 1025M1230 1000L1290 985M1235 1006L1295 991" fill="none" stroke="#4a4a4a" stroke-width="1"/>
</svg>
<div id="lb0"></div><div id="lb1"></div><div id="rb"></div>
<div id="handle"></div>
<svg width="12" height="40" style="left:0;top:577px" viewBox="0 0 12 40">
<path d="M7 7v5l-3-2.500zM7 16v5l-3-2.500zM7 25v5l-3-2.500z" fill="#3a3a3c"/>
</svg>
<div id="dimetric">*Dimetric</div>
<!-- triad -->
<svg width="90" height="70" style="left:20px;top:1065px" viewBox="20 1065 90 70">
<g font-family="Liberation Sans,sans-serif" font-size="8">
<line x1="39" y1="1107" x2="39" y2="1082" stroke="#1f8a1f" stroke-width="2.400"/>
<path d="M39 1081l-2.500 9h5z" fill="#38c838"/>
<path d="M39 1081l0 9h2.500z" fill="#9be89b"/>
<text x="36" y="1076" fill="#1d7a1d">Y</text>
<line x1="40" y1="1107" x2="60" y2="1110" stroke="#d01818" stroke-width="2.600"/>
<path d="M67 1111l-10 -3.200l-0.800 5z" fill="#f04040"/>
<path d="M67 1111l-10 -3.200l-0.200 2z" fill="#ffd0c8"/>
<path d="M68 1107l4 4.500l-4 4.500z" fill="none" stroke="#d01818" stroke-width="1"/>
<line x1="39" y1="1107" x2="31" y2="1113" stroke="#1818b8" stroke-width="2.600"/>
<circle cx="31" cy="1113" r="2.600" fill="#1c1cc8"/>
<text x="24" y="1122" fill="#1818b0" font-weight="bold">z</text>
</g>
</svg>
<!-- title bar -->
<div id="titlebar"></div><div id="redstrip"></div><div id="logo"></div><div id="logoarrow"></div>
<div id="title">Digger [Read-only]</div>
<svg width="1920" height="60" viewBox="0 0 1920 60">
<!-- DS logo -->
<g fill="none" stroke="#fff" stroke-linecap="round" stroke-linejoin="round">
<path d="M16.500 4.900L22.800 5.300Q24.600 5.600 23.600 7.800Q22.200 10.600 17.800 11.900" stroke-width="1.700"/>
<path d="M14.300 15.600L9.600 24.400Q15 22.600 18.600 19Q20.800 15.400 17.600 14.500L12.800 14.700" stroke-width="1.800"/>
<path d="M29.400 11.700L24.200 11.900Q21.600 12.600 23 15.200L27.400 19Q28.600 21.800 25.400 22.400L19.800 22.500" stroke-width="2.100"/>
</g>
<g font-family="Liberation Sans,sans-serif" font-style="italic" fill="#fff">
<text x="35.500" y="22.500" font-size="12.700" font-weight="bold" textLength="40.500" lengthAdjust="spacingAndGlyphs">SOLID</text>
<text x="76.800" y="22.500" font-size="12.700" textLength="43.500" lengthAdjust="spacingAndGlyphs">WORKS</text>
</g>
<path d="M134 10.500v8l3.500-4z" fill="#3c3d44"/>
<!-- new doc -->
<path d="M174.500 6.500h8.500l4 4v11h-12.500z" fill="#eef4fa" stroke="#555b66" stroke-width="1"/>
<path d="M175.500 12h10.500v9h-10.500z" fill="#c9dcec" opacity=".7"/>
<path d="M183 6.500v4h4" fill="#dfe8f0" stroke="#555b66" stroke-width="1"/>
<path d="M195.500 14h5l-2.500 3z" fill="#222"/>
<!-- open (disabled) -->
<path d="M209.500 21.500v-10h4l1.500-2h4v2h4l2 2l-3.500 8z" fill="#d2d3d7" stroke="#b4b5ba" stroke-width="1"/>
<path d="M218 8l3-2.500l1 1.500 2.500-0.500-1 2.500" fill="none" stroke="#b9babf" stroke-width="1.300"/>
<path d="M231.500 14h5l-2.500 3z" fill="#a9aaae"/>
<!-- save -->
<path d="M245.500 6.500h15v15h-13.500l-1.500-1.500z" fill="#2648c8" stroke="#16278a" stroke-width="1"/>
<rect x="248" y="7" width="10" height="7" fill="#f2f4f8"/>
<path d="M249 9h8M249 11h8" stroke="#9aa2b4" stroke-width="1"/>
<rect x="249" y="16" width="8" height="5.500" fill="#d6dbe8"/>
<rect x="250.500" y="17" width="2.500" height="4" fill="#2648c8"/>
<path d="M267.500 14h5l-2.500 3z" fill="#222"/>
<!-- print -->
<path d="M284.500 12l1.500-6h7l2 6z" fill="#cfe0f4" stroke="#6a7fa0" stroke-width="1"/>
<path d="M281.500 13.500q0-2 2-2h11q2.500 0 2.500 2v5.500h-15.500z" fill="#e9e9ec" stroke="#55585e" stroke-width="1"/>
<path d="M284 17.500h10.500v4h-10.500z" fill="#3b3d42" stroke="#2a2b2f" stroke-width="1"/>
<path d="M285.500 19.500h7.500" stroke="#fff" stroke-width="1.200"/>
<path d="M303.500 14h5l-2.500 3z" fill="#222"/>
<!-- undo (disabled) -->
<path d="M322 8l-4 4.500l5.500 2v-2.500c5-1 7 2.500 2.500 8.500c8-5 5.500-13-2.500-12z" fill="#c3c4c9" stroke="#b0b1b6" stroke-width=".8"/>
<path d="M339.500 14h5l-2.500 3z" fill="#a9aaae"/>
<!-- select -->
<rect x="350.500" y="3.500" width="34" height="21" fill="#e2e3e7" stroke="#8a8b90"/>
<rect x="351" y="4" width="22" height="20" fill="#b9babe"/>
<path d="M373.500 4v20" stroke="#9a9ba0"/>
<path d="M356.500 6.500v13l3.200-3l2.300 5.500l2.200-1l-2.300-5.200h4.300z" fill="#fff" stroke="#222" stroke-width="1.100" stroke-linejoin="round"/>
<path d="M375.500 14h5l-2.500 3z" fill="#222"/>
<!-- traffic light -->
<rect x="393" y="6" width="8" height="16.500" rx="3.500" fill="#20221f"/>
<circle cx="397" cy="10.300" r="2.700" fill="#e02020"/>
<circle cx="397" cy="17.800" r="2.900" fill="#28c828"/>
<!-- options -->
<path d="M413.500 10.500h13v11h-13z" fill="#f4f4f6" stroke="#55575c"/>
<path d="M415 14h10M415 16.500h10M415 19h10" stroke="#8d8f96" stroke-width="1"/>
<path d="M417 10.500l3-3.500 5-0.500 3.500 2.500-2 2.500-5 0.500z" fill="#e8a85a" stroke="#7a5a34" stroke-width=".8"/>
<path d="M417.500 9.500l3 2M419.500 8l3 2.500" stroke="#6a4a24" stroke-width=".8"/>
<!-- checklist -->
<path d="M435.500 6.500h15v15h-15z" fill="#dcecf6" stroke="#3e6c8c"/>
<path d="M437 9h2.500v2.500h-2.500zM437 13h2.500v2.500h-2.500z" fill="#fff" stroke="#3e6c8c" stroke-width=".8"/>
<path d="M441.500 10h7M441.500 14h7M441.500 18.500h7" stroke="#3e6c8c" stroke-width="1.200"/>
<path d="M436.500 17.500l2 2l3.500-3.500" fill="none" stroke="#1f9a2a" stroke-width="1.700"/>
<path d="M457.500 14h5l-2.500 3z" fill="#222"/>
<!-- right title controls -->
<text x="1819.500" y="20.500" font-family="Liberation Sans,sans-serif" font-size="16" fill="#f6f6f8" stroke="#3c3e44" stroke-width="2.200" paint-order="stroke" font-weight="bold">?</text>
<path d="M1841 14h5l-2.500 3z" fill="#222"/>
<rect x="1856.500" y="17.500" width="10" height="2.500" rx="1" fill="#f4f4f6" stroke="#44464c" stroke-width=".9"/>
<rect x="1882.500" y="8.500" width="9" height="8" fill="#dcdde2" stroke="#44464c"/>
<rect x="1877.500" y="12.500" width="10" height="8" fill="#dcdde2" stroke="#44464c"/>
<rect x="1879.500" y="15" width="6" height="3.500" fill="#c9cacf" stroke="#44464c" stroke-width=".8"/>
<path d="M1903 9.500l10.500 9M1913.500 9.500l-10.500 9" stroke="#3c3e44" stroke-width="3.800" stroke-linecap="round"/>
<path d="M1903 9.500l10.500 9M1913.500 9.500l-10.500 9" stroke="#f4f4f6" stroke-width="1.700" stroke-linecap="round"/>
<!-- viewport window controls -->
<rect x="1804" y="37" width="12" height="12" fill="#a9a9a9"/>
<path d="M1806.500 40h3l-2.500 3 2.500 3h-3zM1811 40h2.500v6h-2.500z" fill="#111"/>
<path d="M1806 43l3.500-3v6z" fill="#a9a9a9"/>
<rect x="1827" y="37" width="12" height="12" fill="#a9a9a9"/>
<path d="M1829.500 40h2.500v6h-2.500zM1833 40l4 3l-4 3z" fill="#111"/>
<rect x="1850" y="45.500" width="11.500" height="3.500" fill="#a9a9a9"/>
<path d="M1877.500 38.500h8v7h-3" fill="none" stroke="#a9a9a9" stroke-width="1.300"/>
<rect x="1872" y="41.500" width="9" height="7" fill="#050505" stroke="#a9a9a9" stroke-width="1.600"/>
<path d="M1897.500 38.500l10 9.500M1907.500 38.500l-10 9.500" stroke="#b4b4b4" stroke-width="2.600"/>
<!-- heads-up view toolbar -->
<g opacity=".88">
<circle cx="818.500" cy="41.500" r="5" fill="#c4c6ca" stroke="#6d6f74" stroke-width="1.200"/>
<circle cx="818.500" cy="41.500" r="1.600" fill="#3a3c40"/>
<path d="M822.500 45.500l5 5" stroke="#7aa6d8" stroke-width="2.400" stroke-linecap="round"/>
<circle cx="842.500" cy="41.500" r="5" fill="#a9abb0" stroke="#63656a" stroke-width="1.200"/>
<rect x="837" y="36" width="10" height="9" fill="none" stroke="#6d7076" stroke-width=".8" stroke-dasharray="2 1.500"/>
<path d="M846.500 45.500l5 5" stroke="#7aa6d8" stroke-width="2.400" stroke-linecap="round"/>
<path d="M861 38l10 10" stroke="#4d8ad8" stroke-width="4" stroke-linecap="round"/>
<path d="M864.500 41.500l6 6" stroke="#cfe4fa" stroke-width="2.600" stroke-linecap="round"/>
<path d="M868 39.500h7M868 39.500l2.500-2.500M868 39.500l2.500 2.500" stroke="#3a4fc0" stroke-width="1.300" fill="none"/>
<path d="M883 38.500q7-4 13.500 0v11.500q-6.500-3.500-13.500 0z" fill="#4a6a90" stroke="#a6b8cc" stroke-width=".8"/>
<path d="M884 40v10M895.500 40v10" stroke="#e8c020" stroke-width="2.400" stroke-dasharray="2 1"/>
<path d="M887 38.500v10h6v-10" fill="#15181c" stroke="#8aa0ba" stroke-width=".7"/>
<rect x="905" y="41" width="10" height="10" fill="#5f8fd0" stroke="#2f55a0" stroke-width="1"/>
<path d="M905 41l4.500-4.500h10.500v10l-5 4.500" fill="none" stroke="#556070" stroke-width=".9"/>
<path d="M913 37v5M919.500 44h-4" stroke="#e03030" stroke-width="1.200"/>
<path d="M928.500 42.500h5l-2.500 3z" fill="#7c7e84"/>
<path d="M943.500 40.500l4-4h10v10.500l-4 4h-10z" fill="#0c0c0e" stroke="#9a9ca2" stroke-width=".9"/>
<path d="M951 40.500l6-3.500v10l-6 4z" fill="#5f8fd0" stroke="#a8c4ea" stroke-width=".7"/>
<path d="M943.500 40.500h7.500v10.500" fill="none" stroke="#c8cad0" stroke-width=".9"/>
<path d="M965.500 42.500h5l-2.500 3z" fill="#7c7e84"/>
<circle cx="982" cy="45" r="2.800" fill="#8a8c92" stroke="#5c5e64" stroke-width=".8"/>
<circle cx="990" cy="46.500" r="2.800" fill="#8a8c92" stroke="#5c5e64" stroke-width=".8"/>
<path d="M982 42l2-3.500M990 43.500l4-3M984.500 45.500h3" stroke="#77797f" stroke-width=".9" fill="none"/>
<path d="M1002.500 42.500h5l-2.500 3z" fill="#7c7e84"/>
<circle cx="1023.500" cy="43.500" r="8" fill="#2f6fd8"/>
<path d="M1023.500 43.500v-8a8 8 0 0 1 8 8z" fill="#e03224"/>
<path d="M1023.500 43.500h8a8 8 0 0 1-8 8z" fill="#e8a020"/>
<path d="M1023.500 43.500v8a8 8 0 0 1-8-8z" fill="#2aa838"/>
<circle cx="1021" cy="40.500" r="3" fill="#fff" opacity=".35"/>
<path d="M1039 46.500h17v5h-17z" fill="#f0f0f0"/>
<path d="M1039 46.500h3v2.500h-3zM1045 46.500h3v2.500h-3zM1051 46.500h3v2.500h-3zM1042 49h3v2.500h-3zM1048 49h3v2.500h-3zM1054 49h2v2.500h-2z" fill="#1a1a1a"/>
<circle cx="1047" cy="42" r="6" fill="#2f6fd8"/>
<path d="M1047 42v-6a6 6 0 0 1 6 6z" fill="#e03224"/>
<path d="M1047 42h6a6 6 0 0 1-6 6z" fill="#e8a020"/>
<path d="M1047 42v6a6 6 0 0 1-6-6z" fill="#2aa838"/>
<path d="M1062.500 42.500h5l-2.500 3z" fill="#7c7e84"/>
<rect x="1076.500" y="37.500" width="13" height="10" fill="#3a3c42" stroke="#a6a8ae" stroke-width="1"/>
<path d="M1078 45l3-4 2.500 3 2.500-4 3 5" fill="none" stroke="#c6c8ce" stroke-width=".8"/>
<path d="M1083 48v2.500M1078.500 51h9" stroke="#a6a8ae" stroke-width="1.300"/>
<path d="M1085 38l4-2.500 3.500 1.500-2.500 3z" fill="#e8a85a" stroke="#7a5a34" stroke-width=".6"/>
<path d="M1099.500 42.500h5l-2.500 3z" fill="#7c7e84"/>
</g>
</svg>
<!-- taskbar -->
<div id="taskbar"></div>
<div class="tbtn" style="left:246px;width:58px"></div>
<div class="tbtn" style="left:308px;width:58px"></div>
<div id="showdesk"></div>
<div id="clock">3:58 PM<br>7/13/2015</div>
<svg width="1920" height="1200" viewBox="0 0 1920 1200" style="pointer-events:none">
<defs>
<radialGradient id="orb" cx=".5" cy=".35" r=".7"><stop offset="0" stop-color="#9fd0f0"/><stop offset=".45" stop-color="#3b7fc8"/><stop offset="1" stop-color="#143a78"/></radialGradient>
<linearGradient id="ieg" x1="0" y1="0" x2="0" y2="1"><stop offset="0" stop-color="#7fd4ff"/><stop offset="1" stop-color="#1a7fd8"/></linearGradient>
</defs>
<!-- start orb -->
<circle cx="26.500" cy="1181" r="18.500" fill="url(#orb)" stroke="#8fb4dc" stroke-width="1.200"/>
<ellipse cx="26.500" cy="1171" rx="14" ry="8" fill="#fff" opacity=".22"/>
<path d="M19.500 1173.500q3.500-2 6.500 0l-1.500 6.500q-3-2-6.500 0z" fill="#ee5a28"/>
<path d="M27.500 1174q3.500 2 6.500 0l-1.500 6.500q-3 2-6.500 0z" fill="#8ac83c"/>
<path d="M17.500 1181.500q3.500-2 6.500 0l-1.500 6.500q-3-2-6.500 0z" fill="#3a9ce8"/>
<path d="M25.500 1182q3.500 2 6.500 0l-1.500 6.500q-3 2-6.500 0z" fill="#f8c020"/>
<!-- IE -->
<text x="76" y="1194" font-family="Liberation Sans,sans-serif" font-size="41" font-weight="bold" fill="url(#ieg)" stroke="#1560b0" stroke-width=".5" textLength="27" lengthAdjust="spacingAndGlyphs">e</text>
<path d="M100 1166c7-3 4 5-4 11" fill="none" stroke="#f0c828" stroke-width="2.600" stroke-linecap="round"/>
<path d="M86 1168c-14 9-14 26 0 22" fill="none" stroke="#f0c828" stroke-width="2.600" stroke-linecap="round"/>
<!-- explorer -->
<path d="M135 1169h10l2 2h18v22h-30z" fill="#f2d98a" stroke="#c9a94e" stroke-width="1"/>
<path d="M137 1170.500h6v2h-6z" fill="#3aa040"/><path d="M147 1172h4v2h-4z" fill="#d04030"/><path d="M156 1172h7v2h-7z" fill="#4a90d8"/>
<path d="M135 1178h30v15h-30z" fill="#f8e8a8" stroke="#c9a94e" stroke-width=".8"/>
<path d="M139 1185h23v9h-23z" fill="#8cc4ee" stroke="#5a96c8" stroke-width="1"/>
<path d="M144 1182h13v4h-13z" fill="#b8dcf6" stroke="#5a96c8" stroke-width=".8"/>
<path d="M147 1188h8v3h-8z" fill="#f0d070"/>
<!-- media player -->
<path d="M201 1167h24v26h-24z" fill="#6fa8dc" opacity=".75"/>
<path d="M198.500 1169.500h22v24h-22z" fill="#9cc8ee" stroke="#5a88b8" stroke-width="1"/>
<circle cx="210" cy="1181.500" r="9" fill="#f08020" stroke="#fff" stroke-width="1.600"/>
<path d="M207 1176.500v10l8-5z" fill="#fff"/>
<!-- cmd -->
<rect x="259" y="1168" width="30" height="24" fill="#000" stroke="#c8ccd4" stroke-width="1"/>
<rect x="259" y="1168" width="30" height="3" fill="#d8dce4"/>
<text x="262" y="1180" font-family="Liberation Mono,monospace" font-size="7" fill="#fff">C:\_</text>
<!-- SW 2015 -->
<path d="M321 1172l13-8l14 6l-1 17l-13 7l-13-6z" fill="#d8201c"/>
<path d="M321 1172l13-8l14 6l-13 7z" fill="#f04838"/>
<path d="M335 1177l13-7l-1 17l-13 7z" fill="#a81410"/>
<text x="323" y="1188" font-family="Liberation Sans,sans-serif" font-size="14" font-weight="bold" fill="#fff" textLength="23" lengthAdjust="spacingAndGlyphs">SW</text>
<text x="329" y="1195" font-family="Liberation Sans,sans-serif" font-size="9.500" font-weight="bold" fill="#fff" stroke="#222" stroke-width="1.600" paint-order="stroke" textLength="22" lengthAdjust="spacingAndGlyphs">2015</text>
<!-- tray -->
<path d="M1742.500 1183l4-4l4 4z" fill="#fff"/>
<path d="M1764.500 1174v14" stroke="#fff" stroke-width="1.400"/>
<path d="M1765 1175q4-2 7 0t6 0v7q-3 2-6 0t-7 0z" fill="#fff" opacity=".95"/>
<circle cx="1774.500" cy="1184" r="4.500" fill="#d83030" stroke="#f4b0b0" stroke-width=".6"/>
<path d="M1772.500 1182l4 4M1776.500 1182l-4 4" stroke="#fff" stroke-width="1.500"/>
<rect x="1793.500" y="1176.500" width="9" height="8" fill="#223" stroke="#fff" stroke-width="1.200"/>
<path d="M1789 1174v4h4v-4M1791 1178v9h11" fill="none" stroke="#fff" stroke-width="1.300"/>
<path d="M1795 1181l6 6M1801 1181l-6 6" stroke="#e02020" stroke-width="1.800"/>
<path d="M1812 1178h3l4-4v14l-4-4h-3z" fill="#fff"/>
<path d="M1821 1178.500q2 2.500 0 5M1823 1176.500q3.500 4.500 0 9" fill="none" stroke="#fff" stroke-width="1.200"/>
</svg>
</div>
</body>
</html>
